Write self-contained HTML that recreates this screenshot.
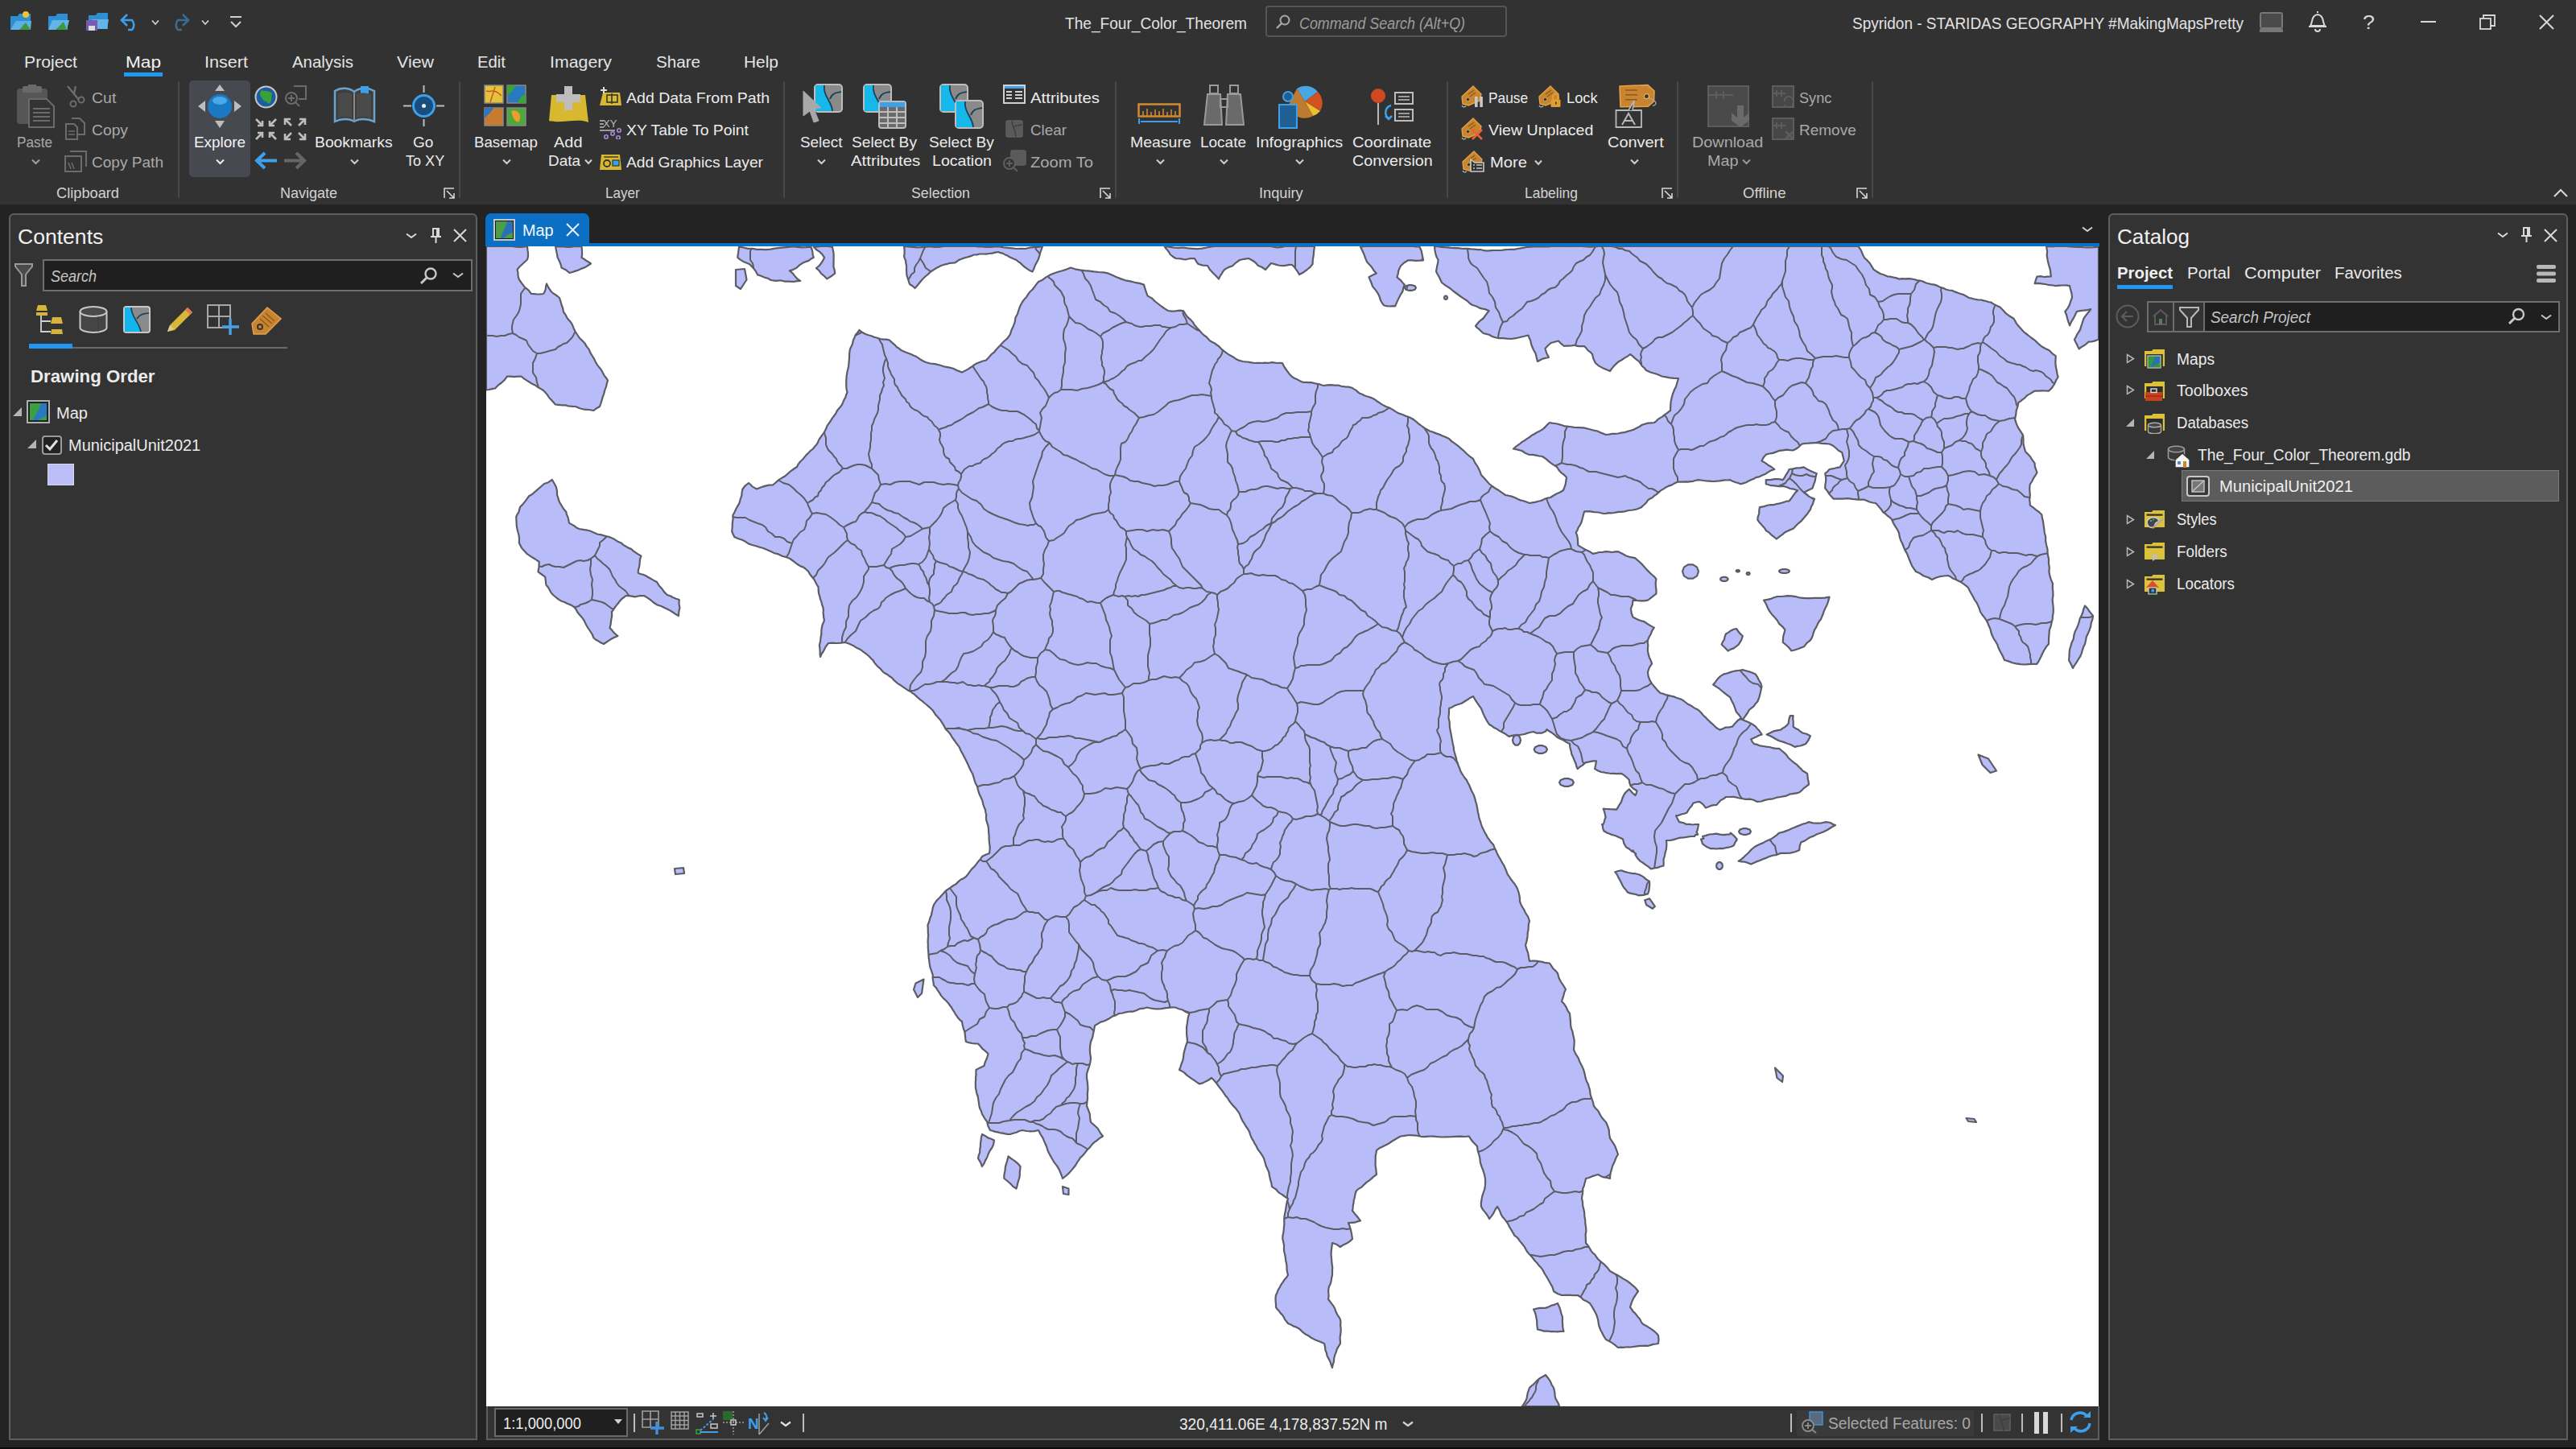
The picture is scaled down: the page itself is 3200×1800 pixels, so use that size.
<!DOCTYPE html>
<html><head><meta charset="utf-8">
<style>
*{box-sizing:border-box;margin:0;padding:0}
html,body{width:3200px;height:1800px;overflow:hidden;background:#232323;font-family:"Liberation Sans",sans-serif;color:#e8e8e8}
.abs{position:absolute}
#top{position:absolute;left:0;top:0;width:3200px;height:254px;background:#323232}
.t{position:absolute;white-space:nowrap;line-height:1}
.rb{font-size:21px;color:#e6e6e6}
.dis{color:#8a8a8a}
.tab{font-size:23px;color:#e6e6e6}
.grp{font-size:20px;color:#c8c8c8}
.sep{position:absolute;width:2px;background:#454545}
.panel{position:absolute;background:#333;border:2px solid #5e5e5e;border-radius:6px 6px 0 0}
svg{display:block}
</style></head><body>
<div id="top">
<div class="abs" style="left:154px;top:90px;width:48px;height:5px;background:#1d9bf0"></div>
<div class="abs" style="left:1572px;top:7px;width:300px;height:39px;border:2px solid #555;border-radius:4px"></div>
<svg class="abs" style="left:1584px;top:17px" width="20" height="20" viewBox="0 0 20 20"><circle cx="12" cy="8" r="5.5" fill="none" stroke="#aaa" stroke-width="2"/><path d="M8,12 L2,18" stroke="#aaa" stroke-width="2.4"/></svg>
<svg class="abs" style="left:12px;top:12px" width="28" height="26" viewBox="0 0 28 26"><path d="M1,8 H10 L12,5 H26 V25 H1Z" fill="#2f8fd0"/><path d="M1,25 L8,14 H27 L26,25Z" fill="#5cb0e8"/><path d="M12,25 L20,16 L26,25Z" fill="#3c9a3c"/><circle cx="20" cy="6" r="4" fill="#f4c430"/></svg>
<svg class="abs" style="left:59px;top:14px" width="28" height="24" viewBox="0 0 28 24"><path d="M1,6 H10 L12,3 H25 V23 H1Z" fill="#2f8fd0"/><path d="M1,23 L6,11 H27 L24,23Z" fill="#64b4ea"/><path d="M10,23 L20,13 L24,23Z" fill="#3c9a3c"/></svg>
<svg class="abs" style="left:106px;top:13px" width="29" height="26" viewBox="0 0 29 26"><path d="M4,6 H13 L15,3 H28 V23 H4Z" fill="#2f8fd0"/><path d="M4,23 L9,11 H29 L27,23Z" fill="#64b4ea"/><rect x="1" y="12" width="14" height="13" fill="#7a5ab0"/><rect x="4" y="19" width="8" height="6" fill="#ddd"/></svg>
<svg class="abs" style="left:149px;top:16px" width="27" height="23" viewBox="0 0 27 23"><path d="M4,9 H15 A9,9 0 0 1 15,21 H10" fill="none" stroke="#3ea0ea" stroke-width="2.6"/><path d="M9,2 L2,9 L9,16" fill="none" stroke="#3ea0ea" stroke-width="2.6"/></svg>
<svg class="abs" style="left:187.5px;top:23.5px" width="10" height="8" viewBox="0 0 10 8"><path d="M1,1.5 L5.0,6 L9,1.5" fill="none" stroke="#cfcfcf" stroke-width="1.8"/></svg>
<svg class="abs" style="left:211px;top:16px" width="25" height="23" viewBox="0 0 25 23"><path d="M21,9 H10 A9,9 0 0 0 10,21 H15" fill="none" stroke="#3a6c94" stroke-width="2.6"/><path d="M16,2 L23,9 L16,16" fill="none" stroke="#3a6c94" stroke-width="2.6"/></svg>
<svg class="abs" style="left:249.5px;top:23.5px" width="10" height="8" viewBox="0 0 10 8"><path d="M1,1.5 L5.0,6 L9,1.5" fill="none" stroke="#cfcfcf" stroke-width="1.8"/></svg>
<svg class="abs" style="left:285px;top:19px" width="16" height="17" viewBox="0 0 16 17"><path d="M1,2 H15" stroke="#cfcfcf" stroke-width="2"/><path d="M2,8 L8,14 L14,8" fill="none" stroke="#cfcfcf" stroke-width="2"/></svg>
<svg class="abs" style="left:2806px;top:14px" width="31" height="27" viewBox="0 0 31 27"><rect x="2" y="2" width="27" height="19" rx="2" fill="#4a4a4a" stroke="#777" stroke-width="2"/><rect x="1" y="22" width="29" height="4" fill="#777"/></svg>
<svg class="abs" style="left:2865px;top:12px" width="28" height="28" viewBox="0 0 28 28"><path d="M14,2 V4 M5,20 C8,16 6,7 14,6 C22,7 20,16 23,20 Z M3,21 H25 M11,24 A3,3 0 0 0 17,24" fill="none" stroke="#d8d8d8" stroke-width="2"/></svg>
<div class="abs" style="left:3007px;top:26px;width:19px;height:2px;background:#d8d8d8"></div>
<svg class="abs" style="left:3080px;top:18px" width="20" height="19" viewBox="0 0 20 19"><rect x="1" y="5" width="13" height="13" fill="none" stroke="#d8d8d8" stroke-width="1.8"/><path d="M5,5 V1 H19 V14 H14" fill="none" stroke="#d8d8d8" stroke-width="1.8"/></svg>
<svg class="abs" style="left:3154px;top:18px" width="19" height="19" viewBox="0 0 19 19"><path d="M1,1 L18,18 M18,1 L1,18" stroke="#d8d8d8" stroke-width="2"/></svg>
<div class="abs" style="left:221px;top:101px;width:2px;height:145px;background:#474747"></div>
<div class="abs" style="left:570px;top:101px;width:2px;height:145px;background:#474747"></div>
<div class="abs" style="left:973px;top:101px;width:2px;height:145px;background:#474747"></div>
<div class="abs" style="left:1385px;top:101px;width:2px;height:145px;background:#474747"></div>
<div class="abs" style="left:1797px;top:101px;width:2px;height:145px;background:#474747"></div>
<div class="abs" style="left:2083px;top:101px;width:2px;height:145px;background:#474747"></div>
<div class="abs" style="left:2325px;top:101px;width:2px;height:145px;background:#474747"></div>
<svg class="abs" style="left:551px;top:233px" width="15" height="14" viewBox="0 0 15 14"><path d="M1,13 V1 H13" fill="none" stroke="#d8d8d8" stroke-width="1.6"/><path d="M4,4 L13,13 M7,13 H13 V7" fill="none" stroke="#d8d8d8" stroke-width="1.6"/></svg>
<svg class="abs" style="left:1366px;top:233px" width="15" height="14" viewBox="0 0 15 14"><path d="M1,13 V1 H13" fill="none" stroke="#d8d8d8" stroke-width="1.6"/><path d="M4,4 L13,13 M7,13 H13 V7" fill="none" stroke="#d8d8d8" stroke-width="1.6"/></svg>
<svg class="abs" style="left:2064px;top:233px" width="15" height="14" viewBox="0 0 15 14"><path d="M1,13 V1 H13" fill="none" stroke="#d8d8d8" stroke-width="1.6"/><path d="M4,4 L13,13 M7,13 H13 V7" fill="none" stroke="#d8d8d8" stroke-width="1.6"/></svg>
<svg class="abs" style="left:2306px;top:233px" width="15" height="14" viewBox="0 0 15 14"><path d="M1,13 V1 H13" fill="none" stroke="#d8d8d8" stroke-width="1.6"/><path d="M4,4 L13,13 M7,13 H13 V7" fill="none" stroke="#d8d8d8" stroke-width="1.6"/></svg>
<svg class="abs" style="left:3172px;top:234px" width="18" height="12" viewBox="0 0 18 12"><path d="M1,10 L9,2 L17,10" fill="none" stroke="#d8d8d8" stroke-width="2"/></svg>
<svg class="abs" style="left:20px;top:105px" width="48" height="54" viewBox="0 0 48 54"><rect x="1" y="5" width="38" height="44" rx="4" fill="#565656"/><rect x="8" y="2" width="24" height="8" rx="2" fill="#6a6a6a"/><rect x="15" y="0" width="10" height="4" fill="#6a6a6a"/><path d="M16,18 H38 L47,27 V53 H16Z" fill="#333" stroke="#6a6a6a" stroke-width="2"/><path d="M21,30 H42 M21,35 H42 M21,40 H42 M21,45 H42" stroke="#6a6a6a" stroke-width="2"/></svg>
<svg class="abs" style="left:38.8px;top:197px" width="11" height="8" viewBox="0 0 11 8"><path d="M1,1.5 L5.5,6 L10,1.5" fill="none" stroke="#a0a0a0" stroke-width="2"/></svg>
<svg class="abs" style="left:82px;top:106px" width="24" height="28" viewBox="0 0 24 28"><path d="M2,1 L16,18 M12,1 L10,10" stroke="#6c6c6c" stroke-width="2.4" fill="none"/><circle cx="9" cy="23" r="3.5" fill="none" stroke="#6c6c6c" stroke-width="2"/><circle cx="19" cy="18" r="3.5" fill="none" stroke="#6c6c6c" stroke-width="2"/></svg>
<svg class="abs" style="left:81px;top:146px" width="25" height="28" viewBox="0 0 25 28"><path d="M1,8 H11 L15,12 V27 H1Z" fill="none" stroke="#6c6c6c" stroke-width="2"/><path d="M8,1 H18 L24,7 V21 H15" fill="none" stroke="#6c6c6c" stroke-width="2"/><path d="M4,17 H12 M4,21 H12" stroke="#6c6c6c" stroke-width="1.5"/></svg>
<svg class="abs" style="left:80px;top:187px" width="28" height="27" viewBox="0 0 28 27"><path d="M7,1 H27 V20 M1,7 H21 V26 H1Z" fill="none" stroke="#6c6c6c" stroke-width="2"/><path d="M5,15 L8,23 M9,15 L12,23" stroke="#6c6c6c" stroke-width="1.6"/></svg>
<div class="abs" style="left:235px;top:100px;width:76px;height:120px;background:#474950;border-radius:5px"></div>
<svg class="abs" style="left:245px;top:104px" width="56" height="56" viewBox="0 0 56 56"><path d="M28,1 L34,9 H22Z M28,55 L22,46 H34Z M1,28 L10,21 V35Z M55,28 L46,35 V21Z" fill="#bdbdbd"/><circle cx="28" cy="28" r="15" fill="#1b78c2"/><ellipse cx="28" cy="21" rx="9" ry="5" fill="#4aa8e8"/></svg>
<svg class="abs" style="left:267.8px;top:197px" width="11" height="8" viewBox="0 0 11 8"><path d="M1,1.5 L5.5,6 L10,1.5" fill="none" stroke="#f0f0f0" stroke-width="2"/></svg>
<svg class="abs" style="left:316px;top:106px" width="29" height="29" viewBox="0 0 29 29"><circle cx="14.5" cy="14.5" r="13" fill="#1d5f9e" stroke="#c8c8c8" stroke-width="2"/><path d="M9,6 C14,8 18,6 22,10 C20,15 23,20 18,23 C15,19 10,20 9,15 C6,12 7,9 9,6Z" fill="#3aa03a"/></svg>
<svg class="abs" style="left:352px;top:105px" width="29" height="28" viewBox="0 0 29 28"><circle cx="10" cy="17" r="7" fill="none" stroke="#6c6c6c" stroke-width="2"/><path d="M6,17 H14 M10,13 V21 M15,22 L20,27" stroke="#6c6c6c" stroke-width="2"/><path d="M13,2 H28 V18 H19" fill="none" stroke="#6c6c6c" stroke-width="2"/></svg>
<svg class="abs" style="left:316px;top:146px" width="29" height="29" viewBox="0 0 29 29"><g stroke="#bdbdbd" stroke-width="2.6" fill="none"><path d="M2,2 L10,10 M4,10 H10 V4"/><path d="M27,2 L19,10 M25,10 H19 V4"/><path d="M2,27 L10,19 M4,19 H10 V25"/><path d="M27,27 L19,19 M25,19 H19 V25"/></g></svg>
<svg class="abs" style="left:352px;top:146px" width="29" height="29" viewBox="0 0 29 29"><g stroke="#bdbdbd" stroke-width="2.6" fill="none"><path d="M10,10 L2,2 M2,9 V2 H9"/><path d="M19,10 L27,2 M27,9 V2 H20"/><path d="M10,19 L2,27 M2,20 V27 H9"/><path d="M19,19 L27,27 M27,20 V27 H20"/></g></svg>
<svg class="abs" style="left:316px;top:188px" width="29" height="23" viewBox="0 0 29 23"><path d="M28,11.5 H6 M13,2 L3,11.5 L13,21" fill="none" stroke="#3ea0ea" stroke-width="4"/></svg>
<svg class="abs" style="left:352px;top:188px" width="29" height="23" viewBox="0 0 29 23"><path d="M1,11.5 H23 M16,2 L26,11.5 L16,21" fill="none" stroke="#666" stroke-width="4"/></svg>
<svg class="abs" style="left:414px;top:107px" width="54" height="47" viewBox="0 0 54 47"><path d="M2,6 C10,1 20,2 26,7 C32,2 42,1 51,6 V44 C42,40 32,40 26,44 C20,40 10,40 2,44Z" fill="#3e3e3e" stroke="#6ba3cf" stroke-width="2.5"/><path d="M26,7 V44" stroke="#8a8a8a" stroke-width="2"/><path d="M34,0 H44 V28 L39,23 L34,28Z" fill="#3ea0ea"/><path d="M6,10 C12,7 18,7 23,10 V40 C18,37 12,37 6,40Z M29,10 C33,8 40,8 47,10 V40 C40,37 33,37 29,40Z" fill="#4a4a4a"/></svg>
<svg class="abs" style="left:434.5px;top:197px" width="11" height="8" viewBox="0 0 11 8"><path d="M1,1.5 L5.5,6 L10,1.5" fill="none" stroke="#cfcfcf" stroke-width="2"/></svg>
<svg class="abs" style="left:500px;top:105px" width="53" height="53" viewBox="0 0 53 53"><path d="M26.5,1 V10 M26.5,43 V52 M1,26.5 H11 M42,26.5 H52" stroke="#bdbdbd" stroke-width="2"/><circle cx="26.5" cy="26.5" r="13" fill="#174e7c" stroke="#3ea0ea" stroke-width="3"/><circle cx="26.5" cy="26.5" r="2.5" fill="#eee"/></svg>
<svg class="abs" style="left:601px;top:105px" width="53" height="52" viewBox="0 0 53 52"><rect x="1" y="1" width="23" height="22" fill="#e8c13a" stroke="#888" stroke-width="1.5"/><path d="M3,8 C9,10 12,4 22,14 M8,22 L14,3" stroke="#c0602a" stroke-width="1.5" fill="none"/><rect x="29" y="1" width="23" height="22" fill="#2a78c0" stroke="#888" stroke-width="1.5"/><path d="M29,1 H40 C36,8 33,10 29,14Z M52,23 H42 C45,15 48,14 52,12Z" fill="#3aa33a"/><rect x="1" y="29" width="23" height="22" fill="#c87a30" stroke="#888" stroke-width="1.5"/><path d="M1,29 H12 C9,35 5,37 1,42Z" fill="#2a78c0"/><rect x="29" y="29" width="23" height="22" fill="#4caa3c" stroke="#888" stroke-width="1.5"/><path d="M34,33 C42,30 48,38 44,46 C38,48 36,40 34,33Z" fill="#f09a30"/></svg>
<svg class="abs" style="left:623.8px;top:197px" width="11" height="8" viewBox="0 0 11 8"><path d="M1,1.5 L5.5,6 L10,1.5" fill="none" stroke="#cfcfcf" stroke-width="2"/></svg>
<svg class="abs" style="left:681px;top:106px" width="51" height="49" viewBox="0 0 51 49"><path d="M4,12 H46 L50,46 C38,40 14,48 1,44Z" fill="#d8b82e"/><path d="M20,1 H30 V11 H40 V21 H30 V31 H20 V21 H10 V11 H20Z" fill="#bdbdbd"/></svg>
<svg class="abs" style="left:725.8px;top:197px" width="10" height="8" viewBox="0 0 10 8"><path d="M1,1.5 L5.0,6 L9,1.5" fill="none" stroke="#cfcfcf" stroke-width="2"/></svg>
<svg class="abs" style="left:744px;top:107px" width="29" height="26" viewBox="0 0 29 26"><path d="M5,8 H26 L28,24 H1Z" fill="#d8b82e"/><path d="M6,1 V9 M2,5 H10" stroke="#ddd" stroke-width="2"/><rect x="10" y="11" width="13" height="9" fill="none" stroke="#333" stroke-width="1.6"/><path d="M16,9 V22" stroke="#333" stroke-width="1.6"/></svg>
<svg class="abs" style="left:744px;top:146px" width="29" height="27" viewBox="0 0 29 27"><text x="5" y="12" font-family="Liberation Sans" font-size="13" fill="#bdbdbd">XY</text><path d="M1,4 H6 M1,8 H6 M1,12 H6 M1,16 H20" stroke="#bdbdbd" stroke-width="1.4"/><circle cx="9" cy="24" r="2.2" fill="none" stroke="#a98ae0" stroke-width="1.6"/><circle cx="17" cy="20" r="2.2" fill="none" stroke="#a98ae0" stroke-width="1.6"/><circle cx="25" cy="16" r="2.2" fill="none" stroke="#a98ae0" stroke-width="1.6"/><circle cx="24" cy="25" r="2.2" fill="none" stroke="#a98ae0" stroke-width="1.6"/></svg>
<svg class="abs" style="left:744px;top:189px" width="29" height="23" viewBox="0 0 29 23"><path d="M3,3 H26 L28,22 H1Z" fill="#d8b82e"/><circle cx="10" cy="14" r="4" fill="none" stroke="#333" stroke-width="1.8"/><rect x="17" y="10" width="8" height="7" fill="#3ea0ea" stroke="#333" stroke-width="1.2"/><path d="M6,6 H24" stroke="#333" stroke-width="1.4"/></svg>
<svg class="abs" style="left:996px;top:104px" width="52" height="56" viewBox="0 0 52 56"><rect x="16" y="1" width="34" height="34" rx="4" fill="#8a8a8a" stroke="#bdbdbd" stroke-width="2"/><path d="M17,2 H28 C26,15 38,23 38,34 H17 Z" fill="#16b8ec"/><path d="M28,2 C26,15 38,23 38,34 M35,19 C38,11 44,11 49,10" fill="none" stroke="#17405a" stroke-width="1.8"/><path d="M2,9 L24,30 L15,31 L21,46 L15,48 L10,34 L2,40Z" fill="#a8a8a8" stroke="#a8a8a8" stroke-width="1"/></svg>
<svg class="abs" style="left:1015.3px;top:197px" width="11" height="8" viewBox="0 0 11 8"><path d="M1,1.5 L5.5,6 L10,1.5" fill="none" stroke="#cfcfcf" stroke-width="2"/></svg>
<svg class="abs" style="left:1072px;top:104px" width="55" height="56" viewBox="0 0 55 56"><rect x="1" y="1" width="34" height="34" rx="4" fill="#8a8a8a" stroke="#bdbdbd" stroke-width="2"/><path d="M2,2 H13 C11,15 23,23 23,34 H2 Z" fill="#16b8ec"/><path d="M13,2 C11,15 23,23 23,34 M20,19 C23,11 29,11 34,10" fill="none" stroke="#17405a" stroke-width="1.8"/><rect x="20" y="22" width="33" height="33" rx="3" fill="#6a6a6a" stroke="#bdbdbd" stroke-width="2"/><rect x="21" y="23" width="31" height="6" fill="#3ea0ea"/><path d="M21,35 H52 M21,42 H52 M21,49 H52 M31,29 V55 M42,29 V55" stroke="#bdbdbd" stroke-width="2"/></svg>
<svg class="abs" style="left:1167px;top:104px" width="56" height="56" viewBox="0 0 56 56"><rect x="1" y="1" width="34" height="34" rx="4" fill="#8a8a8a" stroke="#bdbdbd" stroke-width="2"/><path d="M2,2 H13 C11,15 23,23 23,34 H2 Z" fill="#16b8ec"/><path d="M13,2 C11,15 23,23 23,34 M20,19 C23,11 29,11 34,10" fill="none" stroke="#17405a" stroke-width="1.8"/><rect x="20" y="21" width="34" height="34" rx="4" fill="#8a8a8a" stroke="#bdbdbd" stroke-width="2"/><path d="M21,22 H32 C30,35 42,43 42,54 H21 Z" fill="#16b8ec"/><path d="M32,22 C30,35 42,43 42,54 M39,39 C42,31 48,31 53,30" fill="none" stroke="#17405a" stroke-width="1.8"/></svg>
<svg class="abs" style="left:1246px;top:105px" width="28" height="24" viewBox="0 0 28 24"><rect x="1" y="1" width="26" height="22" fill="none" stroke="#d0d0d0" stroke-width="2"/><rect x="2" y="2" width="24" height="3" fill="#3ea0ea"/><path d="M4,9 H11 M15,9 H24 M4,13 H11 M15,13 H24 M4,17 H11 M15,17 H24" stroke="#d0d0d0" stroke-width="2"/></svg>
<svg class="abs" style="left:1249px;top:149px" width="22" height="22" viewBox="0 0 22 22"><rect x="1" y="1" width="20" height="20" rx="2" fill="#5a5a5a" stroke="#5f5f5f" stroke-width="1.5"/><path d="M8,1 C8,8 12,10 13,21 M10,9 C13,7 16,6 21,6" stroke="#3f3f3f" stroke-width="1.5" fill="none"/></svg>
<svg class="abs" style="left:1245px;top:186px" width="30" height="28" viewBox="0 0 30 28"><rect x="11" y="1" width="18" height="18" rx="2" fill="#5a5a5a" stroke="#5f5f5f" stroke-width="1.5"/><circle cx="9" cy="17" r="7" fill="#333" stroke="#5f5f5f" stroke-width="2"/><path d="M5,17 H13 M9,13 V21 M14,22 L19,27" stroke="#5f5f5f" stroke-width="2"/></svg>
<svg class="abs" style="left:1413px;top:128px" width="55" height="27" viewBox="0 0 55 27"><rect x="1.5" y="1.5" width="51" height="15" fill="none" stroke="#d08a30" stroke-width="2.5"/><path d="M7,16 V10 M12,16 V7 M17,16 V11 M22,16 V8 M27,16 V10 M32,16 V7 M37,16 V11 M42,16 V8 M47,16 V10" stroke="#d08a30" stroke-width="1.6"/><path d="M2,19 V26 M52,19 V26 M4,23 H50" stroke="#3ea0ea" stroke-width="2"/></svg>
<svg class="abs" style="left:1435.5px;top:197px" width="11" height="8" viewBox="0 0 11 8"><path d="M1,1.5 L5.5,6 L10,1.5" fill="none" stroke="#cfcfcf" stroke-width="2"/></svg>
<svg class="abs" style="left:1495px;top:105px" width="51" height="51" viewBox="0 0 51 51"><rect x="8" y="1" width="10" height="10" fill="none" stroke="#9a9a9a" stroke-width="2"/><rect x="33" y="1" width="10" height="10" fill="none" stroke="#9a9a9a" stroke-width="2"/><path d="M5,12 H21 L23,50 H1Z M30,12 H46 L50,50 H28Z" fill="#6a6a6a" stroke="#9a9a9a" stroke-width="2"/><rect x="21" y="18" width="9" height="10" fill="none" stroke="#9a9a9a" stroke-width="2"/></svg>
<svg class="abs" style="left:1514.5px;top:197px" width="11" height="8" viewBox="0 0 11 8"><path d="M1,1.5 L5.5,6 L10,1.5" fill="none" stroke="#cfcfcf" stroke-width="2"/></svg>
<svg class="abs" style="left:1587px;top:104px" width="57" height="56" viewBox="0 0 57 56"><path d="M34,22 L24,6 A20,20 0 0 1 50,10Z" fill="#4aa6e0"/><path d="M34,22 L50,10 A20,20 0 0 1 53,34Z" fill="#d0531f"/><path d="M34,22 L53,34 A20,20 0 0 1 44,40Z" fill="#e8c030"/><path d="M34,22 L44,40 A20,20 0 0 1 14,26 L24,6Z" fill="#c07a30"/><circle cx="13" cy="16" r="6" fill="#1f5f94" stroke="#3ea0ea" stroke-width="2"/><path d="M2,26 H24 V55 H2Z" fill="#1f5f94" stroke="#3ea0ea" stroke-width="2" rx="4"/></svg>
<svg class="abs" style="left:1608.7px;top:197px" width="11" height="8" viewBox="0 0 11 8"><path d="M1,1.5 L5.5,6 L10,1.5" fill="none" stroke="#cfcfcf" stroke-width="2"/></svg>
<svg class="abs" style="left:1702px;top:109px" width="55" height="47" viewBox="0 0 55 47"><circle cx="10" cy="10" r="9" fill="#d04a20"/><path d="M10,19 V46" stroke="#bbb" stroke-width="2"/><path d="M26,22 A9,9 0 0 0 23,38 M19,35 L23,39 L27,35" fill="none" stroke="#3ea0ea" stroke-width="2.5"/><rect x="31" y="6" width="22" height="14" fill="none" stroke="#bdbdbd" stroke-width="2"/><rect x="31" y="27" width="22" height="14" fill="none" stroke="#bdbdbd" stroke-width="2"/><path d="M35,11 H49 M35,15 H49 M35,32 H49 M35,36 H49" stroke="#bdbdbd" stroke-width="1.6"/></svg>
<svg class="abs" style="left:1815px;top:105px" width="30" height="30" viewBox="0 0 30 30"><path d="M15,2 L25,12 L23,20 L9,26 L2,24 L1,15Z" fill="#c8842e" stroke="#e2a24a" stroke-width="1.4" stroke-linejoin="round"/><path d="M9,12 L16,7 M11,15 L18,10" stroke="#8a5a20" stroke-width="1.3"/><circle cx="8.5" cy="18.5" r="2.2" fill="#333" stroke="#e2a24a" stroke-width="1"/><path d="M1,26 A3,3 0 0 0 6,27" fill="none" stroke="#bbb" stroke-width="1.1"/><rect x="17" y="15" width="3.6" height="13" fill="#c8c8c8"/><rect x="23.3" y="15" width="3.6" height="13" fill="#c8c8c8"/></svg>
<svg class="abs" style="left:1911px;top:105px" width="30" height="30" viewBox="0 0 30 30"><path d="M15,2 L25,12 L23,20 L9,26 L2,24 L1,15Z" fill="#c8842e" stroke="#e2a24a" stroke-width="1.4" stroke-linejoin="round"/><path d="M9,12 L16,7 M11,15 L18,10" stroke="#8a5a20" stroke-width="1.3"/><circle cx="8.5" cy="18.5" r="2.2" fill="#333" stroke="#e2a24a" stroke-width="1"/><path d="M1,26 A3,3 0 0 0 6,27" fill="none" stroke="#bbb" stroke-width="1.1"/><rect x="15.5" y="18.5" width="12" height="9.5" rx="1" fill="#e0a030"/><path d="M18,18.5 V15 A3.5,3.5 0 0 1 25,15 V18.5" fill="none" stroke="#e0a030" stroke-width="2"/><rect x="21" y="21.5" width="1.6" height="3" fill="#333"/></svg>
<svg class="abs" style="left:1815px;top:145px" width="30" height="30" viewBox="0 0 30 30"><path d="M15,2 L25,12 L23,20 L9,26 L2,24 L1,15Z" fill="#c8842e" stroke="#e2a24a" stroke-width="1.4" stroke-linejoin="round"/><path d="M9,12 L16,7 M11,15 L18,10" stroke="#8a5a20" stroke-width="1.3"/><circle cx="8.5" cy="18.5" r="2.2" fill="#333" stroke="#e2a24a" stroke-width="1"/><path d="M1,26 A3,3 0 0 0 6,27" fill="none" stroke="#bbb" stroke-width="1.1"/><path d="M14,16 L26,28 M26,16 L14,28" stroke="#e8603a" stroke-width="2.6"/></svg>
<svg class="abs" style="left:1816px;top:186px" width="30" height="30" viewBox="0 0 30 30"><path d="M15,2 L25,12 L23,20 L9,26 L2,24 L1,15Z" fill="#c8842e" stroke="#e2a24a" stroke-width="1.4" stroke-linejoin="round"/><path d="M9,12 L16,7 M11,15 L18,10" stroke="#8a5a20" stroke-width="1.3"/><circle cx="8.5" cy="18.5" r="2.2" fill="#333" stroke="#e2a24a" stroke-width="1"/><path d="M1,26 A3,3 0 0 0 6,27" fill="none" stroke="#bbb" stroke-width="1.1"/><path d="M11,12 L16,16 H27 V27 H11Z" fill="#333" stroke="#c8c8c8" stroke-width="1.6"/><path d="M14,19 H16 M18,19 H25 M14,23 H16 M18,23 H25" stroke="#c8c8c8" stroke-width="1.5"/></svg>
<svg class="abs" style="left:1906.0px;top:197.5px" width="10" height="8" viewBox="0 0 10 8"><path d="M1,1.5 L5.0,6 L9,1.5" fill="none" stroke="#cfcfcf" stroke-width="2"/></svg>
<svg class="abs" style="left:2006px;top:104px" width="52" height="56" viewBox="0 0 52 56"><path d="M6,3 L41,1.6 L49,9 L48.5,22 L41,28.3 L7,28.8Z" fill="#c8842e" stroke="#e2a24a" stroke-width="1.6" stroke-linejoin="round"/><path d="M13,8 H28 M13,13.7 H28 M13,19.8 H28" stroke="#8a5a20" stroke-width="1.6"/><circle cx="39.4" cy="15.7" r="3" fill="#333" stroke="#e8b060" stroke-width="1.2"/><path d="M42,17 L50,22 A3,3 0 0 1 47,27" fill="none" stroke="#aaa" stroke-width="1.2"/><path d="M1.5,33 H33 V54 H1.5Z" fill="#333" stroke="#b8b8b8" stroke-width="1.8" rx="4"/><path d="M17,33 L24,21 L22,33" fill="#333" stroke="#b8b8b8" stroke-width="1.6"/><path d="M9,51 L17,37 L25,51 M12,46 H22" fill="none" stroke="#b8b8b8" stroke-width="2"/></svg>
<svg class="abs" style="left:2025.0px;top:197px" width="11" height="8" viewBox="0 0 11 8"><path d="M1,1.5 L5.5,6 L10,1.5" fill="none" stroke="#cfcfcf" stroke-width="2"/></svg>
<svg class="abs" style="left:2120px;top:106px" width="54" height="53" viewBox="0 0 54 53"><rect x="2" y="1" width="50" height="50" fill="#4a4a4a" stroke="#5d5d5d" stroke-width="2"/><path d="M1,12 H33 M12,7 V17 M21,7 V17" stroke="#5d5d5d" stroke-width="2"/><path d="M38,25 V40 L31,34 V44 L42,52 L53,44 V34 L46,40 V25Z" fill="#6a6a6a"/></svg>
<svg class="abs" style="left:2163.5px;top:197px" width="11" height="8" viewBox="0 0 11 8"><path d="M1,1.5 L5.5,6 L10,1.5" fill="none" stroke="#9a9a9a" stroke-width="2"/></svg>
<svg class="abs" style="left:2201px;top:106px" width="28" height="28" viewBox="0 0 28 28"><rect x="1" y="1" width="26" height="26" fill="#474747" stroke="#5d5d5d" stroke-width="2"/><path d="M0,10 H17 M6,6 V14 M12,6 V14" stroke="#5d5d5d" stroke-width="2"/><path d="M16,20 A5,5 0 0 1 26,18 M26,22 A5,5 0 0 1 16,24" fill="none" stroke="#5d5d5d" stroke-width="2"/></svg>
<svg class="abs" style="left:2201px;top:146px" width="28" height="28" viewBox="0 0 28 28"><rect x="1" y="1" width="26" height="26" fill="#474747" stroke="#5d5d5d" stroke-width="2"/><path d="M0,10 H17 M6,6 V14 M12,6 V14" stroke="#5d5d5d" stroke-width="2"/><path d="M17,17 L27,27 M27,17 L17,27" stroke="#5d5d5d" stroke-width="2.5"/></svg>
<div class="t" style="left:1323.0px;top:17.9px;font-size:21px;color:#e2e2e2;transform:scaleX(0.9090);transform-origin:0 0">The_Four_Color_Theorem</div>
<div class="t" style="left:1614.0px;top:18.9px;font-size:20px;color:#9c9c9c;font-style:italic;transform:scaleX(0.8932);transform-origin:0 0">Command Search (Alt+Q)</div>
<div class="t" style="left:2301.0px;top:17.9px;font-size:21px;color:#e2e2e2;transform:scaleX(0.9046);transform-origin:0 0">Spyridon - STARIDAS GEOGRAPHY #MakingMapsPretty</div>
<div class="t" style="left:30.0px;top:66.1px;font-size:21px;color:#e4e4e4;transform:scaleX(1.0098);transform-origin:0 0">Project</div>
<div class="t" style="left:156.0px;top:66.1px;font-size:21px;color:#f2f2f2;transform:scaleX(1.0769);transform-origin:0 0">Map</div>
<div class="t" style="left:254.0px;top:66.1px;font-size:21px;color:#e4e4e4;transform:scaleX(1.0280);transform-origin:0 0">Insert</div>
<div class="t" style="left:363.0px;top:66.1px;font-size:21px;color:#e4e4e4;transform:scaleX(0.9718);transform-origin:0 0">Analysis</div>
<div class="t" style="left:493.0px;top:66.1px;font-size:21px;color:#e4e4e4;transform:scaleX(1.0190);transform-origin:0 0">View</div>
<div class="t" style="left:593.0px;top:66.1px;font-size:21px;color:#e4e4e4;transform:scaleX(0.9672);transform-origin:0 0">Edit</div>
<div class="t" style="left:683.0px;top:66.1px;font-size:21px;color:#e4e4e4;transform:scaleX(1.0150);transform-origin:0 0">Imagery</div>
<div class="t" style="left:815.0px;top:66.1px;font-size:21px;color:#e4e4e4;transform:scaleX(0.9813);transform-origin:0 0">Share</div>
<div class="t" style="left:924.0px;top:66.1px;font-size:21px;color:#e4e4e4;transform:scaleX(0.9953);transform-origin:0 0">Help</div>
<div class="t" style="left:21.0px;top:167.3px;font-size:19px;color:#a9a9a9;transform:scaleX(0.9055);transform-origin:0 0">Paste</div>
<div class="t" style="left:113.7px;top:112.1px;font-size:19px;color:#a9a9a9;transform:scaleX(1.0244);transform-origin:0 0">Cut</div>
<div class="t" style="left:113.7px;top:151.8px;font-size:19px;color:#a9a9a9;transform:scaleX(1.0144);transform-origin:0 0">Copy</div>
<div class="t" style="left:113.7px;top:191.8px;font-size:19px;color:#a9a9a9;transform:scaleX(1.0030);transform-origin:0 0">Copy Path</div>
<div class="t" style="left:70.0px;top:230.1px;font-size:19px;color:#d2d2d2;transform:scaleX(0.9591);transform-origin:0 0">Clipboard</div>
<div class="t" style="left:241.0px;top:167.3px;font-size:19px;color:#f4f4f4;transform:scaleX(0.9935);transform-origin:0 0">Explore</div>
<div class="t" style="left:391.0px;top:167.3px;font-size:19px;color:#ebebeb;transform:scaleX(1.0165);transform-origin:0 0">Bookmarks</div>
<div class="t" style="left:513.0px;top:167.3px;font-size:19px;color:#ebebeb;transform:scaleX(1.0016);transform-origin:0 0">Go</div>
<div class="t" style="left:503.5px;top:190.3px;font-size:19px;color:#ebebeb;transform:scaleX(0.9506);transform-origin:0 0">To XY</div>
<div class="t" style="left:348.0px;top:230.1px;font-size:19px;color:#d2d2d2;transform:scaleX(0.9467);transform-origin:0 0">Navigate</div>
<div class="t" style="left:589.0px;top:167.3px;font-size:19px;color:#ebebeb;transform:scaleX(0.9840);transform-origin:0 0">Basemap</div>
<div class="t" style="left:687.5px;top:167.3px;font-size:19px;color:#ebebeb;transform:scaleX(1.0499);transform-origin:0 0">Add</div>
<div class="t" style="left:680.5px;top:190.3px;font-size:19px;color:#ebebeb;transform:scaleX(0.9965);transform-origin:0 0">Data</div>
<div class="t" style="left:778.3px;top:112.1px;font-size:19px;color:#ebebeb;transform:scaleX(1.0277);transform-origin:0 0">Add Data From Path</div>
<div class="t" style="left:778.3px;top:151.8px;font-size:19px;color:#ebebeb;transform:scaleX(1.0205);transform-origin:0 0">XY Table To Point</div>
<div class="t" style="left:778.3px;top:191.8px;font-size:19px;color:#ebebeb;transform:scaleX(1.0124);transform-origin:0 0">Add Graphics Layer</div>
<div class="t" style="left:752.0px;top:230.1px;font-size:19px;color:#d2d2d2;transform:scaleX(0.8963);transform-origin:0 0">Layer</div>
<div class="t" style="left:993.6px;top:167.3px;font-size:19px;color:#ebebeb;transform:scaleX(0.9922);transform-origin:0 0">Select</div>
<div class="t" style="left:1058.0px;top:167.3px;font-size:19px;color:#ebebeb;transform:scaleX(1.0091);transform-origin:0 0">Select By</div>
<div class="t" style="left:1056.5px;top:190.3px;font-size:19px;color:#ebebeb;transform:scaleX(1.0739);transform-origin:0 0">Attributes</div>
<div class="t" style="left:1154.0px;top:167.3px;font-size:19px;color:#ebebeb;transform:scaleX(1.0054);transform-origin:0 0">Select By</div>
<div class="t" style="left:1158.0px;top:190.3px;font-size:19px;color:#ebebeb;transform:scaleX(1.0300);transform-origin:0 0">Location</div>
<div class="t" style="left:1280.0px;top:112.1px;font-size:19px;color:#ebebeb;transform:scaleX(1.0714);transform-origin:0 0">Attributes</div>
<div class="t" style="left:1280.0px;top:151.8px;font-size:19px;color:#a9a9a9;transform:scaleX(0.9911);transform-origin:0 0">Clear</div>
<div class="t" style="left:1280.0px;top:191.8px;font-size:19px;color:#a9a9a9;transform:scaleX(1.0601);transform-origin:0 0">Zoom To</div>
<div class="t" style="left:1131.5px;top:230.1px;font-size:19px;color:#d2d2d2;transform:scaleX(0.9338);transform-origin:0 0">Selection</div>
<div class="t" style="left:1403.6px;top:167.3px;font-size:19px;color:#ebebeb;transform:scaleX(1.0241);transform-origin:0 0">Measure</div>
<div class="t" style="left:1491.0px;top:167.3px;font-size:19px;color:#ebebeb;transform:scaleX(0.9992);transform-origin:0 0">Locate</div>
<div class="t" style="left:1560.0px;top:167.3px;font-size:19px;color:#ebebeb;transform:scaleX(1.0462);transform-origin:0 0">Infographics</div>
<div class="t" style="left:1680.0px;top:167.3px;font-size:19px;color:#ebebeb;transform:scaleX(1.0575);transform-origin:0 0">Coordinate</div>
<div class="t" style="left:1680.0px;top:190.3px;font-size:19px;color:#ebebeb;transform:scaleX(1.0374);transform-origin:0 0">Conversion</div>
<div class="t" style="left:1563.5px;top:230.1px;font-size:19px;color:#d2d2d2;transform:scaleX(0.9591);transform-origin:0 0">Inquiry</div>
<div class="t" style="left:1849.0px;top:112.1px;font-size:19px;color:#ebebeb;transform:scaleX(0.9132);transform-origin:0 0">Pause</div>
<div class="t" style="left:1945.5px;top:112.1px;font-size:19px;color:#ebebeb;transform:scaleX(0.9591);transform-origin:0 0">Lock</div>
<div class="t" style="left:1849.0px;top:151.8px;font-size:19px;color:#ebebeb;transform:scaleX(1.0308);transform-origin:0 0">View Unplaced</div>
<div class="t" style="left:1850.7px;top:191.8px;font-size:19px;color:#ebebeb;transform:scaleX(1.0624);transform-origin:0 0">More</div>
<div class="t" style="left:1996.8px;top:167.3px;font-size:19px;color:#ebebeb;transform:scaleX(1.0491);transform-origin:0 0">Convert</div>
<div class="t" style="left:1893.6px;top:230.1px;font-size:19px;color:#d2d2d2;transform:scaleX(0.9187);transform-origin:0 0">Labeling</div>
<div class="t" style="left:2102.4px;top:167.3px;font-size:19px;color:#a9a9a9;transform:scaleX(1.0438);transform-origin:0 0">Download</div>
<div class="t" style="left:2121.0px;top:190.3px;font-size:19px;color:#a9a9a9;transform:scaleX(1.0414);transform-origin:0 0">Map</div>
<div class="t" style="left:2235.3px;top:112.1px;font-size:19px;color:#a9a9a9;transform:scaleX(0.9562);transform-origin:0 0">Sync</div>
<div class="t" style="left:2235.3px;top:151.8px;font-size:19px;color:#a9a9a9;transform:scaleX(0.9993);transform-origin:0 0">Remove</div>
<div class="t" style="left:2165.0px;top:230.1px;font-size:19px;color:#d2d2d2;transform:scaleX(0.9802);transform-origin:0 0">Offline</div>
<div class="t" style="left:2935.0px;top:16.4px;font-size:24px;color:#d8d8d8;transform:scaleX(1.1228);transform-origin:0 0">?</div>
</div>
<!-- contents panel -->
<div class="panel" style="left:11px;top:265px;width:582px;height:1524px;border-bottom-width:2px">
</div>
<!-- map pane -->
<div class="abs" style="left:603px;top:265px;width:129px;height:41px;background:#0b6fc3;border-radius:7px 7px 0 0"></div>
<div class="abs" style="left:604px;top:302px;width:2004px;height:4px;background:#0b6fc3"></div>
<div class="abs" style="left:604px;top:306px;width:2003px;height:1441px;background:#fff;overflow:hidden">
<svg width="2003" height="1441" viewBox="0 0 2003 1441" style="display:block"><defs><clipPath id="lc"><path d="M91.5,19.8L92.8,23.1L93.5,26.5L98.8,29.2L103.5,33.0L107.0,32.0L110.4,30.9L113.9,29.7L117.1,28.2L120.6,26.9L123.9,25.4L126.9,23.5L130.0,21.5L127.2,19.5L124.2,17.8L121.5,15.7L118.5,14.0L119.1,10.5L119.0,7.0L118.9,3.5L118.5,0.0L114.4,0.2L110.4,0.0L106.3,0.7L102.2,0.9L98.2,0.7L94.1,0.2L90.1,0.5L86.0,0.0L86.7,3.4L87.3,6.8L88.1,10.2L88.5,13.6L90.1,16.7L91.5,19.8ZM856.6,15.0L862.5,15.3L868.2,16.5L874.0,15.2L879.9,15.0L882.0,18.6L884.5,22.0L890.1,23.6L896.0,24.0L898.8,28.7L902.5,32.7L906.3,36.6L910.0,40.6L911.4,37.5L913.3,34.7L915.0,31.7L917.0,29.0L921.9,26.1L927.2,24.2L931.3,20.3L936.0,17.0L941.5,15.8L947.0,15.0L950.4,16.7L953.6,18.7L956.5,21.2L959.0,24.0L963.8,26.0L968.0,29.0L971.5,25.0L975.0,21.0L978.0,21.8L981.0,22.6L983.9,23.5L987.0,24.0L990.5,24.1L994.0,23.6L997.5,22.9L1001.0,23.0L1003.8,25.6L1006.0,28.7L1008.1,31.7L1010.0,35.0L1015.0,32.4L1019.6,29.0L1023.5,25.9L1026.6,22.0L1026.8,16.5L1027.8,11.0L1028.2,5.5L1029.0,0.0L992.2,0.0L988.2,0.8L982.4,1.4L976.6,0.4L975.3,0.0L905.6,0.0L900.8,0.5L895.0,1.5L889.3,2.7L883.4,3.2L877.6,2.8L871.7,2.3L865.9,1.5L860.1,1.8L854.2,1.7L848.4,0.7L842.6,0.0L844.2,2.6L846.3,4.8L848.2,7.3L849.6,10.0L852.9,12.7L856.6,15.0ZM415.9,21.2L413.3,24.5L410.0,27.1L413.6,30.3L416.4,34.1L420.0,37.0L423.3,40.4L428.4,37.3L433.2,33.7L432.7,29.6L431.5,25.6L431.5,21.4L431.6,17.2L431.6,13.0L431.6,8.8L430.8,4.7L429.9,0.6L424.1,0.0L423.8,0.0L415.7,0.0L412.6,0.4L406.7,0.6L410.0,4.0L414.0,6.6L417.4,9.9L420.0,13.9L418.3,17.7L415.9,21.2ZM323.3,20.5L327.2,22.2L330.1,25.2L332.9,28.3L335.3,31.7L337.2,35.4L341.4,36.8L345.5,38.6L349.8,39.8L353.7,42.0L359.5,42.8L365.4,42.3L371.1,43.6L376.9,43.7L380.2,44.0L383.6,43.7L386.8,43.1L390.2,43.0L386.4,40.3L383.4,36.9L380.5,33.3L376.9,30.4L381.5,28.9L385.8,26.5L389.4,23.1L393.5,20.5L396.9,19.1L400.5,17.9L403.4,15.6L406.7,13.9L405.7,10.6L405.4,7.2L404.6,3.8L403.4,0.6L397.8,1.1L392.2,1.4L386.6,0.8L381.0,0.2L375.4,1.0L369.8,1.3L364.3,1.8L358.7,2.6L353.2,3.7L347.5,4.2L341.9,3.9L336.2,3.9L330.7,2.9L325.0,2.9L319.6,1.5L314.0,0.6L313.6,3.9L313.2,7.3L312.7,10.5L312.3,13.9L315.6,16.6L319.3,18.9L323.3,20.5ZM521.3,21.0L522.0,24.0L522.0,29.9L522.4,35.8L524.2,41.4L526.0,47.0L529.5,49.2L532.6,52.0L535.9,48.2L539.1,44.3L542.3,40.5L546.0,37.0L549.2,34.4L552.1,31.5L555.6,29.3L559.0,27.0L561.7,25.8L564.4,24.3L567.2,23.2L570.1,22.4L573.1,21.8L576.0,20.8L579.0,20.7L582.0,20.5L584.7,18.8L587.3,16.9L590.4,15.8L593.4,14.6L596.5,13.8L599.6,12.9L602.6,11.9L605.5,10.5L609.4,10.3L613.1,9.5L617.0,9.5L620.8,9.6L624.6,9.0L628.5,8.6L632.2,7.6L636.0,7.0L638.9,8.1L641.9,8.9L644.6,10.4L647.5,11.6L650.1,13.2L652.9,14.5L655.7,15.8L658.6,17.0L660.9,19.0L663.5,20.7L665.7,22.9L668.0,25.0L670.5,26.8L673.0,28.6L675.7,30.2L678.5,31.5L680.4,27.7L681.8,23.7L683.8,19.9L685.8,16.2L687.2,12.1L688.2,8.0L689.6,4.0L691.0,0.0L685.7,0.8L680.3,1.2L674.9,1.7L669.6,3.0L664.2,2.9L658.8,3.0L653.4,2.3L648.0,1.8L642.6,1.3L637.3,0.4L631.9,0.3L626.5,0.9L621.1,0.9L615.7,0.5L610.4,0.3L607.4,0.0L567.8,0.0L567.4,0.1L562.0,0.8L556.6,0.9L551.2,0.2L545.9,0.7L540.5,1.2L535.1,1.4L529.7,0.8L524.4,0.5L519.0,0.0L519.5,3.0L519.6,6.1L519.6,9.2L519.0,12.2L519.9,15.1L521.1,17.9L521.3,21.0ZM1100.3,26.3L1102.7,30.2L1105.8,33.6L1101.1,35.8L1096.5,38.3L1097.7,41.2L1099.0,44.0L1100.1,47.0L1101.1,49.9L1104.9,54.4L1108.1,59.2L1109.7,62.8L1110.8,66.6L1112.6,70.1L1115.1,73.2L1118.5,74.2L1122.1,74.5L1125.6,74.1L1129.1,74.4L1131.4,69.1L1133.8,63.9L1135.9,59.9L1138.4,56.2L1139.2,51.8L1140.7,47.6L1138.4,45.2L1136.4,42.6L1133.9,40.4L1131.4,38.3L1132.6,34.7L1133.1,31.0L1134.4,27.6L1136.1,24.3L1140.4,20.3L1145.4,17.3L1150.1,17.4L1154.7,17.8L1159.4,17.6L1164.0,17.3L1162.9,11.5L1161.7,5.6L1159.4,0.5L1154.7,0.5L1152.2,0.0L1091.0,0.0L1090.6,0.1L1086.0,0.5L1088.3,5.2L1090.4,9.9L1092.2,14.8L1094.2,19.6L1097.4,22.9L1100.3,26.3ZM316.0,53.0L323.5,41.5L321.0,28.0L310.0,29.0L310.0,49.0L316.0,53.0ZM1145.8,54.8L1150.2,54.8L1153.7,53.6L1155.0,51.5L1153.7,49.4L1150.2,48.2L1145.8,48.2L1142.3,49.4L1141.0,51.5L1142.3,53.6L1145.8,54.8ZM3.5,178.0L7.2,177.1L11.0,176.5L14.7,172.7L19.0,169.5L22.9,165.9L26.0,161.5L30.4,161.7L34.8,162.1L39.1,161.6L43.5,161.5L46.6,164.1L50.0,166.4L53.5,168.5L56.9,170.8L60.7,172.4L64.0,174.8L67.5,176.9L71.0,179.0L75.0,183.2L78.2,188.0L82.2,192.2L86.0,196.5L89.1,196.8L92.2,197.2L95.4,197.3L98.5,197.4L101.6,198.3L104.7,198.7L107.8,198.9L111.0,199.0L116.3,201.3L122.0,202.7L127.8,203.0L133.5,204.0L137.1,201.2L141.0,199.0L142.4,195.0L143.7,190.9L144.8,186.8L146.3,182.8L147.3,178.7L148.9,174.7L149.8,170.6L151.0,166.5L149.2,163.6L146.9,161.1L145.3,158.1L143.8,155.1L142.0,152.2L139.8,149.6L137.7,146.9L136.0,144.0L134.1,139.9L131.7,136.0L129.3,132.1L127.6,127.9L124.7,124.4L122.4,120.4L119.3,117.1L116.0,114.0L113.3,110.0L110.7,106.0L108.6,101.7L106.8,97.2L104.2,93.2L101.0,89.7L98.8,85.4L96.0,81.5L95.2,77.0L93.6,72.7L92.4,68.3L91.0,64.0L88.6,62.0L86.1,60.2L83.4,58.5L81.0,56.5L77.6,51.7L75.0,46.5L74.1,49.7L73.8,53.0L72.7,56.2L71.0,59.0L67.3,59.4L63.5,59.5L59.8,59.2L56.0,59.0L52.4,54.4L47.9,50.8L44.4,46.2L41.0,41.5L39.9,38.5L39.5,35.3L39.4,32.1L38.5,29.0L41.2,25.5L44.5,22.5L47.7,19.5L51.0,16.5L52.0,12.4L52.0,8.2L51.3,4.2L51.0,0.0L47.6,0.5L44.1,0.8L40.6,0.9L37.1,0.7L33.7,0.2L31.2,0.0L10.4,0.0L9.8,0.1L7.6,0.0L2.0,0.0L0.0,0.1L0.0,178.5L3.5,178.0ZM56.0,308.7L53.3,310.0L50.7,313.6L48.1,317.1L45.3,320.6L42.1,323.7L41.2,326.9L40.4,330.2L38.6,332.9L37.2,336.0L37.4,339.8L37.6,343.5L37.8,347.3L38.4,351.0L39.5,355.3L40.7,359.5L41.0,364.0L40.9,368.4L42.4,371.4L43.9,374.5L46.1,377.1L48.4,379.6L50.5,381.9L53.1,383.7L55.6,385.4L58.3,387.0L62.1,389.4L65.8,392.0L65.5,395.1L65.6,398.2L64.9,401.3L64.5,404.4L68.8,407.5L73.2,410.6L73.8,415.6L74.4,420.6L76.8,423.5L78.7,426.8L80.5,430.1L83.0,433.0L85.4,435.0L87.8,437.0L90.3,438.9L93.0,440.5L97.2,442.0L101.2,444.0L105.4,445.6L109.2,448.0L111.5,450.8L113.0,454.0L116.0,457.8L119.3,461.4L121.9,465.4L123.9,469.8L126.4,474.0L129.1,478.0L131.7,482.0L133.5,486.5L136.4,488.8L139.6,490.6L142.7,492.5L146.0,494.0L150.2,491.1L154.4,488.3L158.8,486.0L163.5,484.0L160.7,481.8L158.1,479.4L156.0,476.6L153.5,474.0L154.7,469.1L155.2,464.1L156.2,459.1L156.0,454.0L158.0,451.3L159.8,448.5L161.9,445.9L164.0,443.3L165.9,440.6L168.3,438.2L170.9,436.1L173.5,434.0L179.2,434.3L184.8,435.4L190.3,434.2L196.0,434.0L200.4,436.6L204.5,439.5L208.3,442.8L212.6,445.5L217.5,447.0L222.0,449.3L226.6,451.4L231.0,454.0L234.9,456.7L239.0,459.0L239.3,454.0L240.4,449.0L239.5,444.1L239.7,439.0L235.9,437.8L232.1,436.3L228.6,434.3L224.8,433.0L221.1,429.4L218.2,425.2L214.7,421.4L212.0,417.0L209.1,415.6L206.3,413.9L203.5,412.2L200.7,410.7L197.9,409.0L194.8,407.8L191.7,407.0L188.7,405.7L189.0,401.8L190.0,398.0L190.6,394.6L190.7,391.2L191.3,387.8L192.5,384.6L189.2,382.8L186.0,380.6L182.8,378.5L180.0,375.9L176.6,374.6L173.5,372.7L170.3,370.9L167.6,368.4L162.6,366.2L158.0,363.2L153.0,361.1L147.7,359.7L142.9,358.4L138.1,357.5L133.5,355.5L129.0,353.5L125.6,352.7L122.2,352.2L118.8,351.6L115.4,351.0L112.1,349.4L109.3,347.2L106.1,345.4L103.0,343.6L102.3,340.1L101.6,336.7L100.1,333.4L99.3,330.0L95.8,325.8L93.0,321.0L91.3,318.2L90.0,315.2L89.2,312.0L88.0,309.0L88.0,303.9L86.9,299.0L84.5,294.5L81.9,290.0L77.2,293.2L71.9,295.0L67.4,299.0L62.9,302.9L60.6,304.8L58.5,306.9L56.0,308.7ZM1180.7,27.5L1180.0,31.0L1181.7,34.5L1183.7,37.9L1185.4,41.4L1187.0,45.0L1191.7,48.6L1196.7,51.7L1201.2,55.5L1206.0,59.0L1210.0,62.0L1214.2,64.8L1218.4,67.5L1222.0,71.0L1224.7,72.7L1227.7,73.8L1230.7,74.8L1233.5,76.4L1236.5,77.4L1239.6,77.8L1242.6,78.9L1245.6,80.0L1242.1,84.7L1238.6,89.5L1235.8,91.5L1233.3,93.7L1231.1,96.3L1229.0,99.0L1231.3,101.4L1233.9,103.4L1236.2,105.8L1238.6,108.0L1242.2,108.9L1245.8,109.8L1249.1,111.8L1252.6,113.0L1257.8,114.2L1263.0,114.2L1268.3,114.7L1273.5,115.0L1278.8,114.2L1284.0,113.0L1289.3,111.8L1294.5,110.5L1295.7,113.8L1297.2,117.1L1297.9,120.6L1299.0,124.0L1301.1,128.7L1303.6,133.1L1304.7,138.1L1306.0,143.0L1309.3,141.3L1312.7,139.6L1316.3,138.8L1320.0,138.0L1317.2,132.7L1315.5,127.0L1318.9,123.3L1322.6,120.0L1327.3,118.8L1332.0,117.5L1335.3,120.9L1339.0,124.0L1342.1,123.6L1345.3,123.7L1348.4,123.5L1351.5,122.8L1354.5,123.7L1357.7,124.1L1360.8,124.1L1364.0,124.0L1366.5,126.6L1368.7,129.3L1371.6,131.3L1374.0,134.0L1375.4,139.7L1378.0,145.0L1381.9,148.4L1386.5,150.9L1391.3,152.9L1396.0,155.0L1398.4,151.6L1401.1,148.5L1404.0,145.6L1407.1,142.9L1410.8,141.0L1414.2,138.6L1417.8,136.6L1421.0,134.0L1423.9,136.1L1426.4,138.6L1429.2,140.8L1432.0,143.0L1434.0,145.9L1436.0,148.9L1438.8,151.2L1441.0,154.0L1445.7,156.3L1450.7,157.8L1455.6,159.3L1460.4,161.5L1465.5,162.4L1470.6,163.4L1475.8,163.8L1481.0,164.0L1479.5,169.0L1478.1,174.0L1475.8,178.6L1473.9,183.5L1472.5,188.5L1471.5,193.6L1471.2,198.8L1471.0,204.0L1468.5,205.9L1466.0,207.8L1463.4,209.5L1461.1,211.6L1458.3,213.1L1455.7,214.8L1453.5,217.1L1451.0,219.0L1447.0,219.3L1443.0,219.6L1439.1,220.7L1435.3,222.0L1432.1,224.3L1428.5,226.1L1424.9,227.9L1421.0,229.0L1417.3,230.1L1413.7,231.2L1409.9,231.6L1406.2,232.5L1402.4,232.8L1398.5,232.8L1394.8,233.6L1391.0,234.0L1385.6,231.9L1380.3,229.5L1374.6,228.3L1369.0,226.8L1363.3,225.4L1357.5,225.1L1351.7,224.8L1346.0,224.0L1342.8,223.6L1339.6,223.4L1336.6,222.2L1333.5,221.4L1330.4,220.5L1327.3,220.0L1324.1,219.6L1321.0,219.0L1318.3,221.3L1316.0,223.9L1313.5,226.4L1310.6,228.4L1307.6,230.0L1304.4,231.6L1301.5,233.5L1298.4,235.1L1295.7,237.3L1292.7,239.1L1290.0,241.2L1286.9,242.9L1284.2,245.1L1281.4,247.2L1278.6,249.2L1276.0,251.5L1281.3,252.6L1286.5,254.0L1291.0,257.0L1296.0,259.0L1300.1,258.9L1304.0,259.6L1308.0,260.5L1312.0,261.0L1316.6,264.2L1320.8,267.8L1325.3,271.1L1330.0,274.0L1332.3,277.8L1335.3,281.2L1338.9,283.8L1342.0,287.0L1341.4,291.1L1340.8,295.2L1339.5,299.1L1338.0,303.0L1334.1,305.5L1329.9,307.3L1325.9,309.5L1322.0,312.0L1318.7,312.6L1315.4,313.5L1312.4,315.1L1309.2,316.2L1305.9,317.0L1302.7,317.9L1299.3,318.3L1296.0,319.0L1292.3,317.5L1288.6,316.3L1284.7,315.4L1281.1,313.8L1277.5,312.0L1273.8,310.6L1269.9,309.7L1266.0,309.0L1262.0,306.2L1258.0,303.3L1253.8,300.8L1249.8,298.0L1245.9,295.0L1242.6,291.3L1239.3,287.6L1236.0,284.0L1234.1,278.7L1231.6,273.7L1228.4,269.1L1226.0,264.0L1222.1,261.1L1218.3,258.0L1214.9,254.5L1211.2,251.3L1207.5,248.1L1203.6,245.2L1199.5,242.4L1196.0,239.0L1193.0,237.6L1190.0,236.2L1186.9,235.1L1183.9,233.6L1180.8,232.6L1177.7,231.4L1174.7,230.2L1171.5,229.3L1168.7,227.5L1165.8,225.9L1163.1,224.0L1160.5,222.0L1157.8,220.1L1155.4,217.8L1152.8,215.8L1150.0,214.0L1146.0,212.0L1141.7,210.6L1137.6,208.7L1133.3,207.4L1129.4,205.1L1125.7,202.6L1121.8,200.5L1117.5,199.0L1114.8,197.6L1112.2,196.1L1109.7,194.3L1107.1,192.8L1104.7,190.9L1102.1,189.3L1099.4,188.1L1096.5,187.0L1093.6,186.2L1090.7,185.2L1088.1,183.8L1085.2,182.8L1082.8,181.0L1080.6,178.9L1078.0,177.4L1075.5,175.7L1071.2,174.6L1066.8,174.3L1062.4,173.8L1058.2,172.5L1053.8,172.6L1049.4,172.1L1045.0,172.4L1040.6,173.0L1037.4,172.3L1034.4,171.1L1031.1,170.7L1028.0,169.8L1024.8,169.2L1021.5,169.2L1018.3,168.8L1015.0,169.0L1011.4,167.5L1008.0,165.6L1004.3,164.1L1001.0,162.0L997.4,158.2L994.3,154.0L991.3,149.7L989.0,145.0L985.9,144.9L982.7,145.0L979.6,144.6L976.5,144.2L973.4,144.6L970.3,144.8L967.1,144.6L964.0,145.0L961.0,144.8L958.0,144.9L954.9,145.0L951.9,144.7L949.0,144.1L946.0,143.5L943.0,143.4L940.0,143.0L935.6,141.9L931.5,140.1L927.9,137.4L923.8,135.3L920.1,132.8L916.5,130.2L913.0,127.3L910.0,124.0L907.2,122.2L904.6,120.2L901.5,118.8L898.7,117.1L896.5,114.6L894.2,112.1L891.4,110.3L889.0,108.0L886.0,104.6L882.9,101.3L879.9,97.8L877.6,93.9L874.4,90.6L871.0,87.6L868.3,83.9L866.0,80.0L861.2,79.7L856.5,80.3L851.7,80.6L847.0,80.0L842.8,77.4L838.8,74.5L834.9,71.5L831.0,68.5L826.8,64.4L821.6,61.6L820.3,58.1L819.1,54.7L818.0,51.2L817.0,47.6L811.4,45.9L805.6,44.8L799.9,43.4L794.1,42.3L788.5,40.4L783.1,38.3L777.7,35.8L772.3,33.4L766.6,32.3L760.7,32.0L754.9,31.4L749.1,30.6L743.2,30.1L737.4,29.4L731.6,28.3L726.0,26.5L720.9,28.6L715.7,30.3L710.4,31.8L705.2,33.5L700.2,35.6L695.4,38.4L691.0,41.7L686.0,44.0L683.4,47.1L681.1,50.3L678.7,53.5L675.7,56.2L673.3,59.4L671.2,62.9L668.4,65.8L666.0,69.0L663.5,73.7L661.6,78.7L660.0,83.9L657.5,88.6L656.7,93.9L654.9,99.0L652.5,103.9L651.0,109.0L649.0,112.3L646.6,115.2L643.7,117.5L641.0,120.3L638.5,123.0L635.9,125.8L633.3,128.5L631.0,131.5L628.1,133.6L625.8,136.3L623.4,138.9L621.0,141.5L616.9,142.5L613.0,144.0L609.0,145.6L605.4,147.8L602.0,150.3L598.4,152.6L594.7,154.6L591.0,156.5L585.5,154.4L580.2,151.8L574.5,150.4L568.8,149.3L563.2,147.5L557.5,146.1L551.7,145.5L546.0,144.0L542.8,142.5L539.7,140.8L536.9,138.7L534.0,136.8L530.7,135.5L527.6,134.0L524.3,132.7L521.0,131.5L518.1,130.3L515.2,128.9L512.8,126.8L510.1,125.3L508.0,122.9L505.6,120.8L503.2,118.7L501.0,116.5L497.2,115.7L493.3,115.6L489.4,115.0L485.8,113.7L482.0,112.7L478.4,111.2L474.6,110.3L471.0,109.0L467.0,106.8L463.5,104.0L461.4,107.0L458.9,109.7L457.5,113.1L456.0,116.5L454.6,122.2L452.0,127.4L451.1,133.2L451.0,139.0L450.5,144.3L450.0,149.7L448.7,154.9L447.8,160.1L447.3,165.5L447.2,170.8L447.4,176.2L448.5,181.5L447.1,184.4L446.3,187.6L444.6,190.4L443.4,193.4L442.1,196.4L440.3,199.1L438.1,201.5L436.0,204.0L434.4,207.3L432.2,210.3L430.1,213.2L428.1,216.3L426.1,219.3L423.9,222.3L422.5,225.6L421.0,229.0L419.3,231.9L417.2,234.6L415.3,237.4L413.4,240.2L412.1,243.4L410.4,246.3L408.0,248.8L406.0,251.5L403.0,253.8L400.4,256.5L397.6,259.1L395.2,262.1L392.8,265.0L390.0,267.5L387.7,270.6L386.0,274.0L382.0,276.5L378.2,279.3L374.7,282.4L371.2,285.5L367.1,287.8L363.1,290.4L359.6,293.5L356.0,296.5L350.8,296.6L345.7,297.9L340.8,299.5L336.0,301.5L333.3,299.9L330.5,298.4L328.4,296.0L326.0,294.0L321.8,297.3L318.5,301.5L317.6,305.8L317.2,310.2L315.6,314.3L314.6,318.6L312.5,322.4L310.3,326.2L308.5,330.2L306.4,334.0L306.5,339.0L305.8,344.0L305.7,349.0L305.2,354.0L306.6,357.5L308.3,361.0L312.7,363.0L317.4,364.5L321.7,366.6L325.7,369.4L330.3,371.0L335.0,372.2L339.6,373.8L344.3,375.0L348.9,377.0L353.5,379.1L358.1,381.3L363.0,382.4L367.6,384.7L372.6,386.1L377.4,388.0L381.6,391.0L384.4,393.4L387.4,395.5L390.5,397.4L394.0,398.6L397.3,401.2L400.3,404.0L402.3,407.8L405.0,411.0L407.3,413.8L409.0,417.1L410.7,420.3L412.6,423.4L412.7,427.2L413.0,431.0L414.2,434.6L415.0,438.3L416.4,441.6L417.1,445.1L418.4,448.5L418.9,452.0L418.6,455.1L419.0,458.2L419.3,461.4L420.0,464.4L418.9,467.5L417.5,470.5L416.9,473.7L416.4,477.0L416.3,481.7L415.5,486.3L415.0,491.0L413.9,495.5L414.4,499.1L414.6,502.7L414.7,506.4L415.0,510.0L416.6,506.3L418.9,503.0L421.5,497.7L425.0,493.0L430.3,492.7L435.5,493.0L440.8,492.7L446.0,492.0L451.0,493.7L455.8,495.9L460.2,498.7L465.0,501.0L467.7,503.2L470.4,505.2L473.2,507.2L475.8,509.5L478.1,512.0L480.6,514.4L482.4,517.4L484.6,520.0L486.8,522.3L489.3,524.3L491.3,526.7L493.4,529.1L496.1,530.7L498.9,532.3L501.3,534.3L504.0,536.0L506.3,538.8L509.0,541.1L511.8,543.5L514.9,545.3L517.9,547.3L520.8,549.4L523.8,551.4L527.0,553.0L529.5,555.0L532.1,556.7L534.4,558.9L536.7,561.0L539.1,563.1L541.7,564.9L544.0,567.0L546.5,569.0L550.9,572.8L555.0,576.8L558.1,581.7L562.0,586.0L564.7,589.1L566.8,592.7L569.0,596.2L570.9,599.9L573.9,602.8L576.6,606.0L578.6,609.6L581.0,613.0L583.3,616.2L585.7,619.3L587.9,622.5L589.4,626.2L591.3,629.6L593.1,633.0L595.0,636.5L596.7,640.0L598.5,643.8L600.2,647.7L602.0,651.5L604.1,655.2L605.4,659.2L606.6,663.3L607.9,667.3L610.0,671.0L610.8,674.8L611.9,678.5L613.3,682.1L615.0,685.5L616.5,689.1L617.2,692.9L618.5,696.5L620.0,700.0L620.4,703.2L621.2,706.3L620.9,709.4L621.2,712.6L622.1,715.7L623.1,718.7L623.8,721.8L624.0,725.0L624.2,728.6L624.6,732.2L624.6,735.9L624.8,739.5L625.3,743.1L625.7,746.7L625.5,750.4L625.0,754.0L620.4,755.8L616.0,758.0L613.8,761.4L611.1,764.3L608.7,767.6L606.2,770.7L603.3,773.4L600.8,776.6L598.5,779.9L596.0,783.0L592.8,785.2L589.3,786.8L586.4,789.4L583.7,792.1L580.4,794.0L577.3,796.2L574.1,798.3L571.0,800.5L567.1,804.8L563.3,809.0L559.2,813.1L556.0,818.0L554.9,821.1L554.3,824.3L553.5,827.5L553.0,830.7L551.6,833.7L550.8,836.9L549.8,840.0L548.5,843.0L548.7,846.1L548.8,849.3L548.8,852.4L549.2,855.5L548.9,858.6L548.7,861.8L548.6,864.9L548.9,868.0L548.8,871.2L549.1,874.3L549.3,877.4L549.5,880.6L549.7,883.7L550.2,886.8L550.5,889.9L551.0,893.0L551.6,896.2L552.8,899.2L553.7,902.2L554.8,905.2L554.6,908.5L555.0,911.7L555.6,914.8L556.0,918.0L558.8,920.9L560.9,924.3L563.2,927.6L565.3,931.1L567.9,934.1L570.9,936.8L573.7,939.7L576.0,943.0L578.0,945.5L579.4,948.2L581.2,950.8L582.7,953.6L584.6,956.1L586.3,958.8L588.5,961.1L591.0,963.0L591.5,966.2L592.2,969.3L593.1,972.4L594.2,975.4L594.8,978.5L595.0,981.7L595.4,984.9L596.0,988.0L599.6,989.2L603.4,990.0L607.2,990.5L611.0,990.5L614.0,993.7L616.8,997.2L620.3,999.9L623.5,1003.0L622.5,1006.8L621.1,1010.5L619.5,1014.2L618.5,1018.0L613.4,1020.4L608.5,1023.0L608.4,1026.1L608.5,1029.3L608.0,1032.4L608.1,1035.5L607.8,1038.6L607.9,1041.8L607.9,1044.9L608.5,1048.0L609.2,1051.8L610.6,1055.5L611.2,1059.3L611.8,1063.1L612.3,1067.0L613.1,1070.8L614.9,1074.3L616.0,1078.0L618.9,1082.8L622.1,1087.4L623.5,1092.9L626.0,1098.0L629.1,1098.8L632.1,1099.9L635.3,1100.4L638.3,1101.3L641.5,1101.6L644.6,1102.4L647.8,1102.9L651.0,1103.0L654.7,1101.7L658.6,1100.7L662.2,1099.0L666.0,1098.0L671.0,1099.0L676.0,1099.3L681.1,1099.1L686.0,1098.0L688.5,1103.0L691.5,1107.7L693.6,1112.9L696.0,1118.0L697.6,1123.4L700.1,1128.4L702.8,1133.3L705.7,1138.1L709.2,1142.6L712.0,1147.5L714.2,1152.7L716.0,1158.0L720.2,1154.7L724.1,1151.1L727.6,1147.1L731.0,1143.0L732.8,1140.4L734.3,1137.7L736.2,1135.2L737.7,1132.4L740.1,1130.3L742.2,1128.0L744.2,1125.6L746.0,1123.0L748.4,1120.7L750.7,1118.2L752.7,1115.6L755.1,1113.2L757.8,1111.3L760.5,1109.2L763.1,1107.2L766.0,1105.5L762.6,1100.8L759.6,1095.8L755.4,1091.8L751.0,1088.0L750.2,1082.9L749.8,1077.7L748.0,1072.8L746.0,1068.0L746.4,1063.0L747.1,1058.0L746.8,1053.0L747.4,1048.0L747.3,1043.0L746.8,1038.0L746.0,1033.0L746.0,1028.0L747.5,1023.1L749.2,1018.3L750.4,1013.4L751.1,1008.3L750.2,1003.3L749.9,998.2L750.2,993.1L751.0,988.0L753.0,983.2L754.1,978.1L755.1,973.1L756.0,968.0L759.7,965.9L763.2,963.6L767.3,962.5L771.1,960.7L774.8,958.7L778.3,956.4L782.3,955.1L786.0,953.0L790.5,952.5L794.8,951.3L799.3,950.5L803.8,950.6L808.0,948.9L812.1,947.1L816.6,946.7L821.0,945.5L825.3,946.5L829.7,947.2L834.1,947.3L838.5,947.2L842.8,946.3L847.2,945.9L851.6,945.4L856.0,945.5L860.5,947.2L865.1,948.5L869.1,951.1L873.5,953.0L872.0,957.2L871.3,961.6L870.7,966.0L870.0,970.3L870.1,974.8L870.1,979.2L870.7,983.6L871.0,988.0L869.2,992.8L867.8,997.8L866.5,1002.8L866.0,1008.0L865.1,1011.9L863.6,1015.5L862.4,1019.3L861.0,1023.0L864.4,1024.7L867.6,1026.9L870.3,1029.6L873.5,1031.8L876.5,1034.1L879.7,1036.2L882.8,1038.4L886.0,1040.5L890.1,1039.4L893.8,1037.4L897.6,1035.5L901.0,1033.0L903.9,1035.7L906.5,1038.9L908.9,1042.0L911.3,1045.3L913.8,1048.4L916.1,1051.6L918.3,1055.0L921.0,1058.0L922.5,1060.7L924.3,1063.3L926.3,1065.7L928.3,1068.1L930.5,1070.3L932.5,1072.8L934.4,1075.3L936.0,1078.0L937.4,1082.0L939.2,1085.8L941.5,1089.3L943.6,1093.0L946.0,1096.4L948.1,1100.1L949.3,1104.1L951.0,1108.0L952.9,1111.1L954.5,1114.4L956.5,1117.5L958.0,1120.8L960.1,1123.8L962.2,1126.7L964.3,1129.8L966.0,1133.0L967.4,1137.4L968.5,1141.8L970.4,1146.0L972.2,1150.1L973.0,1154.6L973.9,1159.1L975.3,1163.5L976.0,1168.0L978.6,1169.8L981.2,1171.5L983.2,1174.0L985.5,1176.1L988.3,1177.6L990.8,1179.5L993.3,1181.4L996.0,1183.0L994.7,1187.2L993.8,1191.6L993.3,1196.0L992.4,1200.3L991.5,1204.7L991.2,1209.1L991.4,1213.6L991.0,1218.0L990.7,1221.8L990.2,1225.5L989.4,1229.2L989.3,1233.0L990.2,1236.7L991.0,1240.4L991.0,1244.2L991.0,1248.0L992.0,1251.7L992.7,1255.4L993.1,1259.2L993.9,1262.9L994.5,1266.7L994.5,1270.5L995.1,1274.3L996.0,1278.0L994.0,1281.1L991.5,1283.8L989.5,1286.9L987.4,1289.8L985.8,1293.1L983.8,1296.2L982.5,1299.7L981.0,1303.0L980.5,1306.7L980.6,1310.5L981.0,1314.2L981.0,1318.0L982.9,1320.5L985.0,1322.8L986.8,1325.4L989.1,1327.6L990.8,1330.2L992.1,1333.1L994.1,1335.5L996.0,1338.0L999.4,1339.4L1002.5,1341.4L1006.0,1342.5L1009.3,1344.2L1012.1,1346.6L1014.7,1349.2L1017.7,1351.4L1021.0,1353.0L1025.6,1356.3L1030.6,1358.8L1035.9,1360.8L1041.0,1363.0L1042.0,1366.9L1042.3,1370.9L1043.8,1374.5L1044.7,1378.4L1046.6,1382.0L1048.4,1385.5L1049.6,1389.3L1051.0,1393.0L1051.7,1389.1L1053.0,1385.3L1053.2,1381.3L1054.2,1377.4L1055.7,1373.7L1056.8,1369.8L1058.9,1366.4L1061.0,1363.0L1060.8,1359.2L1060.6,1355.5L1061.2,1351.8L1061.6,1348.0L1061.7,1344.2L1061.1,1340.5L1061.4,1336.7L1061.0,1333.0L1059.1,1329.9L1057.1,1326.8L1055.5,1323.5L1054.4,1320.0L1052.7,1316.7L1050.5,1313.8L1048.3,1310.8L1046.0,1308.0L1046.6,1304.2L1046.3,1300.4L1046.2,1296.5L1046.8,1292.7L1048.5,1289.2L1049.6,1285.6L1050.1,1281.7L1051.0,1278.0L1051.0,1273.0L1051.2,1268.0L1050.4,1263.0L1050.1,1258.0L1049.6,1253.0L1049.7,1248.0L1050.4,1243.0L1051.0,1238.0L1056.3,1239.8L1061.0,1243.0L1064.7,1240.4L1068.9,1238.6L1072.7,1236.1L1076.0,1233.0L1075.2,1227.9L1074.2,1222.8L1072.8,1217.8L1071.0,1213.0L1074.8,1212.8L1078.7,1212.7L1082.3,1211.4L1086.0,1210.5L1083.6,1207.3L1081.1,1204.2L1078.5,1201.1L1076.0,1198.0L1076.6,1194.9L1076.7,1191.7L1077.5,1188.5L1077.7,1185.3L1078.6,1182.3L1079.2,1179.1L1079.9,1176.0L1081.0,1173.0L1084.2,1170.5L1087.7,1168.6L1090.5,1165.6L1093.4,1162.9L1096.7,1160.6L1099.8,1158.1L1102.7,1155.3L1106.0,1153.0L1105.6,1149.3L1105.2,1145.5L1104.6,1141.8L1104.6,1138.0L1104.7,1134.2L1104.7,1130.4L1105.4,1126.7L1106.0,1123.0L1109.4,1120.3L1113.4,1118.4L1117.3,1116.5L1121.2,1114.6L1124.7,1112.0L1128.5,1109.8L1132.2,1107.5L1136.0,1105.5L1141.0,1104.8L1146.0,1104.0L1151.0,1104.3L1156.0,1104.7L1160.9,1105.8L1166.0,1106.2L1171.0,1105.7L1176.0,1105.5L1181.6,1106.2L1187.2,1106.5L1192.9,1106.3L1198.5,1106.2L1204.1,1105.9L1209.7,1105.7L1215.4,1106.0L1221.0,1105.5L1223.0,1109.0L1225.5,1112.2L1228.2,1115.1L1231.0,1118.0L1231.6,1123.2L1233.2,1128.1L1234.4,1133.1L1234.9,1138.3L1236.5,1143.2L1238.4,1148.0L1239.9,1152.9L1241.0,1158.0L1241.1,1162.5L1240.9,1166.9L1240.2,1171.3L1238.7,1175.5L1237.3,1179.8L1236.5,1184.1L1235.8,1188.5L1236.0,1193.0L1238.3,1196.9L1241.2,1200.4L1243.9,1204.0L1246.0,1208.0L1248.9,1204.6L1251.4,1200.8L1253.4,1196.7L1256.0,1193.0L1258.0,1196.1L1259.5,1199.4L1260.8,1202.8L1262.7,1206.0L1265.2,1208.6L1267.4,1211.6L1269.5,1214.6L1271.0,1218.0L1272.7,1220.7L1274.3,1223.4L1275.9,1226.1L1277.4,1228.8L1280.0,1230.7L1282.2,1232.9L1283.9,1235.6L1286.0,1238.0L1287.9,1240.5L1289.9,1242.9L1291.3,1245.8L1292.8,1248.5L1294.8,1250.9L1297.0,1253.2L1299.1,1255.5L1301.0,1258.0L1302.9,1260.5L1305.2,1262.7L1307.0,1265.2L1309.1,1267.5L1311.3,1269.8L1313.0,1272.5L1314.3,1275.3L1316.0,1278.0L1318.8,1282.8L1321.6,1287.7L1324.4,1292.6L1326.0,1298.0L1330.7,1301.0L1336.0,1303.0L1341.0,1302.9L1346.0,1302.9L1351.0,1303.1L1356.0,1303.0L1359.8,1305.5L1363.0,1308.7L1367.1,1310.6L1371.0,1313.0L1374.0,1317.7L1376.8,1322.6L1379.3,1327.6L1381.0,1333.0L1381.5,1336.4L1382.0,1339.7L1383.1,1343.0L1384.3,1346.2L1386.0,1349.2L1387.4,1352.2L1389.1,1355.2L1391.0,1358.0L1395.0,1360.1L1398.9,1362.4L1402.6,1365.1L1406.0,1368.0L1409.1,1367.7L1412.3,1367.8L1415.4,1367.5L1418.6,1367.4L1421.7,1367.5L1424.8,1367.0L1428.0,1366.6L1431.1,1366.2L1434.2,1365.8L1437.4,1365.8L1440.5,1365.7L1443.7,1365.8L1446.7,1364.9L1449.7,1363.9L1452.9,1363.5L1456.0,1363.0L1456.5,1358.0L1456.0,1353.0L1454.0,1350.5L1451.7,1348.3L1449.3,1346.3L1446.7,1344.6L1444.0,1342.9L1441.4,1341.2L1438.6,1339.8L1436.0,1338.0L1434.4,1335.3L1433.0,1332.5L1430.9,1330.1L1429.0,1327.6L1427.0,1325.2L1424.6,1323.1L1423.0,1320.4L1421.0,1318.0L1422.6,1312.6L1424.8,1307.4L1427.8,1302.6L1431.0,1298.0L1428.8,1295.2L1426.4,1292.6L1423.6,1290.4L1421.0,1288.0L1418.1,1285.8L1415.0,1283.9L1411.8,1282.1L1408.8,1280.1L1405.6,1278.2L1402.3,1276.6L1399.2,1274.7L1396.0,1273.0L1392.8,1268.8L1389.1,1264.9L1385.0,1261.6L1381.0,1258.0L1379.1,1255.5L1377.5,1252.7L1375.0,1250.8L1372.9,1248.4L1371.4,1245.7L1369.8,1243.0L1367.9,1240.5L1366.0,1238.0L1365.9,1233.0L1365.6,1228.0L1366.4,1223.0L1366.0,1218.0L1365.3,1213.6L1365.2,1209.2L1364.3,1204.8L1364.2,1200.4L1363.3,1196.1L1362.2,1191.8L1362.0,1187.3L1361.0,1183.0L1361.3,1179.8L1362.0,1176.7L1362.2,1173.5L1362.3,1170.3L1363.7,1167.3L1364.4,1164.2L1365.3,1161.1L1366.0,1158.0L1369.8,1157.0L1373.5,1155.4L1377.2,1154.2L1381.0,1153.0L1384.5,1154.9L1388.2,1156.4L1392.2,1156.9L1396.0,1158.0L1396.2,1154.0L1397.0,1150.1L1398.1,1146.2L1399.1,1142.4L1400.9,1138.8L1402.4,1135.1L1403.9,1131.4L1406.0,1128.0L1404.1,1122.7L1402.1,1117.4L1399.1,1112.7L1396.0,1108.0L1395.1,1102.9L1394.7,1097.7L1393.1,1092.8L1391.0,1088.0L1388.8,1085.8L1386.8,1083.3L1384.9,1080.8L1383.4,1078.1L1382.0,1075.2L1380.1,1072.7L1377.9,1070.5L1376.0,1068.0L1374.8,1063.0L1373.1,1058.1L1371.5,1053.2L1371.0,1048.0L1369.8,1044.2L1368.7,1040.4L1366.9,1036.9L1365.6,1033.1L1364.9,1029.2L1363.9,1025.4L1362.7,1021.6L1361.0,1018.0L1358.4,1013.0L1356.4,1007.8L1353.3,1003.1L1351.0,998.0L1351.3,994.3L1351.6,990.5L1351.7,986.7L1351.0,983.0L1350.1,979.3L1349.5,975.5L1348.0,972.0L1347.2,968.2L1347.0,964.4L1346.8,960.6L1346.4,956.8L1346.0,953.0L1343.4,949.3L1341.6,945.1L1339.2,941.3L1336.0,938.0L1337.2,934.2L1338.4,930.5L1339.3,926.6L1341.0,923.0L1338.1,918.2L1334.9,913.5L1332.4,908.5L1331.0,903.0L1328.4,899.9L1325.4,897.2L1323.2,893.8L1321.0,890.5L1317.9,890.2L1314.7,889.8L1311.7,888.9L1308.6,888.3L1305.5,887.8L1302.3,887.7L1299.1,887.7L1296.0,888.0L1295.0,882.9L1294.2,877.8L1292.4,873.0L1291.0,868.0L1292.2,864.4L1293.0,860.6L1293.6,856.9L1293.7,853.0L1294.5,849.3L1294.7,845.5L1295.0,841.7L1296.0,838.0L1294.1,832.7L1291.0,828.0L1289.4,824.4L1287.3,821.0L1285.4,817.4L1284.0,813.7L1284.0,809.6L1283.3,805.7L1282.3,801.8L1281.0,798.0L1279.3,794.8L1277.2,791.7L1275.0,788.8L1272.7,786.0L1270.8,782.8L1268.6,779.9L1267.4,776.4L1266.0,773.0L1264.3,769.1L1262.1,765.6L1260.1,761.9L1257.9,758.3L1255.9,754.6L1254.4,750.7L1252.5,746.9L1251.0,743.0L1248.3,740.4L1246.2,737.4L1244.0,734.5L1242.4,731.2L1240.4,728.1L1238.9,724.7L1237.2,721.5L1236.0,718.0L1235.1,714.9L1234.0,711.9L1233.1,708.8L1232.6,705.6L1231.9,702.5L1231.4,699.3L1230.8,696.1L1230.2,693.0L1229.1,689.9L1228.5,686.8L1227.5,683.7L1226.4,680.7L1224.8,677.9L1223.4,675.0L1222.2,672.0L1221.0,669.0L1219.3,666.0L1217.8,663.0L1215.6,660.3L1213.7,657.5L1211.9,654.6L1210.2,651.7L1209.2,648.4L1207.7,645.3L1206.8,642.0L1205.4,638.9L1204.9,635.5L1203.9,632.3L1202.9,629.0L1202.0,625.7L1201.8,622.3L1201.0,619.0L1199.9,613.4L1198.9,607.8L1197.8,602.3L1196.9,596.7L1196.7,591.0L1195.4,585.4L1196.0,579.7L1196.0,574.0L1199.9,572.4L1203.6,570.3L1207.6,569.0L1211.6,567.8L1215.2,565.5L1218.8,563.3L1222.2,560.9L1226.0,559.0L1228.3,562.9L1230.7,566.7L1233.3,570.4L1236.0,574.0L1238.0,579.2L1240.3,584.4L1243.0,589.3L1246.0,594.0L1249.2,595.8L1252.1,598.0L1255.4,599.6L1258.4,601.7L1261.6,603.4L1264.9,604.9L1267.9,607.1L1271.0,609.0L1274.0,607.9L1277.2,607.4L1280.4,606.9L1283.6,607.0L1286.8,606.5L1289.9,606.0L1292.9,604.9L1296.0,604.0L1300.8,603.0L1304.9,604.7L1311.1,604.7L1316.1,602.6L1317.5,600.1L1319.6,601.7L1323.4,604.0L1326.9,606.7L1330.2,609.7L1334.2,611.8L1338.3,613.6L1342.0,616.1L1346.0,618.1L1346.2,621.4L1346.9,624.6L1347.8,627.8L1348.4,631.1L1349.9,634.1L1351.2,637.2L1352.5,640.2L1353.8,643.3L1354.4,646.3L1355.7,649.1L1358.0,647.0L1360.7,645.4L1363.2,643.6L1365.4,641.3L1368.8,640.7L1372.1,639.9L1375.5,639.3L1379.0,639.4L1378.1,644.3L1377.1,649.1L1380.8,651.2L1384.8,653.0L1388.0,653.3L1391.1,654.2L1394.2,654.5L1397.4,655.0L1400.5,654.8L1403.7,655.1L1406.9,655.2L1410.1,654.9L1412.8,656.5L1415.2,658.4L1417.6,660.5L1419.8,662.7L1420.3,666.7L1421.7,670.5L1425.2,673.8L1429.5,676.3L1428.8,679.3L1427.5,682.1L1423.4,678.5L1419.8,674.3L1416.7,677.1L1413.9,680.2L1411.6,684.9L1410.1,689.9L1407.1,694.7L1404.2,699.6L1400.1,699.3L1396.0,699.2L1391.8,699.0L1387.7,698.6L1389.5,703.9L1390.6,709.3L1389.4,712.1L1388.8,715.1L1387.5,717.9L1387.4,718.1L1386.0,718.0L1387.0,720.0L1386.8,720.9L1387.4,723.9L1388.7,726.7L1390.5,727.0L1391.0,728.0L1394.1,729.3L1397.2,730.6L1400.5,731.5L1403.7,732.5L1406.7,733.9L1409.8,735.3L1412.0,736.5L1413.3,741.6L1415.9,746.2L1420.1,748.7L1423.6,752.0L1424.5,750.3L1426.0,753.0L1428.3,754.6L1427.5,755.9L1430.1,760.0L1433.3,763.6L1436.9,765.8L1440.3,768.3L1443.7,770.7L1446.9,773.3L1450.9,772.5L1454.8,771.9L1458.6,770.5L1462.5,769.5L1462.6,765.6L1462.5,761.7L1462.8,760.6L1464.0,757.0L1464.6,753.2L1465.7,749.5L1466.2,745.7L1466.3,741.8L1466.0,738.0L1470.5,738.0L1474.8,737.1L1479.1,735.7L1483.4,734.6L1487.8,734.3L1492.2,733.7L1496.6,733.0L1501.0,733.0L1501.6,731.4L1505.2,730.6L1503.4,727.6L1504.5,725.8L1505.3,721.9L1506.0,718.0L1502.2,718.0L1498.4,718.5L1494.6,717.9L1490.8,717.8L1490.7,717.9L1490.7,717.8L1487.9,716.4L1484.9,715.7L1481.9,715.1L1479.9,711.2L1478.0,707.3L1481.5,706.8L1484.8,705.5L1488.3,704.7L1491.6,703.5L1493.3,700.4L1495.3,697.5L1497.6,694.9L1499.3,691.8L1503.1,690.5L1507.1,689.9L1511.5,693.2L1514.9,697.6L1518.2,696.3L1521.4,694.9L1524.9,694.1L1528.5,693.8L1531.0,690.9L1533.6,688.1L1537.0,686.3L1540.1,684.0L1545.0,684.0L1549.9,683.9L1554.7,685.0L1559.5,686.0L1564.5,686.8L1569.5,686.6L1574.4,687.7L1578.9,689.9L1583.9,689.5L1588.6,687.9L1593.5,686.8L1598.4,686.3L1603.1,684.7L1608.0,684.0L1611.0,683.3L1614.0,682.9L1616.8,681.8L1619.5,680.4L1622.5,680.2L1625.5,679.6L1628.5,679.2L1631.3,678.2L1634.3,675.8L1636.9,673.1L1639.9,670.8L1643.0,668.5L1642.6,665.1L1641.8,661.8L1641.5,658.3L1641.0,654.9L1638.4,653.3L1635.7,651.7L1633.6,649.4L1631.3,647.2L1628.2,643.9L1624.5,641.3L1621.1,638.5L1617.7,635.5L1615.4,632.1L1612.5,629.1L1609.3,626.5L1606.1,623.9L1602.1,623.9L1598.2,623.2L1594.4,622.0L1590.5,621.6L1586.5,621.0L1582.6,620.4L1578.9,618.9L1575.0,618.1L1572.7,615.4L1571.2,612.2L1574.5,610.7L1577.9,609.3L1581.2,607.5L1584.7,606.4L1582.9,603.9L1581.2,601.3L1578.9,599.2L1577.0,596.7L1572.6,593.4L1567.7,591.0L1562.7,588.9L1561.3,588.3L1562.6,585.6L1564.8,582.5L1567.0,579.3L1568.8,576.0L1571.7,573.6L1574.6,571.3L1576.7,568.2L1579.3,565.5L1581.1,561.0L1582.4,556.4L1583.4,551.8L1584.5,547.1L1583.3,542.9L1581.0,539.0L1579.1,535.1L1576.7,531.4L1572.9,529.7L1568.9,528.4L1564.9,527.2L1560.9,526.1L1557.9,526.6L1554.9,527.0L1551.9,527.4L1548.9,528.0L1546.0,528.9L1543.2,529.9L1540.3,530.8L1537.3,531.4L1533.4,533.9L1529.9,537.1L1527.2,540.9L1524.2,544.5L1528.2,547.1L1532.1,549.7L1535.2,552.5L1538.5,555.2L1541.8,557.7L1545.2,560.2L1547.3,564.8L1549.6,569.2L1551.3,573.9L1553.0,578.6L1555.3,581.0L1557.4,583.6L1559.2,586.3L1560.2,588.0L1557.6,587.0L1554.7,589.0L1552.4,591.5L1550.1,594.1L1547.9,596.7L1543.9,597.4L1539.8,597.6L1536.1,599.2L1532.3,600.6L1527.7,597.8L1524.0,594.0L1524.2,594.1L1521.7,592.1L1519.4,589.8L1517.0,587.6L1514.8,585.2L1512.3,583.1L1510.3,580.6L1508.1,578.2L1505.8,576.0L1503.0,574.6L1500.3,573.1L1497.8,571.4L1495.1,569.8L1492.3,568.4L1489.9,566.5L1487.5,564.5L1484.9,562.9L1481.6,561.7L1478.4,560.7L1475.2,559.3L1471.8,558.6L1468.5,557.7L1465.1,557.1L1462.0,555.8L1458.6,555.0L1454.9,551.4L1451.6,547.5L1448.3,543.6L1445.5,539.2L1443.6,534.1L1442.9,528.8L1444.9,523.2L1448.1,518.3L1446.6,514.4L1444.9,510.6L1443.6,506.6L1442.9,502.5L1442.9,499.2L1443.3,496.0L1442.8,492.7L1442.9,489.4L1444.6,485.3L1446.8,481.5L1448.3,477.4L1450.8,473.7L1447.4,471.9L1444.1,470.0L1440.9,467.8L1437.6,465.8L1434.2,465.1L1430.9,463.7L1427.6,462.3L1424.5,460.6L1422.6,455.5L1421.9,450.1L1423.9,445.0L1424.5,439.6L1429.1,440.0L1433.7,440.4L1438.3,440.3L1442.9,439.6L1445.6,437.7L1448.2,435.7L1450.7,433.6L1453.4,431.7L1453.5,427.1L1452.9,422.5L1452.7,417.9L1453.4,413.3L1451.1,410.4L1448.2,408.0L1445.5,405.5L1442.9,402.9L1439.1,398.7L1435.4,394.6L1431.3,390.8L1427.1,387.1L1421.6,386.2L1416.2,384.5L1411.2,381.8L1406.2,379.2L1402.2,379.3L1398.2,380.0L1394.3,379.3L1390.3,379.2L1386.4,380.0L1382.4,380.0L1378.6,381.2L1374.7,381.9L1370.3,378.9L1365.5,376.7L1360.9,374.1L1356.3,371.4L1356.1,367.4L1355.9,363.4L1355.2,359.4L1353.7,355.6L1355.5,352.6L1356.8,349.2L1358.8,346.3L1360.4,343.1L1361.3,339.7L1362.3,336.2L1363.1,332.8L1364.2,329.4L1370.2,329.1L1376.1,330.1L1382.0,330.5L1387.8,332.0L1391.1,331.8L1394.4,331.2L1397.7,331.4L1400.9,331.0L1404.2,330.4L1407.4,329.8L1410.7,329.8L1414.0,329.4L1419.3,328.0L1424.7,327.5L1430.0,326.3L1435.0,324.2L1437.2,322.0L1439.5,320.0L1441.5,317.7L1443.3,315.2L1445.8,313.5L1448.5,312.2L1450.8,310.0L1453.4,308.4L1456.3,305.9L1459.1,303.2L1462.5,301.4L1465.7,299.2L1469.2,297.6L1472.9,296.4L1476.1,294.4L1479.6,292.7L1482.9,292.6L1486.2,292.6L1489.5,292.4L1492.8,292.6L1496.1,292.1L1499.4,291.8L1502.6,290.8L1505.8,290.1L1509.1,290.5L1512.3,291.0L1515.6,291.4L1518.9,291.6L1522.2,291.9L1525.5,292.0L1528.8,291.7L1532.1,291.4L1535.3,290.8L1538.6,290.3L1541.9,290.5L1545.2,290.1L1548.3,291.8L1551.6,293.0L1555.0,294.0L1558.3,295.3L1561.7,294.4L1565.1,293.2L1568.2,291.5L1571.4,290.1L1574.7,288.7L1577.8,286.9L1581.3,286.3L1584.5,284.8L1588.6,283.1L1592.3,280.6L1596.1,278.4L1600.3,277.0L1596.5,274.0L1592.4,271.7L1588.6,268.9L1584.5,266.5L1586.7,262.2L1589.8,258.6L1594.0,257.5L1598.3,256.9L1602.4,255.4L1606.5,253.8L1610.8,253.3L1615.2,252.7L1619.5,253.2L1623.9,253.3L1626.8,251.8L1629.6,250.0L1632.0,247.7L1634.4,245.5L1638.3,244.9L1642.2,244.7L1646.2,244.4L1650.1,244.2L1654.7,244.1L1659.3,244.8L1663.9,245.2L1668.5,245.5L1672.8,247.5L1676.5,250.5L1680.0,253.7L1684.2,256.0L1685.5,261.2L1686.8,266.5L1684.2,270.4L1681.6,274.3L1678.3,274.8L1675.0,275.7L1671.8,276.4L1668.5,277.0L1666.2,279.9L1663.2,282.2L1664.1,286.7L1664.2,291.4L1663.4,295.9L1663.2,300.6L1665.9,303.8L1668.1,307.4L1670.8,310.6L1673.7,313.7L1679.3,313.6L1684.9,313.6L1690.4,313.2L1696.0,313.7L1696.0,314.0L1699.8,314.2L1703.6,314.7L1707.5,314.5L1711.3,314.6L1714.9,316.1L1718.4,317.5L1722.2,318.5L1726.0,319.0L1728.4,321.6L1730.8,324.3L1733.1,326.9L1735.0,330.0L1737.9,332.0L1740.5,334.5L1743.4,336.6L1746.0,339.0L1747.8,343.5L1750.2,347.6L1752.8,351.6L1755.0,355.9L1755.7,360.6L1757.1,365.2L1759.3,369.5L1761.0,374.0L1762.6,377.9L1764.9,381.4L1766.4,385.4L1767.9,389.3L1769.6,393.2L1771.2,397.1L1773.6,400.6L1776.0,404.0L1781.1,406.3L1785.7,409.5L1791.1,411.3L1796.0,414.0L1800.7,411.7L1805.7,410.2L1810.8,409.5L1816.0,409.0L1819.3,410.6L1822.3,412.8L1825.7,414.0L1829.0,415.7L1832.2,417.4L1835.3,419.4L1838.2,421.6L1841.0,424.0L1842.7,427.8L1844.8,431.5L1846.9,435.1L1848.8,438.9L1851.3,442.3L1853.1,446.1L1854.8,450.0L1856.0,454.0L1858.3,457.5L1860.9,460.9L1863.4,464.3L1865.3,468.1L1866.9,472.0L1868.6,475.9L1869.5,480.0L1871.0,484.0L1872.9,487.8L1875.3,491.2L1877.3,495.0L1878.6,499.0L1880.5,502.7L1882.5,506.4L1884.4,510.1L1886.0,514.0L1890.9,515.4L1895.7,517.2L1900.6,518.4L1905.7,519.2L1910.7,519.5L1915.8,519.2L1920.9,518.9L1926.0,519.0L1928.2,516.0L1929.9,512.8L1931.5,509.5L1933.0,506.2L1934.6,502.9L1936.5,499.8L1938.5,496.7L1941.0,494.0L1941.0,489.6L1941.2,485.1L1941.6,480.7L1941.9,476.3L1943.6,472.1L1944.5,467.8L1945.6,463.4L1946.0,459.0L1946.8,454.0L1946.7,449.0L1946.2,444.0L1945.6,439.0L1946.4,434.0L1946.3,429.0L1945.8,424.0L1946.0,419.0L1943.9,414.1L1942.4,409.3L1941.4,404.3L1941.8,399.2L1941.0,394.1L1941.0,388.2L1939.7,382.5L1939.5,376.6L1938.1,370.9L1937.1,365.9L1937.2,360.7L1935.8,355.7L1935.2,350.6L1934.6,346.3L1934.0,341.9L1933.0,337.6L1932.3,333.2L1928.9,330.0L1925.2,327.3L1921.6,324.3L1917.8,321.6L1917.7,318.3L1917.1,315.1L1917.6,311.9L1917.8,308.6L1917.4,305.3L1917.3,302.1L1917.3,298.8L1917.8,295.5L1920.2,292.0L1922.0,288.2L1924.4,284.7L1926.5,281.0L1925.5,278.2L1924.4,275.4L1923.7,272.5L1923.6,269.4L1920.8,265.8L1918.4,261.7L1915.3,258.3L1912.0,254.9L1910.6,250.0L1909.5,245.0L1909.5,239.8L1909.1,234.6L1906.1,229.8L1902.9,225.1L1900.7,219.8L1899.0,214.4L1900.2,209.3L1900.7,204.1L1902.4,199.2L1903.3,194.1L1906.0,192.3L1908.4,190.4L1911.0,188.6L1913.1,186.2L1915.6,184.4L1918.4,182.9L1921.0,181.2L1923.6,179.6L1928.0,179.7L1932.3,179.3L1936.7,179.5L1941.0,179.6L1944.9,175.9L1947.8,171.5L1950.0,166.7L1952.6,162.2L1951.6,159.0L1951.1,155.7L1950.5,152.5L1949.8,149.3L1949.4,146.0L1949.4,142.7L1949.6,139.4L1949.7,136.1L1945.3,133.1L1941.7,129.2L1936.9,127.0L1932.3,124.5L1928.0,120.8L1923.9,116.9L1919.3,113.5L1914.9,110.0L1912.2,108.0L1909.6,105.8L1907.3,103.3L1905.1,100.8L1902.8,98.3L1900.8,95.6L1899.2,92.6L1897.5,89.7L1892.6,86.8L1888.0,83.4L1884.2,79.2L1880.1,75.2L1877.2,74.1L1874.4,72.6L1871.7,71.2L1869.1,69.5L1866.0,69.0L1863.0,68.0L1859.9,67.4L1856.9,66.5L1853.1,66.5L1849.3,65.7L1845.6,64.7L1841.9,64.0L1838.6,62.0L1835.3,60.1L1831.6,59.0L1828.0,57.8L1824.3,56.4L1820.8,54.8L1816.9,54.5L1813.2,53.5L1809.7,51.8L1806.0,50.7L1802.6,48.9L1799.0,47.6L1795.2,47.1L1791.6,46.2L1788.0,45.2L1784.6,43.5L1780.9,42.7L1777.3,42.1L1773.7,41.0L1770.0,40.4L1766.3,40.2L1762.6,40.4L1759.0,40.2L1755.3,40.6L1751.8,39.4L1748.2,38.6L1744.7,37.7L1741.0,37.5L1736.5,35.5L1731.8,34.0L1727.6,31.5L1723.6,28.8L1721.1,24.9L1718.6,20.8L1715.5,17.4L1712.0,14.3L1710.2,10.8L1708.8,7.1L1707.0,3.6L1704.7,0.4L1705.0,0.0L1414.4,0.0L1412.8,0.1L1408.7,0.4L1404.6,0.2L1400.4,0.3L1398.1,0.0L1381.1,0.0L1379.8,0.2L1375.7,0.5L1371.6,0.7L1367.4,0.5L1363.3,0.1L1362.6,0.0L1343.9,0.0L1342.7,0.1L1341.2,0.0L1335.0,0.0L1334.5,0.0L1334.3,0.0L1322.9,0.0L1322.2,0.1L1318.0,0.3L1313.9,0.4L1309.8,0.1L1305.6,0.3L1301.5,0.5L1297.4,0.7L1293.2,0.8L1289.2,1.7L1285.1,2.3L1281.0,3.0L1276.9,3.8L1272.8,3.8L1268.6,4.0L1264.5,4.4L1260.4,5.0L1256.3,5.0L1252.1,5.0L1248.0,5.2L1243.9,5.7L1239.8,5.2L1235.7,4.2L1231.6,4.2L1227.5,3.7L1223.3,3.3L1219.2,2.8L1215.1,2.9L1211.0,2.7L1206.8,2.2L1202.7,2.1L1198.6,1.9L1194.5,1.3L1190.4,1.1L1186.2,0.8L1182.1,0.2L1178.0,0.0L1178.4,4.4L1179.2,8.8L1180.5,13.1L1182.6,17.0L1182.2,20.5L1181.3,24.0L1180.7,27.5ZM246.0,779.0L245.0,772.0L234.0,773.0L235.0,780.0L246.0,779.0ZM536.0,933.0L541.0,928.0L543.5,910.5L533.5,915.5L531.0,923.0L536.0,933.0ZM611.8,1129.2L611.0,1133.0L614.0,1137.8L616.0,1143.0L618.4,1139.5L620.0,1135.6L622.1,1132.0L623.5,1128.0L625.6,1123.6L628.4,1119.7L630.2,1115.3L631.0,1110.5L627.2,1108.7L623.2,1107.4L619.8,1104.9L616.0,1103.0L615.0,1106.7L614.6,1110.5L614.0,1114.3L613.9,1118.1L613.3,1121.8L613.2,1125.7L611.8,1129.2ZM643.9,1151.0L643.3,1154.5L643.5,1158.0L647.3,1161.0L651.0,1164.3L654.4,1167.8L658.5,1170.5L659.5,1167.1L660.3,1163.7L661.3,1160.3L662.3,1157.0L662.8,1153.5L662.8,1150.0L663.3,1146.5L663.5,1143.0L660.3,1139.3L656.5,1136.1L652.4,1133.4L648.5,1130.5L647.7,1133.9L646.8,1137.3L645.7,1140.6L644.8,1144.0L644.6,1147.6L643.9,1151.0ZM723.5,1170.5L716.0,1168.0L717.0,1177.0L723.5,1178.0L723.5,1170.5ZM1191.4,65.9L1192.6,65.9L1193.6,65.1L1194.0,63.8L1193.6,62.4L1192.6,61.6L1191.4,61.6L1190.4,62.4L1190.0,63.8L1190.4,65.1L1191.4,65.9ZM1487.9,409.3L1492.9,412.6L1499.1,412.6L1504.1,409.3L1506.0,404.0L1504.1,398.7L1499.1,395.4L1492.9,395.4L1487.9,398.7L1486.0,404.0L1487.9,409.3ZM1536.3,415.9L1539.3,415.9L1541.7,414.9L1542.6,413.4L1541.7,411.8L1539.3,410.8L1536.3,410.8L1533.9,411.8L1533.0,413.4L1533.9,414.9L1536.3,415.9ZM1545.9,500.6L1549.6,499.4L1552.7,497.1L1555.7,494.7L1558.9,489.7L1560.9,484.2L1558.7,482.1L1556.5,479.9L1554.8,477.5L1553.0,475.0L1549.4,475.8L1546.1,477.4L1543.1,479.6L1539.9,481.5L1538.6,484.9L1538.0,488.4L1536.0,491.3L1534.7,494.7L1538.7,498.5L1542.6,502.5L1545.9,500.6ZM1278.5,619.7L1281.5,619.7L1284.0,617.3L1285.0,613.5L1284.0,609.7L1281.5,607.3L1278.5,607.3L1276.0,609.7L1275.0,613.5L1276.0,617.3L1278.5,619.7ZM1307.3,629.8L1312.3,629.8L1316.4,627.9L1318.0,625.0L1316.4,622.1L1312.3,620.2L1307.3,620.2L1303.2,622.1L1301.6,625.0L1303.2,627.9L1307.3,629.8ZM1334.7,668.9L1339.2,670.8L1344.8,670.8L1349.3,668.9L1351.0,666.0L1349.3,663.1L1344.8,661.2L1339.2,661.2L1334.7,663.1L1333.0,666.0L1334.7,668.9ZM1528.5,748.5L1532.3,747.9L1536.2,748.1L1539.6,747.2L1543.2,746.7L1546.6,745.8L1549.8,744.2L1551.6,740.3L1552.6,738.4L1553.5,738.0L1553.1,737.6L1553.7,736.5L1550.1,732.3L1545.9,728.7L1544.4,730.5L1541.5,730.6L1537.1,731.1L1532.7,730.6L1528.3,729.6L1524.0,730.2L1519.5,730.5L1515.3,731.9L1511.0,733.0L1512.4,735.6L1509.0,736.5L1510.1,739.3L1511.0,742.3L1515.5,745.7L1520.7,748.1L1524.6,748.2L1528.5,748.5ZM1530.8,773.8L1533.2,773.8L1535.2,772.1L1536.0,769.5L1535.2,766.9L1533.2,765.2L1530.8,765.2L1528.8,766.9L1528.0,769.5L1528.8,772.1L1530.8,773.8ZM1413.5,796.9L1415.9,799.5L1417.8,802.4L1421.2,803.6L1424.6,804.4L1428.1,805.0L1431.4,806.3L1437.3,805.9L1443.0,804.4L1444.4,800.7L1444.8,796.7L1445.2,792.8L1445.0,788.9L1440.7,786.2L1436.9,782.9L1432.4,780.5L1427.5,779.2L1423.0,778.8L1418.6,778.0L1414.3,776.9L1410.1,775.3L1406.1,776.0L1402.3,777.2L1404.7,780.3L1406.4,783.9L1408.3,787.3L1410.1,790.8L1411.6,794.0L1413.5,796.9ZM1448.9,822.8L1451.8,819.9L1445.0,810.2L1439.2,812.2L1441.1,818.0L1448.9,822.8ZM1305.7,1342.3L1306.0,1345.5L1310.0,1346.3L1313.9,1347.6L1318.1,1347.5L1322.1,1348.2L1326.2,1348.0L1330.3,1348.3L1334.4,1347.9L1338.5,1348.0L1337.4,1343.6L1337.1,1339.1L1336.9,1334.5L1337.0,1330.0L1335.5,1325.8L1334.4,1321.4L1332.9,1317.1L1331.0,1313.0L1327.4,1314.6L1323.6,1315.6L1320.1,1317.2L1316.5,1318.6L1312.6,1318.9L1308.6,1318.9L1304.8,1319.6L1301.0,1320.5L1302.5,1323.4L1303.5,1326.4L1304.2,1329.6L1304.8,1332.7L1305.3,1335.9L1305.2,1339.1L1305.7,1342.3ZM1332.5,1439.0L1331.2,1436.1L1329.5,1433.4L1328.1,1430.5L1327.6,1427.4L1327.4,1424.2L1326.8,1421.1L1326.0,1418.0L1323.5,1414.0L1321.7,1409.6L1318.9,1405.7L1316.0,1402.0L1313.2,1403.7L1310.4,1405.2L1307.7,1407.0L1305.2,1409.0L1303.1,1411.4L1300.9,1413.8L1298.3,1415.7L1296.0,1418.0L1294.9,1421.1L1293.8,1424.2L1293.2,1427.4L1292.7,1430.7L1291.5,1433.8L1289.8,1436.6L1288.0,1439.4L1286.8,1441.0L1333.2,1441.0L1332.5,1439.0ZM1943.3,33.8L1943.9,37.5L1939.6,37.7L1935.2,38.0L1930.9,37.2L1926.5,37.5L1924.9,41.8L1923.6,46.2L1926.9,45.9L1930.2,46.2L1933.5,46.6L1936.7,47.0L1940.0,47.8L1943.2,48.2L1946.5,48.5L1949.7,49.1L1954.1,48.7L1958.4,48.5L1962.8,48.4L1967.1,49.1L1967.8,52.7L1968.9,56.3L1969.7,59.9L1970.0,63.6L1968.3,68.2L1966.8,72.9L1964.4,77.1L1961.3,81.0L1963.1,85.2L1964.1,89.7L1965.5,94.1L1967.1,98.4L1969.0,93.9L1971.6,89.7L1973.7,85.4L1975.8,81.0L1980.1,80.1L1984.6,79.7L1988.9,79.1L1993.2,78.1L1991.1,81.0L1988.8,83.8L1986.5,86.7L1984.5,89.7L1983.3,93.1L1982.2,96.5L1981.1,99.9L1980.1,103.4L1978.3,106.4L1976.2,109.4L1974.7,112.7L1972.9,115.8L1974.3,118.7L1975.8,121.6L1977.2,124.5L1978.7,127.4L1981.6,125.1L1984.8,123.3L1987.7,121.2L1990.3,118.7L1994.0,118.5L1997.6,117.6L2001.1,116.3L2003.0,116.0L2003.0,0.5L2000.7,0.8L1996.5,1.2L1992.3,1.3L1988.1,1.4L1984.0,1.2L1979.8,0.7L1975.6,0.9L1971.5,0.6L1967.3,0.5L1963.1,0.0L1962.8,0.0L1948.0,0.0L1946.5,0.3L1942.3,0.0L1938.1,0.4L1939.1,6.1L1938.7,11.8L1939.7,17.4L1941.0,23.0L1942.1,26.5L1943.0,30.1L1943.3,33.8ZM1619.8,301.0L1624.6,301.7L1629.1,303.2L1626.1,306.1L1623.6,309.6L1621.3,313.0L1618.6,316.3L1615.3,316.7L1612.1,317.7L1608.9,318.7L1605.6,319.6L1602.3,320.2L1599.1,321.1L1595.7,321.2L1592.4,321.5L1587.2,323.1L1581.9,324.2L1581.3,328.1L1581.2,332.1L1579.8,335.9L1579.3,339.9L1581.9,343.2L1584.7,346.4L1587.6,349.4L1589.8,353.0L1593.3,355.3L1596.3,358.3L1599.6,360.9L1602.9,363.5L1605.3,361.6L1607.8,359.7L1610.4,357.9L1612.7,355.8L1615.3,354.2L1618.2,352.9L1621.1,351.8L1623.9,350.4L1627.1,347.0L1630.4,343.8L1634.0,340.8L1637.0,337.3L1639.1,334.8L1641.2,332.3L1643.0,329.5L1644.9,326.8L1646.0,323.4L1647.8,320.4L1648.8,317.0L1650.1,313.7L1646.4,312.4L1643.0,310.6L1640.2,308.0L1637.0,305.8L1642.2,303.1L1647.5,300.6L1649.0,296.0L1650.7,291.6L1651.5,286.8L1652.7,282.2L1648.6,280.6L1644.6,278.8L1640.6,276.8L1637.0,274.3L1632.4,275.1L1627.8,275.4L1623.2,276.3L1618.6,277.0L1617.0,280.4L1614.8,283.6L1613.0,287.0L1610.8,290.1L1605.6,289.1L1600.3,289.2L1595.1,290.1L1589.8,290.1L1589.8,295.3L1594.9,296.8L1600.2,297.4L1605.4,298.1L1610.8,297.9L1615.4,299.0L1619.8,301.0ZM1553.1,404.0L1554.2,404.4L1555.5,404.4L1556.6,404.0L1557.0,403.2L1556.6,402.5L1555.5,402.1L1554.2,402.1L1553.1,402.5L1552.7,403.2L1553.1,404.0ZM1610.5,405.9L1614.5,405.9L1617.8,405.0L1619.0,403.5L1617.8,402.0L1614.5,401.1L1610.5,401.1L1607.2,402.0L1606.0,403.5L1607.2,405.0L1610.5,405.9ZM1567.0,407.9L1568.3,407.9L1569.3,407.4L1569.7,406.5L1569.3,405.6L1568.3,405.1L1567.0,405.1L1566.0,405.6L1565.6,406.5L1566.0,407.4L1567.0,407.9ZM1600.3,460.6L1603.6,464.5L1606.2,468.9L1610.1,472.3L1613.4,476.3L1612.5,480.2L1611.3,484.0L1610.9,488.0L1610.8,492.0L1613.7,494.3L1616.5,496.8L1619.1,499.4L1621.2,502.5L1625.3,501.5L1629.2,500.3L1633.1,498.8L1637.0,497.3L1640.4,492.8L1644.9,489.4L1646.7,486.4L1648.0,483.1L1648.9,479.6L1650.1,476.3L1652.2,473.1L1653.8,469.6L1655.5,466.2L1658.0,463.2L1659.3,459.9L1660.7,456.7L1661.7,453.3L1663.2,450.1L1665.0,446.6L1666.4,443.1L1667.5,439.4L1668.5,435.6L1662.6,436.7L1656.7,436.9L1650.7,436.8L1644.8,437.1L1638.8,437.1L1632.9,436.7L1627.1,435.2L1621.2,434.3L1616.9,434.1L1612.6,434.6L1608.2,435.0L1603.9,435.0L1599.7,436.2L1595.7,437.9L1591.5,438.9L1587.1,439.6L1590.1,444.7L1592.4,450.1L1594.0,453.0L1595.9,455.6L1598.0,458.2L1600.3,460.6ZM1975.5,475.1L1973.5,479.0L1972.3,483.4L1971.7,487.8L1969.7,491.9L1968.5,496.2L1967.1,500.5L1966.6,505.0L1966.5,509.5L1966.0,514.0L1968.6,519.0L1971.0,524.0L1973.1,520.3L1975.5,516.9L1977.7,513.3L1980.0,509.7L1981.7,505.9L1982.8,501.8L1984.1,497.8L1986.0,494.0L1987.0,489.5L1987.8,485.0L1989.8,480.9L1991.6,476.7L1993.1,472.3L1993.7,467.8L1995.3,463.5L1996.0,459.0L1993.5,455.9L1991.0,452.7L1988.8,449.4L1986.0,446.5L1984.3,450.5L1983.3,454.8L1981.6,458.8L1979.6,462.7L1978.6,467.0L1977.2,471.1L1975.5,475.1ZM1616.0,617.5L1621.0,619.2L1625.5,621.9L1628.9,620.9L1632.4,620.5L1635.8,619.4L1639.1,618.1L1642.4,613.5L1644.9,608.3L1640.3,605.8L1635.2,604.5L1632.3,602.5L1629.6,600.2L1626.4,598.8L1623.6,596.7L1623.8,593.3L1623.6,589.9L1623.2,586.5L1623.6,583.1L1619.7,583.1L1618.3,587.9L1617.7,592.8L1615.6,595.1L1613.2,597.1L1610.5,598.7L1608.0,600.6L1603.5,601.4L1598.9,602.4L1594.8,604.5L1590.6,606.4L1594.6,608.0L1598.5,610.0L1602.2,612.2L1606.1,614.2L1611.1,615.6L1616.0,617.5ZM1868.5,654.0L1876.0,651.5L1866.0,636.5L1853.5,631.5L1858.5,644.0L1868.5,654.0ZM1561.2,730.8L1565.8,730.8L1569.6,729.4L1571.0,727.0L1569.6,724.6L1565.8,723.2L1561.2,723.2L1557.4,724.6L1556.0,727.0L1557.4,729.4L1561.2,730.8ZM1577.9,764.4L1581.4,763.3L1584.7,761.7L1587.6,760.6L1590.5,759.6L1593.3,758.3L1596.2,757.3L1599.2,756.5L1602.3,756.2L1605.1,755.0L1608.0,753.9L1614.0,753.9L1619.9,753.6L1625.8,752.3L1631.3,750.0L1631.6,745.1L1633.3,740.3L1637.3,738.8L1641.0,736.4L1644.7,734.0L1648.8,732.6L1653.0,730.2L1657.5,728.7L1662.0,726.9L1666.3,724.8L1671.1,721.8L1676.0,719.0L1673.0,718.0L1670.4,716.3L1667.4,715.5L1664.3,715.1L1659.0,716.3L1653.6,716.6L1648.2,716.4L1643.0,715.1L1639.2,716.8L1635.1,717.8L1631.3,719.4L1627.4,720.9L1622.2,723.1L1617.0,725.4L1611.6,727.4L1606.1,728.7L1603.1,731.3L1600.0,733.7L1596.7,735.9L1593.2,737.6L1589.5,739.1L1586.1,741.1L1582.5,742.5L1578.9,744.2L1575.6,746.0L1572.6,748.5L1569.9,751.1L1567.4,754.0L1564.4,756.5L1561.8,759.2L1558.9,761.7L1555.6,763.6L1559.6,764.4L1563.6,764.7L1567.4,765.9L1571.2,767.5L1574.5,766.0L1577.9,764.4ZM1611.0,1030.5L1601.0,1020.5L1603.5,1033.0L1610.0,1038.0L1611.0,1030.5ZM1848.5,1084.0L1838.5,1083.0L1841.0,1087.0L1851.0,1088.0L1848.5,1084.0Z"/></clipPath></defs><path d="M91.5,19.8L92.8,23.1L93.5,26.5L98.8,29.2L103.5,33.0L107.0,32.0L110.4,30.9L113.9,29.7L117.1,28.2L120.6,26.9L123.9,25.4L126.9,23.5L130.0,21.5L127.2,19.5L124.2,17.8L121.5,15.7L118.5,14.0L119.1,10.5L119.0,7.0L118.9,3.5L118.5,0.0L114.4,0.2L110.4,0.0L106.3,0.7L102.2,0.9L98.2,0.7L94.1,0.2L90.1,0.5L86.0,0.0L86.7,3.4L87.3,6.8L88.1,10.2L88.5,13.6L90.1,16.7L91.5,19.8ZM856.6,15.0L862.5,15.3L868.2,16.5L874.0,15.2L879.9,15.0L882.0,18.6L884.5,22.0L890.1,23.6L896.0,24.0L898.8,28.7L902.5,32.7L906.3,36.6L910.0,40.6L911.4,37.5L913.3,34.7L915.0,31.7L917.0,29.0L921.9,26.1L927.2,24.2L931.3,20.3L936.0,17.0L941.5,15.8L947.0,15.0L950.4,16.7L953.6,18.7L956.5,21.2L959.0,24.0L963.8,26.0L968.0,29.0L971.5,25.0L975.0,21.0L978.0,21.8L981.0,22.6L983.9,23.5L987.0,24.0L990.5,24.1L994.0,23.6L997.5,22.9L1001.0,23.0L1003.8,25.6L1006.0,28.7L1008.1,31.7L1010.0,35.0L1015.0,32.4L1019.6,29.0L1023.5,25.9L1026.6,22.0L1026.8,16.5L1027.8,11.0L1028.2,5.5L1029.0,0.0L992.2,0.0L988.2,0.8L982.4,1.4L976.6,0.4L975.3,0.0L905.6,0.0L900.8,0.5L895.0,1.5L889.3,2.7L883.4,3.2L877.6,2.8L871.7,2.3L865.9,1.5L860.1,1.8L854.2,1.7L848.4,0.7L842.6,0.0L844.2,2.6L846.3,4.8L848.2,7.3L849.6,10.0L852.9,12.7L856.6,15.0ZM415.9,21.2L413.3,24.5L410.0,27.1L413.6,30.3L416.4,34.1L420.0,37.0L423.3,40.4L428.4,37.3L433.2,33.7L432.7,29.6L431.5,25.6L431.5,21.4L431.6,17.2L431.6,13.0L431.6,8.8L430.8,4.7L429.9,0.6L424.1,0.0L423.8,0.0L415.7,0.0L412.6,0.4L406.7,0.6L410.0,4.0L414.0,6.6L417.4,9.9L420.0,13.9L418.3,17.7L415.9,21.2ZM323.3,20.5L327.2,22.2L330.1,25.2L332.9,28.3L335.3,31.7L337.2,35.4L341.4,36.8L345.5,38.6L349.8,39.8L353.7,42.0L359.5,42.8L365.4,42.3L371.1,43.6L376.9,43.7L380.2,44.0L383.6,43.7L386.8,43.1L390.2,43.0L386.4,40.3L383.4,36.9L380.5,33.3L376.9,30.4L381.5,28.9L385.8,26.5L389.4,23.1L393.5,20.5L396.9,19.1L400.5,17.9L403.4,15.6L406.7,13.9L405.7,10.6L405.4,7.2L404.6,3.8L403.4,0.6L397.8,1.1L392.2,1.4L386.6,0.8L381.0,0.2L375.4,1.0L369.8,1.3L364.3,1.8L358.7,2.6L353.2,3.7L347.5,4.2L341.9,3.9L336.2,3.9L330.7,2.9L325.0,2.9L319.6,1.5L314.0,0.6L313.6,3.9L313.2,7.3L312.7,10.5L312.3,13.9L315.6,16.6L319.3,18.9L323.3,20.5ZM521.3,21.0L522.0,24.0L522.0,29.9L522.4,35.8L524.2,41.4L526.0,47.0L529.5,49.2L532.6,52.0L535.9,48.2L539.1,44.3L542.3,40.5L546.0,37.0L549.2,34.4L552.1,31.5L555.6,29.3L559.0,27.0L561.7,25.8L564.4,24.3L567.2,23.2L570.1,22.4L573.1,21.8L576.0,20.8L579.0,20.7L582.0,20.5L584.7,18.8L587.3,16.9L590.4,15.8L593.4,14.6L596.5,13.8L599.6,12.9L602.6,11.9L605.5,10.5L609.4,10.3L613.1,9.5L617.0,9.5L620.8,9.6L624.6,9.0L628.5,8.6L632.2,7.6L636.0,7.0L638.9,8.1L641.9,8.9L644.6,10.4L647.5,11.6L650.1,13.2L652.9,14.5L655.7,15.8L658.6,17.0L660.9,19.0L663.5,20.7L665.7,22.9L668.0,25.0L670.5,26.8L673.0,28.6L675.7,30.2L678.5,31.5L680.4,27.7L681.8,23.7L683.8,19.9L685.8,16.2L687.2,12.1L688.2,8.0L689.6,4.0L691.0,0.0L685.7,0.8L680.3,1.2L674.9,1.7L669.6,3.0L664.2,2.9L658.8,3.0L653.4,2.3L648.0,1.8L642.6,1.3L637.3,0.4L631.9,0.3L626.5,0.9L621.1,0.9L615.7,0.5L610.4,0.3L607.4,0.0L567.8,0.0L567.4,0.1L562.0,0.8L556.6,0.9L551.2,0.2L545.9,0.7L540.5,1.2L535.1,1.4L529.7,0.8L524.4,0.5L519.0,0.0L519.5,3.0L519.6,6.1L519.6,9.2L519.0,12.2L519.9,15.1L521.1,17.9L521.3,21.0ZM1100.3,26.3L1102.7,30.2L1105.8,33.6L1101.1,35.8L1096.5,38.3L1097.7,41.2L1099.0,44.0L1100.1,47.0L1101.1,49.9L1104.9,54.4L1108.1,59.2L1109.7,62.8L1110.8,66.6L1112.6,70.1L1115.1,73.2L1118.5,74.2L1122.1,74.5L1125.6,74.1L1129.1,74.4L1131.4,69.1L1133.8,63.9L1135.9,59.9L1138.4,56.2L1139.2,51.8L1140.7,47.6L1138.4,45.2L1136.4,42.6L1133.9,40.4L1131.4,38.3L1132.6,34.7L1133.1,31.0L1134.4,27.6L1136.1,24.3L1140.4,20.3L1145.4,17.3L1150.1,17.4L1154.7,17.8L1159.4,17.6L1164.0,17.3L1162.9,11.5L1161.7,5.6L1159.4,0.5L1154.7,0.5L1152.2,0.0L1091.0,0.0L1090.6,0.1L1086.0,0.5L1088.3,5.2L1090.4,9.9L1092.2,14.8L1094.2,19.6L1097.4,22.9L1100.3,26.3ZM316.0,53.0L323.5,41.5L321.0,28.0L310.0,29.0L310.0,49.0L316.0,53.0ZM1145.8,54.8L1150.2,54.8L1153.7,53.6L1155.0,51.5L1153.7,49.4L1150.2,48.2L1145.8,48.2L1142.3,49.4L1141.0,51.5L1142.3,53.6L1145.8,54.8ZM3.5,178.0L7.2,177.1L11.0,176.5L14.7,172.7L19.0,169.5L22.9,165.9L26.0,161.5L30.4,161.7L34.8,162.1L39.1,161.6L43.5,161.5L46.6,164.1L50.0,166.4L53.5,168.5L56.9,170.8L60.7,172.4L64.0,174.8L67.5,176.9L71.0,179.0L75.0,183.2L78.2,188.0L82.2,192.2L86.0,196.5L89.1,196.8L92.2,197.2L95.4,197.3L98.5,197.4L101.6,198.3L104.7,198.7L107.8,198.9L111.0,199.0L116.3,201.3L122.0,202.7L127.8,203.0L133.5,204.0L137.1,201.2L141.0,199.0L142.4,195.0L143.7,190.9L144.8,186.8L146.3,182.8L147.3,178.7L148.9,174.7L149.8,170.6L151.0,166.5L149.2,163.6L146.9,161.1L145.3,158.1L143.8,155.1L142.0,152.2L139.8,149.6L137.7,146.9L136.0,144.0L134.1,139.9L131.7,136.0L129.3,132.1L127.6,127.9L124.7,124.4L122.4,120.4L119.3,117.1L116.0,114.0L113.3,110.0L110.7,106.0L108.6,101.7L106.8,97.2L104.2,93.2L101.0,89.7L98.8,85.4L96.0,81.5L95.2,77.0L93.6,72.7L92.4,68.3L91.0,64.0L88.6,62.0L86.1,60.2L83.4,58.5L81.0,56.5L77.6,51.7L75.0,46.5L74.1,49.7L73.8,53.0L72.7,56.2L71.0,59.0L67.3,59.4L63.5,59.5L59.8,59.2L56.0,59.0L52.4,54.4L47.9,50.8L44.4,46.2L41.0,41.5L39.9,38.5L39.5,35.3L39.4,32.1L38.5,29.0L41.2,25.5L44.5,22.5L47.7,19.5L51.0,16.5L52.0,12.4L52.0,8.2L51.3,4.2L51.0,0.0L47.6,0.5L44.1,0.8L40.6,0.9L37.1,0.7L33.7,0.2L31.2,0.0L10.4,0.0L9.8,0.1L7.6,0.0L2.0,0.0L0.0,0.1L0.0,178.5L3.5,178.0ZM56.0,308.7L53.3,310.0L50.7,313.6L48.1,317.1L45.3,320.6L42.1,323.7L41.2,326.9L40.4,330.2L38.6,332.9L37.2,336.0L37.4,339.8L37.6,343.5L37.8,347.3L38.4,351.0L39.5,355.3L40.7,359.5L41.0,364.0L40.9,368.4L42.4,371.4L43.9,374.5L46.1,377.1L48.4,379.6L50.5,381.9L53.1,383.7L55.6,385.4L58.3,387.0L62.1,389.4L65.8,392.0L65.5,395.1L65.6,398.2L64.9,401.3L64.5,404.4L68.8,407.5L73.2,410.6L73.8,415.6L74.4,420.6L76.8,423.5L78.7,426.8L80.5,430.1L83.0,433.0L85.4,435.0L87.8,437.0L90.3,438.9L93.0,440.5L97.2,442.0L101.2,444.0L105.4,445.6L109.2,448.0L111.5,450.8L113.0,454.0L116.0,457.8L119.3,461.4L121.9,465.4L123.9,469.8L126.4,474.0L129.1,478.0L131.7,482.0L133.5,486.5L136.4,488.8L139.6,490.6L142.7,492.5L146.0,494.0L150.2,491.1L154.4,488.3L158.8,486.0L163.5,484.0L160.7,481.8L158.1,479.4L156.0,476.6L153.5,474.0L154.7,469.1L155.2,464.1L156.2,459.1L156.0,454.0L158.0,451.3L159.8,448.5L161.9,445.9L164.0,443.3L165.9,440.6L168.3,438.2L170.9,436.1L173.5,434.0L179.2,434.3L184.8,435.4L190.3,434.2L196.0,434.0L200.4,436.6L204.5,439.5L208.3,442.8L212.6,445.5L217.5,447.0L222.0,449.3L226.6,451.4L231.0,454.0L234.9,456.7L239.0,459.0L239.3,454.0L240.4,449.0L239.5,444.1L239.7,439.0L235.9,437.8L232.1,436.3L228.6,434.3L224.8,433.0L221.1,429.4L218.2,425.2L214.7,421.4L212.0,417.0L209.1,415.6L206.3,413.9L203.5,412.2L200.7,410.7L197.9,409.0L194.8,407.8L191.7,407.0L188.7,405.7L189.0,401.8L190.0,398.0L190.6,394.6L190.7,391.2L191.3,387.8L192.5,384.6L189.2,382.8L186.0,380.6L182.8,378.5L180.0,375.9L176.6,374.6L173.5,372.7L170.3,370.9L167.6,368.4L162.6,366.2L158.0,363.2L153.0,361.1L147.7,359.7L142.9,358.4L138.1,357.5L133.5,355.5L129.0,353.5L125.6,352.7L122.2,352.2L118.8,351.6L115.4,351.0L112.1,349.4L109.3,347.2L106.1,345.4L103.0,343.6L102.3,340.1L101.6,336.7L100.1,333.4L99.3,330.0L95.8,325.8L93.0,321.0L91.3,318.2L90.0,315.2L89.2,312.0L88.0,309.0L88.0,303.9L86.9,299.0L84.5,294.5L81.9,290.0L77.2,293.2L71.9,295.0L67.4,299.0L62.9,302.9L60.6,304.8L58.5,306.9L56.0,308.7ZM1180.7,27.5L1180.0,31.0L1181.7,34.5L1183.7,37.9L1185.4,41.4L1187.0,45.0L1191.7,48.6L1196.7,51.7L1201.2,55.5L1206.0,59.0L1210.0,62.0L1214.2,64.8L1218.4,67.5L1222.0,71.0L1224.7,72.7L1227.7,73.8L1230.7,74.8L1233.5,76.4L1236.5,77.4L1239.6,77.8L1242.6,78.9L1245.6,80.0L1242.1,84.7L1238.6,89.5L1235.8,91.5L1233.3,93.7L1231.1,96.3L1229.0,99.0L1231.3,101.4L1233.9,103.4L1236.2,105.8L1238.6,108.0L1242.2,108.9L1245.8,109.8L1249.1,111.8L1252.6,113.0L1257.8,114.2L1263.0,114.2L1268.3,114.7L1273.5,115.0L1278.8,114.2L1284.0,113.0L1289.3,111.8L1294.5,110.5L1295.7,113.8L1297.2,117.1L1297.9,120.6L1299.0,124.0L1301.1,128.7L1303.6,133.1L1304.7,138.1L1306.0,143.0L1309.3,141.3L1312.7,139.6L1316.3,138.8L1320.0,138.0L1317.2,132.7L1315.5,127.0L1318.9,123.3L1322.6,120.0L1327.3,118.8L1332.0,117.5L1335.3,120.9L1339.0,124.0L1342.1,123.6L1345.3,123.7L1348.4,123.5L1351.5,122.8L1354.5,123.7L1357.7,124.1L1360.8,124.1L1364.0,124.0L1366.5,126.6L1368.7,129.3L1371.6,131.3L1374.0,134.0L1375.4,139.7L1378.0,145.0L1381.9,148.4L1386.5,150.9L1391.3,152.9L1396.0,155.0L1398.4,151.6L1401.1,148.5L1404.0,145.6L1407.1,142.9L1410.8,141.0L1414.2,138.6L1417.8,136.6L1421.0,134.0L1423.9,136.1L1426.4,138.6L1429.2,140.8L1432.0,143.0L1434.0,145.9L1436.0,148.9L1438.8,151.2L1441.0,154.0L1445.7,156.3L1450.7,157.8L1455.6,159.3L1460.4,161.5L1465.5,162.4L1470.6,163.4L1475.8,163.8L1481.0,164.0L1479.5,169.0L1478.1,174.0L1475.8,178.6L1473.9,183.5L1472.5,188.5L1471.5,193.6L1471.2,198.8L1471.0,204.0L1468.5,205.9L1466.0,207.8L1463.4,209.5L1461.1,211.6L1458.3,213.1L1455.7,214.8L1453.5,217.1L1451.0,219.0L1447.0,219.3L1443.0,219.6L1439.1,220.7L1435.3,222.0L1432.1,224.3L1428.5,226.1L1424.9,227.9L1421.0,229.0L1417.3,230.1L1413.7,231.2L1409.9,231.6L1406.2,232.5L1402.4,232.8L1398.5,232.8L1394.8,233.6L1391.0,234.0L1385.6,231.9L1380.3,229.5L1374.6,228.3L1369.0,226.8L1363.3,225.4L1357.5,225.1L1351.7,224.8L1346.0,224.0L1342.8,223.6L1339.6,223.4L1336.6,222.2L1333.5,221.4L1330.4,220.5L1327.3,220.0L1324.1,219.6L1321.0,219.0L1318.3,221.3L1316.0,223.9L1313.5,226.4L1310.6,228.4L1307.6,230.0L1304.4,231.6L1301.5,233.5L1298.4,235.1L1295.7,237.3L1292.7,239.1L1290.0,241.2L1286.9,242.9L1284.2,245.1L1281.4,247.2L1278.6,249.2L1276.0,251.5L1281.3,252.6L1286.5,254.0L1291.0,257.0L1296.0,259.0L1300.1,258.9L1304.0,259.6L1308.0,260.5L1312.0,261.0L1316.6,264.2L1320.8,267.8L1325.3,271.1L1330.0,274.0L1332.3,277.8L1335.3,281.2L1338.9,283.8L1342.0,287.0L1341.4,291.1L1340.8,295.2L1339.5,299.1L1338.0,303.0L1334.1,305.5L1329.9,307.3L1325.9,309.5L1322.0,312.0L1318.7,312.6L1315.4,313.5L1312.4,315.1L1309.2,316.2L1305.9,317.0L1302.7,317.9L1299.3,318.3L1296.0,319.0L1292.3,317.5L1288.6,316.3L1284.7,315.4L1281.1,313.8L1277.5,312.0L1273.8,310.6L1269.9,309.7L1266.0,309.0L1262.0,306.2L1258.0,303.3L1253.8,300.8L1249.8,298.0L1245.9,295.0L1242.6,291.3L1239.3,287.6L1236.0,284.0L1234.1,278.7L1231.6,273.7L1228.4,269.1L1226.0,264.0L1222.1,261.1L1218.3,258.0L1214.9,254.5L1211.2,251.3L1207.5,248.1L1203.6,245.2L1199.5,242.4L1196.0,239.0L1193.0,237.6L1190.0,236.2L1186.9,235.1L1183.9,233.6L1180.8,232.6L1177.7,231.4L1174.7,230.2L1171.5,229.3L1168.7,227.5L1165.8,225.9L1163.1,224.0L1160.5,222.0L1157.8,220.1L1155.4,217.8L1152.8,215.8L1150.0,214.0L1146.0,212.0L1141.7,210.6L1137.6,208.7L1133.3,207.4L1129.4,205.1L1125.7,202.6L1121.8,200.5L1117.5,199.0L1114.8,197.6L1112.2,196.1L1109.7,194.3L1107.1,192.8L1104.7,190.9L1102.1,189.3L1099.4,188.1L1096.5,187.0L1093.6,186.2L1090.7,185.2L1088.1,183.8L1085.2,182.8L1082.8,181.0L1080.6,178.9L1078.0,177.4L1075.5,175.7L1071.2,174.6L1066.8,174.3L1062.4,173.8L1058.2,172.5L1053.8,172.6L1049.4,172.1L1045.0,172.4L1040.6,173.0L1037.4,172.3L1034.4,171.1L1031.1,170.7L1028.0,169.8L1024.8,169.2L1021.5,169.2L1018.3,168.8L1015.0,169.0L1011.4,167.5L1008.0,165.6L1004.3,164.1L1001.0,162.0L997.4,158.2L994.3,154.0L991.3,149.7L989.0,145.0L985.9,144.9L982.7,145.0L979.6,144.6L976.5,144.2L973.4,144.6L970.3,144.8L967.1,144.6L964.0,145.0L961.0,144.8L958.0,144.9L954.9,145.0L951.9,144.7L949.0,144.1L946.0,143.5L943.0,143.4L940.0,143.0L935.6,141.9L931.5,140.1L927.9,137.4L923.8,135.3L920.1,132.8L916.5,130.2L913.0,127.3L910.0,124.0L907.2,122.2L904.6,120.2L901.5,118.8L898.7,117.1L896.5,114.6L894.2,112.1L891.4,110.3L889.0,108.0L886.0,104.6L882.9,101.3L879.9,97.8L877.6,93.9L874.4,90.6L871.0,87.6L868.3,83.9L866.0,80.0L861.2,79.7L856.5,80.3L851.7,80.6L847.0,80.0L842.8,77.4L838.8,74.5L834.9,71.5L831.0,68.5L826.8,64.4L821.6,61.6L820.3,58.1L819.1,54.7L818.0,51.2L817.0,47.6L811.4,45.9L805.6,44.8L799.9,43.4L794.1,42.3L788.5,40.4L783.1,38.3L777.7,35.8L772.3,33.4L766.6,32.3L760.7,32.0L754.9,31.4L749.1,30.6L743.2,30.1L737.4,29.4L731.6,28.3L726.0,26.5L720.9,28.6L715.7,30.3L710.4,31.8L705.2,33.5L700.2,35.6L695.4,38.4L691.0,41.7L686.0,44.0L683.4,47.1L681.1,50.3L678.7,53.5L675.7,56.2L673.3,59.4L671.2,62.9L668.4,65.8L666.0,69.0L663.5,73.7L661.6,78.7L660.0,83.9L657.5,88.6L656.7,93.9L654.9,99.0L652.5,103.9L651.0,109.0L649.0,112.3L646.6,115.2L643.7,117.5L641.0,120.3L638.5,123.0L635.9,125.8L633.3,128.5L631.0,131.5L628.1,133.6L625.8,136.3L623.4,138.9L621.0,141.5L616.9,142.5L613.0,144.0L609.0,145.6L605.4,147.8L602.0,150.3L598.4,152.6L594.7,154.6L591.0,156.5L585.5,154.4L580.2,151.8L574.5,150.4L568.8,149.3L563.2,147.5L557.5,146.1L551.7,145.5L546.0,144.0L542.8,142.5L539.7,140.8L536.9,138.7L534.0,136.8L530.7,135.5L527.6,134.0L524.3,132.7L521.0,131.5L518.1,130.3L515.2,128.9L512.8,126.8L510.1,125.3L508.0,122.9L505.6,120.8L503.2,118.7L501.0,116.5L497.2,115.7L493.3,115.6L489.4,115.0L485.8,113.7L482.0,112.7L478.4,111.2L474.6,110.3L471.0,109.0L467.0,106.8L463.5,104.0L461.4,107.0L458.9,109.7L457.5,113.1L456.0,116.5L454.6,122.2L452.0,127.4L451.1,133.2L451.0,139.0L450.5,144.3L450.0,149.7L448.7,154.9L447.8,160.1L447.3,165.5L447.2,170.8L447.4,176.2L448.5,181.5L447.1,184.4L446.3,187.6L444.6,190.4L443.4,193.4L442.1,196.4L440.3,199.1L438.1,201.5L436.0,204.0L434.4,207.3L432.2,210.3L430.1,213.2L428.1,216.3L426.1,219.3L423.9,222.3L422.5,225.6L421.0,229.0L419.3,231.9L417.2,234.6L415.3,237.4L413.4,240.2L412.1,243.4L410.4,246.3L408.0,248.8L406.0,251.5L403.0,253.8L400.4,256.5L397.6,259.1L395.2,262.1L392.8,265.0L390.0,267.5L387.7,270.6L386.0,274.0L382.0,276.5L378.2,279.3L374.7,282.4L371.2,285.5L367.1,287.8L363.1,290.4L359.6,293.5L356.0,296.5L350.8,296.6L345.7,297.9L340.8,299.5L336.0,301.5L333.3,299.9L330.5,298.4L328.4,296.0L326.0,294.0L321.8,297.3L318.5,301.5L317.6,305.8L317.2,310.2L315.6,314.3L314.6,318.6L312.5,322.4L310.3,326.2L308.5,330.2L306.4,334.0L306.5,339.0L305.8,344.0L305.7,349.0L305.2,354.0L306.6,357.5L308.3,361.0L312.7,363.0L317.4,364.5L321.7,366.6L325.7,369.4L330.3,371.0L335.0,372.2L339.6,373.8L344.3,375.0L348.9,377.0L353.5,379.1L358.1,381.3L363.0,382.4L367.6,384.7L372.6,386.1L377.4,388.0L381.6,391.0L384.4,393.4L387.4,395.5L390.5,397.4L394.0,398.6L397.3,401.2L400.3,404.0L402.3,407.8L405.0,411.0L407.3,413.8L409.0,417.1L410.7,420.3L412.6,423.4L412.7,427.2L413.0,431.0L414.2,434.6L415.0,438.3L416.4,441.6L417.1,445.1L418.4,448.5L418.9,452.0L418.6,455.1L419.0,458.2L419.3,461.4L420.0,464.4L418.9,467.5L417.5,470.5L416.9,473.7L416.4,477.0L416.3,481.7L415.5,486.3L415.0,491.0L413.9,495.5L414.4,499.1L414.6,502.7L414.7,506.4L415.0,510.0L416.6,506.3L418.9,503.0L421.5,497.7L425.0,493.0L430.3,492.7L435.5,493.0L440.8,492.7L446.0,492.0L451.0,493.7L455.8,495.9L460.2,498.7L465.0,501.0L467.7,503.2L470.4,505.2L473.2,507.2L475.8,509.5L478.1,512.0L480.6,514.4L482.4,517.4L484.6,520.0L486.8,522.3L489.3,524.3L491.3,526.7L493.4,529.1L496.1,530.7L498.9,532.3L501.3,534.3L504.0,536.0L506.3,538.8L509.0,541.1L511.8,543.5L514.9,545.3L517.9,547.3L520.8,549.4L523.8,551.4L527.0,553.0L529.5,555.0L532.1,556.7L534.4,558.9L536.7,561.0L539.1,563.1L541.7,564.9L544.0,567.0L546.5,569.0L550.9,572.8L555.0,576.8L558.1,581.7L562.0,586.0L564.7,589.1L566.8,592.7L569.0,596.2L570.9,599.9L573.9,602.8L576.6,606.0L578.6,609.6L581.0,613.0L583.3,616.2L585.7,619.3L587.9,622.5L589.4,626.2L591.3,629.6L593.1,633.0L595.0,636.5L596.7,640.0L598.5,643.8L600.2,647.7L602.0,651.5L604.1,655.2L605.4,659.2L606.6,663.3L607.9,667.3L610.0,671.0L610.8,674.8L611.9,678.5L613.3,682.1L615.0,685.5L616.5,689.1L617.2,692.9L618.5,696.5L620.0,700.0L620.4,703.2L621.2,706.3L620.9,709.4L621.2,712.6L622.1,715.7L623.1,718.7L623.8,721.8L624.0,725.0L624.2,728.6L624.6,732.2L624.6,735.9L624.8,739.5L625.3,743.1L625.7,746.7L625.5,750.4L625.0,754.0L620.4,755.8L616.0,758.0L613.8,761.4L611.1,764.3L608.7,767.6L606.2,770.7L603.3,773.4L600.8,776.6L598.5,779.9L596.0,783.0L592.8,785.2L589.3,786.8L586.4,789.4L583.7,792.1L580.4,794.0L577.3,796.2L574.1,798.3L571.0,800.5L567.1,804.8L563.3,809.0L559.2,813.1L556.0,818.0L554.9,821.1L554.3,824.3L553.5,827.5L553.0,830.7L551.6,833.7L550.8,836.9L549.8,840.0L548.5,843.0L548.7,846.1L548.8,849.3L548.8,852.4L549.2,855.5L548.9,858.6L548.7,861.8L548.6,864.9L548.9,868.0L548.8,871.2L549.1,874.3L549.3,877.4L549.5,880.6L549.7,883.7L550.2,886.8L550.5,889.9L551.0,893.0L551.6,896.2L552.8,899.2L553.7,902.2L554.8,905.2L554.6,908.5L555.0,911.7L555.6,914.8L556.0,918.0L558.8,920.9L560.9,924.3L563.2,927.6L565.3,931.1L567.9,934.1L570.9,936.8L573.7,939.7L576.0,943.0L578.0,945.5L579.4,948.2L581.2,950.8L582.7,953.6L584.6,956.1L586.3,958.8L588.5,961.1L591.0,963.0L591.5,966.2L592.2,969.3L593.1,972.4L594.2,975.4L594.8,978.5L595.0,981.7L595.4,984.9L596.0,988.0L599.6,989.2L603.4,990.0L607.2,990.5L611.0,990.5L614.0,993.7L616.8,997.2L620.3,999.9L623.5,1003.0L622.5,1006.8L621.1,1010.5L619.5,1014.2L618.5,1018.0L613.4,1020.4L608.5,1023.0L608.4,1026.1L608.5,1029.3L608.0,1032.4L608.1,1035.5L607.8,1038.6L607.9,1041.8L607.9,1044.9L608.5,1048.0L609.2,1051.8L610.6,1055.5L611.2,1059.3L611.8,1063.1L612.3,1067.0L613.1,1070.8L614.9,1074.3L616.0,1078.0L618.9,1082.8L622.1,1087.4L623.5,1092.9L626.0,1098.0L629.1,1098.8L632.1,1099.9L635.3,1100.4L638.3,1101.3L641.5,1101.6L644.6,1102.4L647.8,1102.9L651.0,1103.0L654.7,1101.7L658.6,1100.7L662.2,1099.0L666.0,1098.0L671.0,1099.0L676.0,1099.3L681.1,1099.1L686.0,1098.0L688.5,1103.0L691.5,1107.7L693.6,1112.9L696.0,1118.0L697.6,1123.4L700.1,1128.4L702.8,1133.3L705.7,1138.1L709.2,1142.6L712.0,1147.5L714.2,1152.7L716.0,1158.0L720.2,1154.7L724.1,1151.1L727.6,1147.1L731.0,1143.0L732.8,1140.4L734.3,1137.7L736.2,1135.2L737.7,1132.4L740.1,1130.3L742.2,1128.0L744.2,1125.6L746.0,1123.0L748.4,1120.7L750.7,1118.2L752.7,1115.6L755.1,1113.2L757.8,1111.3L760.5,1109.2L763.1,1107.2L766.0,1105.5L762.6,1100.8L759.6,1095.8L755.4,1091.8L751.0,1088.0L750.2,1082.9L749.8,1077.7L748.0,1072.8L746.0,1068.0L746.4,1063.0L747.1,1058.0L746.8,1053.0L747.4,1048.0L747.3,1043.0L746.8,1038.0L746.0,1033.0L746.0,1028.0L747.5,1023.1L749.2,1018.3L750.4,1013.4L751.1,1008.3L750.2,1003.3L749.9,998.2L750.2,993.1L751.0,988.0L753.0,983.2L754.1,978.1L755.1,973.1L756.0,968.0L759.7,965.9L763.2,963.6L767.3,962.5L771.1,960.7L774.8,958.7L778.3,956.4L782.3,955.1L786.0,953.0L790.5,952.5L794.8,951.3L799.3,950.5L803.8,950.6L808.0,948.9L812.1,947.1L816.6,946.7L821.0,945.5L825.3,946.5L829.7,947.2L834.1,947.3L838.5,947.2L842.8,946.3L847.2,945.9L851.6,945.4L856.0,945.5L860.5,947.2L865.1,948.5L869.1,951.1L873.5,953.0L872.0,957.2L871.3,961.6L870.7,966.0L870.0,970.3L870.1,974.8L870.1,979.2L870.7,983.6L871.0,988.0L869.2,992.8L867.8,997.8L866.5,1002.8L866.0,1008.0L865.1,1011.9L863.6,1015.5L862.4,1019.3L861.0,1023.0L864.4,1024.7L867.6,1026.9L870.3,1029.6L873.5,1031.8L876.5,1034.1L879.7,1036.2L882.8,1038.4L886.0,1040.5L890.1,1039.4L893.8,1037.4L897.6,1035.5L901.0,1033.0L903.9,1035.7L906.5,1038.9L908.9,1042.0L911.3,1045.3L913.8,1048.4L916.1,1051.6L918.3,1055.0L921.0,1058.0L922.5,1060.7L924.3,1063.3L926.3,1065.7L928.3,1068.1L930.5,1070.3L932.5,1072.8L934.4,1075.3L936.0,1078.0L937.4,1082.0L939.2,1085.8L941.5,1089.3L943.6,1093.0L946.0,1096.4L948.1,1100.1L949.3,1104.1L951.0,1108.0L952.9,1111.1L954.5,1114.4L956.5,1117.5L958.0,1120.8L960.1,1123.8L962.2,1126.7L964.3,1129.8L966.0,1133.0L967.4,1137.4L968.5,1141.8L970.4,1146.0L972.2,1150.1L973.0,1154.6L973.9,1159.1L975.3,1163.5L976.0,1168.0L978.6,1169.8L981.2,1171.5L983.2,1174.0L985.5,1176.1L988.3,1177.6L990.8,1179.5L993.3,1181.4L996.0,1183.0L994.7,1187.2L993.8,1191.6L993.3,1196.0L992.4,1200.3L991.5,1204.7L991.2,1209.1L991.4,1213.6L991.0,1218.0L990.7,1221.8L990.2,1225.5L989.4,1229.2L989.3,1233.0L990.2,1236.7L991.0,1240.4L991.0,1244.2L991.0,1248.0L992.0,1251.7L992.7,1255.4L993.1,1259.2L993.9,1262.9L994.5,1266.7L994.5,1270.5L995.1,1274.3L996.0,1278.0L994.0,1281.1L991.5,1283.8L989.5,1286.9L987.4,1289.8L985.8,1293.1L983.8,1296.2L982.5,1299.7L981.0,1303.0L980.5,1306.7L980.6,1310.5L981.0,1314.2L981.0,1318.0L982.9,1320.5L985.0,1322.8L986.8,1325.4L989.1,1327.6L990.8,1330.2L992.1,1333.1L994.1,1335.5L996.0,1338.0L999.4,1339.4L1002.5,1341.4L1006.0,1342.5L1009.3,1344.2L1012.1,1346.6L1014.7,1349.2L1017.7,1351.4L1021.0,1353.0L1025.6,1356.3L1030.6,1358.8L1035.9,1360.8L1041.0,1363.0L1042.0,1366.9L1042.3,1370.9L1043.8,1374.5L1044.7,1378.4L1046.6,1382.0L1048.4,1385.5L1049.6,1389.3L1051.0,1393.0L1051.7,1389.1L1053.0,1385.3L1053.2,1381.3L1054.2,1377.4L1055.7,1373.7L1056.8,1369.8L1058.9,1366.4L1061.0,1363.0L1060.8,1359.2L1060.6,1355.5L1061.2,1351.8L1061.6,1348.0L1061.7,1344.2L1061.1,1340.5L1061.4,1336.7L1061.0,1333.0L1059.1,1329.9L1057.1,1326.8L1055.5,1323.5L1054.4,1320.0L1052.7,1316.7L1050.5,1313.8L1048.3,1310.8L1046.0,1308.0L1046.6,1304.2L1046.3,1300.4L1046.2,1296.5L1046.8,1292.7L1048.5,1289.2L1049.6,1285.6L1050.1,1281.7L1051.0,1278.0L1051.0,1273.0L1051.2,1268.0L1050.4,1263.0L1050.1,1258.0L1049.6,1253.0L1049.7,1248.0L1050.4,1243.0L1051.0,1238.0L1056.3,1239.8L1061.0,1243.0L1064.7,1240.4L1068.9,1238.6L1072.7,1236.1L1076.0,1233.0L1075.2,1227.9L1074.2,1222.8L1072.8,1217.8L1071.0,1213.0L1074.8,1212.8L1078.7,1212.7L1082.3,1211.4L1086.0,1210.5L1083.6,1207.3L1081.1,1204.2L1078.5,1201.1L1076.0,1198.0L1076.6,1194.9L1076.7,1191.7L1077.5,1188.5L1077.7,1185.3L1078.6,1182.3L1079.2,1179.1L1079.9,1176.0L1081.0,1173.0L1084.2,1170.5L1087.7,1168.6L1090.5,1165.6L1093.4,1162.9L1096.7,1160.6L1099.8,1158.1L1102.7,1155.3L1106.0,1153.0L1105.6,1149.3L1105.2,1145.5L1104.6,1141.8L1104.6,1138.0L1104.7,1134.2L1104.7,1130.4L1105.4,1126.7L1106.0,1123.0L1109.4,1120.3L1113.4,1118.4L1117.3,1116.5L1121.2,1114.6L1124.7,1112.0L1128.5,1109.8L1132.2,1107.5L1136.0,1105.5L1141.0,1104.8L1146.0,1104.0L1151.0,1104.3L1156.0,1104.7L1160.9,1105.8L1166.0,1106.2L1171.0,1105.7L1176.0,1105.5L1181.6,1106.2L1187.2,1106.5L1192.9,1106.3L1198.5,1106.2L1204.1,1105.9L1209.7,1105.7L1215.4,1106.0L1221.0,1105.5L1223.0,1109.0L1225.5,1112.2L1228.2,1115.1L1231.0,1118.0L1231.6,1123.2L1233.2,1128.1L1234.4,1133.1L1234.9,1138.3L1236.5,1143.2L1238.4,1148.0L1239.9,1152.9L1241.0,1158.0L1241.1,1162.5L1240.9,1166.9L1240.2,1171.3L1238.7,1175.5L1237.3,1179.8L1236.5,1184.1L1235.8,1188.5L1236.0,1193.0L1238.3,1196.9L1241.2,1200.4L1243.9,1204.0L1246.0,1208.0L1248.9,1204.6L1251.4,1200.8L1253.4,1196.7L1256.0,1193.0L1258.0,1196.1L1259.5,1199.4L1260.8,1202.8L1262.7,1206.0L1265.2,1208.6L1267.4,1211.6L1269.5,1214.6L1271.0,1218.0L1272.7,1220.7L1274.3,1223.4L1275.9,1226.1L1277.4,1228.8L1280.0,1230.7L1282.2,1232.9L1283.9,1235.6L1286.0,1238.0L1287.9,1240.5L1289.9,1242.9L1291.3,1245.8L1292.8,1248.5L1294.8,1250.9L1297.0,1253.2L1299.1,1255.5L1301.0,1258.0L1302.9,1260.5L1305.2,1262.7L1307.0,1265.2L1309.1,1267.5L1311.3,1269.8L1313.0,1272.5L1314.3,1275.3L1316.0,1278.0L1318.8,1282.8L1321.6,1287.7L1324.4,1292.6L1326.0,1298.0L1330.7,1301.0L1336.0,1303.0L1341.0,1302.9L1346.0,1302.9L1351.0,1303.1L1356.0,1303.0L1359.8,1305.5L1363.0,1308.7L1367.1,1310.6L1371.0,1313.0L1374.0,1317.7L1376.8,1322.6L1379.3,1327.6L1381.0,1333.0L1381.5,1336.4L1382.0,1339.7L1383.1,1343.0L1384.3,1346.2L1386.0,1349.2L1387.4,1352.2L1389.1,1355.2L1391.0,1358.0L1395.0,1360.1L1398.9,1362.4L1402.6,1365.1L1406.0,1368.0L1409.1,1367.7L1412.3,1367.8L1415.4,1367.5L1418.6,1367.4L1421.7,1367.5L1424.8,1367.0L1428.0,1366.6L1431.1,1366.2L1434.2,1365.8L1437.4,1365.8L1440.5,1365.7L1443.7,1365.8L1446.7,1364.9L1449.7,1363.9L1452.9,1363.5L1456.0,1363.0L1456.5,1358.0L1456.0,1353.0L1454.0,1350.5L1451.7,1348.3L1449.3,1346.3L1446.7,1344.6L1444.0,1342.9L1441.4,1341.2L1438.6,1339.8L1436.0,1338.0L1434.4,1335.3L1433.0,1332.5L1430.9,1330.1L1429.0,1327.6L1427.0,1325.2L1424.6,1323.1L1423.0,1320.4L1421.0,1318.0L1422.6,1312.6L1424.8,1307.4L1427.8,1302.6L1431.0,1298.0L1428.8,1295.2L1426.4,1292.6L1423.6,1290.4L1421.0,1288.0L1418.1,1285.8L1415.0,1283.9L1411.8,1282.1L1408.8,1280.1L1405.6,1278.2L1402.3,1276.6L1399.2,1274.7L1396.0,1273.0L1392.8,1268.8L1389.1,1264.9L1385.0,1261.6L1381.0,1258.0L1379.1,1255.5L1377.5,1252.7L1375.0,1250.8L1372.9,1248.4L1371.4,1245.7L1369.8,1243.0L1367.9,1240.5L1366.0,1238.0L1365.9,1233.0L1365.6,1228.0L1366.4,1223.0L1366.0,1218.0L1365.3,1213.6L1365.2,1209.2L1364.3,1204.8L1364.2,1200.4L1363.3,1196.1L1362.2,1191.8L1362.0,1187.3L1361.0,1183.0L1361.3,1179.8L1362.0,1176.7L1362.2,1173.5L1362.3,1170.3L1363.7,1167.3L1364.4,1164.2L1365.3,1161.1L1366.0,1158.0L1369.8,1157.0L1373.5,1155.4L1377.2,1154.2L1381.0,1153.0L1384.5,1154.9L1388.2,1156.4L1392.2,1156.9L1396.0,1158.0L1396.2,1154.0L1397.0,1150.1L1398.1,1146.2L1399.1,1142.4L1400.9,1138.8L1402.4,1135.1L1403.9,1131.4L1406.0,1128.0L1404.1,1122.7L1402.1,1117.4L1399.1,1112.7L1396.0,1108.0L1395.1,1102.9L1394.7,1097.7L1393.1,1092.8L1391.0,1088.0L1388.8,1085.8L1386.8,1083.3L1384.9,1080.8L1383.4,1078.1L1382.0,1075.2L1380.1,1072.7L1377.9,1070.5L1376.0,1068.0L1374.8,1063.0L1373.1,1058.1L1371.5,1053.2L1371.0,1048.0L1369.8,1044.2L1368.7,1040.4L1366.9,1036.9L1365.6,1033.1L1364.9,1029.2L1363.9,1025.4L1362.7,1021.6L1361.0,1018.0L1358.4,1013.0L1356.4,1007.8L1353.3,1003.1L1351.0,998.0L1351.3,994.3L1351.6,990.5L1351.7,986.7L1351.0,983.0L1350.1,979.3L1349.5,975.5L1348.0,972.0L1347.2,968.2L1347.0,964.4L1346.8,960.6L1346.4,956.8L1346.0,953.0L1343.4,949.3L1341.6,945.1L1339.2,941.3L1336.0,938.0L1337.2,934.2L1338.4,930.5L1339.3,926.6L1341.0,923.0L1338.1,918.2L1334.9,913.5L1332.4,908.5L1331.0,903.0L1328.4,899.9L1325.4,897.2L1323.2,893.8L1321.0,890.5L1317.9,890.2L1314.7,889.8L1311.7,888.9L1308.6,888.3L1305.5,887.8L1302.3,887.7L1299.1,887.7L1296.0,888.0L1295.0,882.9L1294.2,877.8L1292.4,873.0L1291.0,868.0L1292.2,864.4L1293.0,860.6L1293.6,856.9L1293.7,853.0L1294.5,849.3L1294.7,845.5L1295.0,841.7L1296.0,838.0L1294.1,832.7L1291.0,828.0L1289.4,824.4L1287.3,821.0L1285.4,817.4L1284.0,813.7L1284.0,809.6L1283.3,805.7L1282.3,801.8L1281.0,798.0L1279.3,794.8L1277.2,791.7L1275.0,788.8L1272.7,786.0L1270.8,782.8L1268.6,779.9L1267.4,776.4L1266.0,773.0L1264.3,769.1L1262.1,765.6L1260.1,761.9L1257.9,758.3L1255.9,754.6L1254.4,750.7L1252.5,746.9L1251.0,743.0L1248.3,740.4L1246.2,737.4L1244.0,734.5L1242.4,731.2L1240.4,728.1L1238.9,724.7L1237.2,721.5L1236.0,718.0L1235.1,714.9L1234.0,711.9L1233.1,708.8L1232.6,705.6L1231.9,702.5L1231.4,699.3L1230.8,696.1L1230.2,693.0L1229.1,689.9L1228.5,686.8L1227.5,683.7L1226.4,680.7L1224.8,677.9L1223.4,675.0L1222.2,672.0L1221.0,669.0L1219.3,666.0L1217.8,663.0L1215.6,660.3L1213.7,657.5L1211.9,654.6L1210.2,651.7L1209.2,648.4L1207.7,645.3L1206.8,642.0L1205.4,638.9L1204.9,635.5L1203.9,632.3L1202.9,629.0L1202.0,625.7L1201.8,622.3L1201.0,619.0L1199.9,613.4L1198.9,607.8L1197.8,602.3L1196.9,596.7L1196.7,591.0L1195.4,585.4L1196.0,579.7L1196.0,574.0L1199.9,572.4L1203.6,570.3L1207.6,569.0L1211.6,567.8L1215.2,565.5L1218.8,563.3L1222.2,560.9L1226.0,559.0L1228.3,562.9L1230.7,566.7L1233.3,570.4L1236.0,574.0L1238.0,579.2L1240.3,584.4L1243.0,589.3L1246.0,594.0L1249.2,595.8L1252.1,598.0L1255.4,599.6L1258.4,601.7L1261.6,603.4L1264.9,604.9L1267.9,607.1L1271.0,609.0L1274.0,607.9L1277.2,607.4L1280.4,606.9L1283.6,607.0L1286.8,606.5L1289.9,606.0L1292.9,604.9L1296.0,604.0L1300.8,603.0L1304.9,604.7L1311.1,604.7L1316.1,602.6L1317.5,600.1L1319.6,601.7L1323.4,604.0L1326.9,606.7L1330.2,609.7L1334.2,611.8L1338.3,613.6L1342.0,616.1L1346.0,618.1L1346.2,621.4L1346.9,624.6L1347.8,627.8L1348.4,631.1L1349.9,634.1L1351.2,637.2L1352.5,640.2L1353.8,643.3L1354.4,646.3L1355.7,649.1L1358.0,647.0L1360.7,645.4L1363.2,643.6L1365.4,641.3L1368.8,640.7L1372.1,639.9L1375.5,639.3L1379.0,639.4L1378.1,644.3L1377.1,649.1L1380.8,651.2L1384.8,653.0L1388.0,653.3L1391.1,654.2L1394.2,654.5L1397.4,655.0L1400.5,654.8L1403.7,655.1L1406.9,655.2L1410.1,654.9L1412.8,656.5L1415.2,658.4L1417.6,660.5L1419.8,662.7L1420.3,666.7L1421.7,670.5L1425.2,673.8L1429.5,676.3L1428.8,679.3L1427.5,682.1L1423.4,678.5L1419.8,674.3L1416.7,677.1L1413.9,680.2L1411.6,684.9L1410.1,689.9L1407.1,694.7L1404.2,699.6L1400.1,699.3L1396.0,699.2L1391.8,699.0L1387.7,698.6L1389.5,703.9L1390.6,709.3L1389.4,712.1L1388.8,715.1L1387.5,717.9L1387.4,718.1L1386.0,718.0L1387.0,720.0L1386.8,720.9L1387.4,723.9L1388.7,726.7L1390.5,727.0L1391.0,728.0L1394.1,729.3L1397.2,730.6L1400.5,731.5L1403.7,732.5L1406.7,733.9L1409.8,735.3L1412.0,736.5L1413.3,741.6L1415.9,746.2L1420.1,748.7L1423.6,752.0L1424.5,750.3L1426.0,753.0L1428.3,754.6L1427.5,755.9L1430.1,760.0L1433.3,763.6L1436.9,765.8L1440.3,768.3L1443.7,770.7L1446.9,773.3L1450.9,772.5L1454.8,771.9L1458.6,770.5L1462.5,769.5L1462.6,765.6L1462.5,761.7L1462.8,760.6L1464.0,757.0L1464.6,753.2L1465.7,749.5L1466.2,745.7L1466.3,741.8L1466.0,738.0L1470.5,738.0L1474.8,737.1L1479.1,735.7L1483.4,734.6L1487.8,734.3L1492.2,733.7L1496.6,733.0L1501.0,733.0L1501.6,731.4L1505.2,730.6L1503.4,727.6L1504.5,725.8L1505.3,721.9L1506.0,718.0L1502.2,718.0L1498.4,718.5L1494.6,717.9L1490.8,717.8L1490.7,717.9L1490.7,717.8L1487.9,716.4L1484.9,715.7L1481.9,715.1L1479.9,711.2L1478.0,707.3L1481.5,706.8L1484.8,705.5L1488.3,704.7L1491.6,703.5L1493.3,700.4L1495.3,697.5L1497.6,694.9L1499.3,691.8L1503.1,690.5L1507.1,689.9L1511.5,693.2L1514.9,697.6L1518.2,696.3L1521.4,694.9L1524.9,694.1L1528.5,693.8L1531.0,690.9L1533.6,688.1L1537.0,686.3L1540.1,684.0L1545.0,684.0L1549.9,683.9L1554.7,685.0L1559.5,686.0L1564.5,686.8L1569.5,686.6L1574.4,687.7L1578.9,689.9L1583.9,689.5L1588.6,687.9L1593.5,686.8L1598.4,686.3L1603.1,684.7L1608.0,684.0L1611.0,683.3L1614.0,682.9L1616.8,681.8L1619.5,680.4L1622.5,680.2L1625.5,679.6L1628.5,679.2L1631.3,678.2L1634.3,675.8L1636.9,673.1L1639.9,670.8L1643.0,668.5L1642.6,665.1L1641.8,661.8L1641.5,658.3L1641.0,654.9L1638.4,653.3L1635.7,651.7L1633.6,649.4L1631.3,647.2L1628.2,643.9L1624.5,641.3L1621.1,638.5L1617.7,635.5L1615.4,632.1L1612.5,629.1L1609.3,626.5L1606.1,623.9L1602.1,623.9L1598.2,623.2L1594.4,622.0L1590.5,621.6L1586.5,621.0L1582.6,620.4L1578.9,618.9L1575.0,618.1L1572.7,615.4L1571.2,612.2L1574.5,610.7L1577.9,609.3L1581.2,607.5L1584.7,606.4L1582.9,603.9L1581.2,601.3L1578.9,599.2L1577.0,596.7L1572.6,593.4L1567.7,591.0L1562.7,588.9L1561.3,588.3L1562.6,585.6L1564.8,582.5L1567.0,579.3L1568.8,576.0L1571.7,573.6L1574.6,571.3L1576.7,568.2L1579.3,565.5L1581.1,561.0L1582.4,556.4L1583.4,551.8L1584.5,547.1L1583.3,542.9L1581.0,539.0L1579.1,535.1L1576.7,531.4L1572.9,529.7L1568.9,528.4L1564.9,527.2L1560.9,526.1L1557.9,526.6L1554.9,527.0L1551.9,527.4L1548.9,528.0L1546.0,528.9L1543.2,529.9L1540.3,530.8L1537.3,531.4L1533.4,533.9L1529.9,537.1L1527.2,540.9L1524.2,544.5L1528.2,547.1L1532.1,549.7L1535.2,552.5L1538.5,555.2L1541.8,557.7L1545.2,560.2L1547.3,564.8L1549.6,569.2L1551.3,573.9L1553.0,578.6L1555.3,581.0L1557.4,583.6L1559.2,586.3L1560.2,588.0L1557.6,587.0L1554.7,589.0L1552.4,591.5L1550.1,594.1L1547.9,596.7L1543.9,597.4L1539.8,597.6L1536.1,599.2L1532.3,600.6L1527.7,597.8L1524.0,594.0L1524.2,594.1L1521.7,592.1L1519.4,589.8L1517.0,587.6L1514.8,585.2L1512.3,583.1L1510.3,580.6L1508.1,578.2L1505.8,576.0L1503.0,574.6L1500.3,573.1L1497.8,571.4L1495.1,569.8L1492.3,568.4L1489.9,566.5L1487.5,564.5L1484.9,562.9L1481.6,561.7L1478.4,560.7L1475.2,559.3L1471.8,558.6L1468.5,557.7L1465.1,557.1L1462.0,555.8L1458.6,555.0L1454.9,551.4L1451.6,547.5L1448.3,543.6L1445.5,539.2L1443.6,534.1L1442.9,528.8L1444.9,523.2L1448.1,518.3L1446.6,514.4L1444.9,510.6L1443.6,506.6L1442.9,502.5L1442.9,499.2L1443.3,496.0L1442.8,492.7L1442.9,489.4L1444.6,485.3L1446.8,481.5L1448.3,477.4L1450.8,473.7L1447.4,471.9L1444.1,470.0L1440.9,467.8L1437.6,465.8L1434.2,465.1L1430.9,463.7L1427.6,462.3L1424.5,460.6L1422.6,455.5L1421.9,450.1L1423.9,445.0L1424.5,439.6L1429.1,440.0L1433.7,440.4L1438.3,440.3L1442.9,439.6L1445.6,437.7L1448.2,435.7L1450.7,433.6L1453.4,431.7L1453.5,427.1L1452.9,422.5L1452.7,417.9L1453.4,413.3L1451.1,410.4L1448.2,408.0L1445.5,405.5L1442.9,402.9L1439.1,398.7L1435.4,394.6L1431.3,390.8L1427.1,387.1L1421.6,386.2L1416.2,384.5L1411.2,381.8L1406.2,379.2L1402.2,379.3L1398.2,380.0L1394.3,379.3L1390.3,379.2L1386.4,380.0L1382.4,380.0L1378.6,381.2L1374.7,381.9L1370.3,378.9L1365.5,376.7L1360.9,374.1L1356.3,371.4L1356.1,367.4L1355.9,363.4L1355.2,359.4L1353.7,355.6L1355.5,352.6L1356.8,349.2L1358.8,346.3L1360.4,343.1L1361.3,339.7L1362.3,336.2L1363.1,332.8L1364.2,329.4L1370.2,329.1L1376.1,330.1L1382.0,330.5L1387.8,332.0L1391.1,331.8L1394.4,331.2L1397.7,331.4L1400.9,331.0L1404.2,330.4L1407.4,329.8L1410.7,329.8L1414.0,329.4L1419.3,328.0L1424.7,327.5L1430.0,326.3L1435.0,324.2L1437.2,322.0L1439.5,320.0L1441.5,317.7L1443.3,315.2L1445.8,313.5L1448.5,312.2L1450.8,310.0L1453.4,308.4L1456.3,305.9L1459.1,303.2L1462.5,301.4L1465.7,299.2L1469.2,297.6L1472.9,296.4L1476.1,294.4L1479.6,292.7L1482.9,292.6L1486.2,292.6L1489.5,292.4L1492.8,292.6L1496.1,292.1L1499.4,291.8L1502.6,290.8L1505.8,290.1L1509.1,290.5L1512.3,291.0L1515.6,291.4L1518.9,291.6L1522.2,291.9L1525.5,292.0L1528.8,291.7L1532.1,291.4L1535.3,290.8L1538.6,290.3L1541.9,290.5L1545.2,290.1L1548.3,291.8L1551.6,293.0L1555.0,294.0L1558.3,295.3L1561.7,294.4L1565.1,293.2L1568.2,291.5L1571.4,290.1L1574.7,288.7L1577.8,286.9L1581.3,286.3L1584.5,284.8L1588.6,283.1L1592.3,280.6L1596.1,278.4L1600.3,277.0L1596.5,274.0L1592.4,271.7L1588.6,268.9L1584.5,266.5L1586.7,262.2L1589.8,258.6L1594.0,257.5L1598.3,256.9L1602.4,255.4L1606.5,253.8L1610.8,253.3L1615.2,252.7L1619.5,253.2L1623.9,253.3L1626.8,251.8L1629.6,250.0L1632.0,247.7L1634.4,245.5L1638.3,244.9L1642.2,244.7L1646.2,244.4L1650.1,244.2L1654.7,244.1L1659.3,244.8L1663.9,245.2L1668.5,245.5L1672.8,247.5L1676.5,250.5L1680.0,253.7L1684.2,256.0L1685.5,261.2L1686.8,266.5L1684.2,270.4L1681.6,274.3L1678.3,274.8L1675.0,275.7L1671.8,276.4L1668.5,277.0L1666.2,279.9L1663.2,282.2L1664.1,286.7L1664.2,291.4L1663.4,295.9L1663.2,300.6L1665.9,303.8L1668.1,307.4L1670.8,310.6L1673.7,313.7L1679.3,313.6L1684.9,313.6L1690.4,313.2L1696.0,313.7L1696.0,314.0L1699.8,314.2L1703.6,314.7L1707.5,314.5L1711.3,314.6L1714.9,316.1L1718.4,317.5L1722.2,318.5L1726.0,319.0L1728.4,321.6L1730.8,324.3L1733.1,326.9L1735.0,330.0L1737.9,332.0L1740.5,334.5L1743.4,336.6L1746.0,339.0L1747.8,343.5L1750.2,347.6L1752.8,351.6L1755.0,355.9L1755.7,360.6L1757.1,365.2L1759.3,369.5L1761.0,374.0L1762.6,377.9L1764.9,381.4L1766.4,385.4L1767.9,389.3L1769.6,393.2L1771.2,397.1L1773.6,400.6L1776.0,404.0L1781.1,406.3L1785.7,409.5L1791.1,411.3L1796.0,414.0L1800.7,411.7L1805.7,410.2L1810.8,409.5L1816.0,409.0L1819.3,410.6L1822.3,412.8L1825.7,414.0L1829.0,415.7L1832.2,417.4L1835.3,419.4L1838.2,421.6L1841.0,424.0L1842.7,427.8L1844.8,431.5L1846.9,435.1L1848.8,438.9L1851.3,442.3L1853.1,446.1L1854.8,450.0L1856.0,454.0L1858.3,457.5L1860.9,460.9L1863.4,464.3L1865.3,468.1L1866.9,472.0L1868.6,475.9L1869.5,480.0L1871.0,484.0L1872.9,487.8L1875.3,491.2L1877.3,495.0L1878.6,499.0L1880.5,502.7L1882.5,506.4L1884.4,510.1L1886.0,514.0L1890.9,515.4L1895.7,517.2L1900.6,518.4L1905.7,519.2L1910.7,519.5L1915.8,519.2L1920.9,518.9L1926.0,519.0L1928.2,516.0L1929.9,512.8L1931.5,509.5L1933.0,506.2L1934.6,502.9L1936.5,499.8L1938.5,496.7L1941.0,494.0L1941.0,489.6L1941.2,485.1L1941.6,480.7L1941.9,476.3L1943.6,472.1L1944.5,467.8L1945.6,463.4L1946.0,459.0L1946.8,454.0L1946.7,449.0L1946.2,444.0L1945.6,439.0L1946.4,434.0L1946.3,429.0L1945.8,424.0L1946.0,419.0L1943.9,414.1L1942.4,409.3L1941.4,404.3L1941.8,399.2L1941.0,394.1L1941.0,388.2L1939.7,382.5L1939.5,376.6L1938.1,370.9L1937.1,365.9L1937.2,360.7L1935.8,355.7L1935.2,350.6L1934.6,346.3L1934.0,341.9L1933.0,337.6L1932.3,333.2L1928.9,330.0L1925.2,327.3L1921.6,324.3L1917.8,321.6L1917.7,318.3L1917.1,315.1L1917.6,311.9L1917.8,308.6L1917.4,305.3L1917.3,302.1L1917.3,298.8L1917.8,295.5L1920.2,292.0L1922.0,288.2L1924.4,284.7L1926.5,281.0L1925.5,278.2L1924.4,275.4L1923.7,272.5L1923.6,269.4L1920.8,265.8L1918.4,261.7L1915.3,258.3L1912.0,254.9L1910.6,250.0L1909.5,245.0L1909.5,239.8L1909.1,234.6L1906.1,229.8L1902.9,225.1L1900.7,219.8L1899.0,214.4L1900.2,209.3L1900.7,204.1L1902.4,199.2L1903.3,194.1L1906.0,192.3L1908.4,190.4L1911.0,188.6L1913.1,186.2L1915.6,184.4L1918.4,182.9L1921.0,181.2L1923.6,179.6L1928.0,179.7L1932.3,179.3L1936.7,179.5L1941.0,179.6L1944.9,175.9L1947.8,171.5L1950.0,166.7L1952.6,162.2L1951.6,159.0L1951.1,155.7L1950.5,152.5L1949.8,149.3L1949.4,146.0L1949.4,142.7L1949.6,139.4L1949.7,136.1L1945.3,133.1L1941.7,129.2L1936.9,127.0L1932.3,124.5L1928.0,120.8L1923.9,116.9L1919.3,113.5L1914.9,110.0L1912.2,108.0L1909.6,105.8L1907.3,103.3L1905.1,100.8L1902.8,98.3L1900.8,95.6L1899.2,92.6L1897.5,89.7L1892.6,86.8L1888.0,83.4L1884.2,79.2L1880.1,75.2L1877.2,74.1L1874.4,72.6L1871.7,71.2L1869.1,69.5L1866.0,69.0L1863.0,68.0L1859.9,67.4L1856.9,66.5L1853.1,66.5L1849.3,65.7L1845.6,64.7L1841.9,64.0L1838.6,62.0L1835.3,60.1L1831.6,59.0L1828.0,57.8L1824.3,56.4L1820.8,54.8L1816.9,54.5L1813.2,53.5L1809.7,51.8L1806.0,50.7L1802.6,48.9L1799.0,47.6L1795.2,47.1L1791.6,46.2L1788.0,45.2L1784.6,43.5L1780.9,42.7L1777.3,42.1L1773.7,41.0L1770.0,40.4L1766.3,40.2L1762.6,40.4L1759.0,40.2L1755.3,40.6L1751.8,39.4L1748.2,38.6L1744.7,37.7L1741.0,37.5L1736.5,35.5L1731.8,34.0L1727.6,31.5L1723.6,28.8L1721.1,24.9L1718.6,20.8L1715.5,17.4L1712.0,14.3L1710.2,10.8L1708.8,7.1L1707.0,3.6L1704.7,0.4L1705.0,0.0L1414.4,0.0L1412.8,0.1L1408.7,0.4L1404.6,0.2L1400.4,0.3L1398.1,0.0L1381.1,0.0L1379.8,0.2L1375.7,0.5L1371.6,0.7L1367.4,0.5L1363.3,0.1L1362.6,0.0L1343.9,0.0L1342.7,0.1L1341.2,0.0L1335.0,0.0L1334.5,0.0L1334.3,0.0L1322.9,0.0L1322.2,0.1L1318.0,0.3L1313.9,0.4L1309.8,0.1L1305.6,0.3L1301.5,0.5L1297.4,0.7L1293.2,0.8L1289.2,1.7L1285.1,2.3L1281.0,3.0L1276.9,3.8L1272.8,3.8L1268.6,4.0L1264.5,4.4L1260.4,5.0L1256.3,5.0L1252.1,5.0L1248.0,5.2L1243.9,5.7L1239.8,5.2L1235.7,4.2L1231.6,4.2L1227.5,3.7L1223.3,3.3L1219.2,2.8L1215.1,2.9L1211.0,2.7L1206.8,2.2L1202.7,2.1L1198.6,1.9L1194.5,1.3L1190.4,1.1L1186.2,0.8L1182.1,0.2L1178.0,0.0L1178.4,4.4L1179.2,8.8L1180.5,13.1L1182.6,17.0L1182.2,20.5L1181.3,24.0L1180.7,27.5ZM246.0,779.0L245.0,772.0L234.0,773.0L235.0,780.0L246.0,779.0ZM536.0,933.0L541.0,928.0L543.5,910.5L533.5,915.5L531.0,923.0L536.0,933.0ZM611.8,1129.2L611.0,1133.0L614.0,1137.8L616.0,1143.0L618.4,1139.5L620.0,1135.6L622.1,1132.0L623.5,1128.0L625.6,1123.6L628.4,1119.7L630.2,1115.3L631.0,1110.5L627.2,1108.7L623.2,1107.4L619.8,1104.9L616.0,1103.0L615.0,1106.7L614.6,1110.5L614.0,1114.3L613.9,1118.1L613.3,1121.8L613.2,1125.7L611.8,1129.2ZM643.9,1151.0L643.3,1154.5L643.5,1158.0L647.3,1161.0L651.0,1164.3L654.4,1167.8L658.5,1170.5L659.5,1167.1L660.3,1163.7L661.3,1160.3L662.3,1157.0L662.8,1153.5L662.8,1150.0L663.3,1146.5L663.5,1143.0L660.3,1139.3L656.5,1136.1L652.4,1133.4L648.5,1130.5L647.7,1133.9L646.8,1137.3L645.7,1140.6L644.8,1144.0L644.6,1147.6L643.9,1151.0ZM723.5,1170.5L716.0,1168.0L717.0,1177.0L723.5,1178.0L723.5,1170.5ZM1191.4,65.9L1192.6,65.9L1193.6,65.1L1194.0,63.8L1193.6,62.4L1192.6,61.6L1191.4,61.6L1190.4,62.4L1190.0,63.8L1190.4,65.1L1191.4,65.9ZM1487.9,409.3L1492.9,412.6L1499.1,412.6L1504.1,409.3L1506.0,404.0L1504.1,398.7L1499.1,395.4L1492.9,395.4L1487.9,398.7L1486.0,404.0L1487.9,409.3ZM1536.3,415.9L1539.3,415.9L1541.7,414.9L1542.6,413.4L1541.7,411.8L1539.3,410.8L1536.3,410.8L1533.9,411.8L1533.0,413.4L1533.9,414.9L1536.3,415.9ZM1545.9,500.6L1549.6,499.4L1552.7,497.1L1555.7,494.7L1558.9,489.7L1560.9,484.2L1558.7,482.1L1556.5,479.9L1554.8,477.5L1553.0,475.0L1549.4,475.8L1546.1,477.4L1543.1,479.6L1539.9,481.5L1538.6,484.9L1538.0,488.4L1536.0,491.3L1534.7,494.7L1538.7,498.5L1542.6,502.5L1545.9,500.6ZM1278.5,619.7L1281.5,619.7L1284.0,617.3L1285.0,613.5L1284.0,609.7L1281.5,607.3L1278.5,607.3L1276.0,609.7L1275.0,613.5L1276.0,617.3L1278.5,619.7ZM1307.3,629.8L1312.3,629.8L1316.4,627.9L1318.0,625.0L1316.4,622.1L1312.3,620.2L1307.3,620.2L1303.2,622.1L1301.6,625.0L1303.2,627.9L1307.3,629.8ZM1334.7,668.9L1339.2,670.8L1344.8,670.8L1349.3,668.9L1351.0,666.0L1349.3,663.1L1344.8,661.2L1339.2,661.2L1334.7,663.1L1333.0,666.0L1334.7,668.9ZM1528.5,748.5L1532.3,747.9L1536.2,748.1L1539.6,747.2L1543.2,746.7L1546.6,745.8L1549.8,744.2L1551.6,740.3L1552.6,738.4L1553.5,738.0L1553.1,737.6L1553.7,736.5L1550.1,732.3L1545.9,728.7L1544.4,730.5L1541.5,730.6L1537.1,731.1L1532.7,730.6L1528.3,729.6L1524.0,730.2L1519.5,730.5L1515.3,731.9L1511.0,733.0L1512.4,735.6L1509.0,736.5L1510.1,739.3L1511.0,742.3L1515.5,745.7L1520.7,748.1L1524.6,748.2L1528.5,748.5ZM1530.8,773.8L1533.2,773.8L1535.2,772.1L1536.0,769.5L1535.2,766.9L1533.2,765.2L1530.8,765.2L1528.8,766.9L1528.0,769.5L1528.8,772.1L1530.8,773.8ZM1413.5,796.9L1415.9,799.5L1417.8,802.4L1421.2,803.6L1424.6,804.4L1428.1,805.0L1431.4,806.3L1437.3,805.9L1443.0,804.4L1444.4,800.7L1444.8,796.7L1445.2,792.8L1445.0,788.9L1440.7,786.2L1436.9,782.9L1432.4,780.5L1427.5,779.2L1423.0,778.8L1418.6,778.0L1414.3,776.9L1410.1,775.3L1406.1,776.0L1402.3,777.2L1404.7,780.3L1406.4,783.9L1408.3,787.3L1410.1,790.8L1411.6,794.0L1413.5,796.9ZM1448.9,822.8L1451.8,819.9L1445.0,810.2L1439.2,812.2L1441.1,818.0L1448.9,822.8ZM1305.7,1342.3L1306.0,1345.5L1310.0,1346.3L1313.9,1347.6L1318.1,1347.5L1322.1,1348.2L1326.2,1348.0L1330.3,1348.3L1334.4,1347.9L1338.5,1348.0L1337.4,1343.6L1337.1,1339.1L1336.9,1334.5L1337.0,1330.0L1335.5,1325.8L1334.4,1321.4L1332.9,1317.1L1331.0,1313.0L1327.4,1314.6L1323.6,1315.6L1320.1,1317.2L1316.5,1318.6L1312.6,1318.9L1308.6,1318.9L1304.8,1319.6L1301.0,1320.5L1302.5,1323.4L1303.5,1326.4L1304.2,1329.6L1304.8,1332.7L1305.3,1335.9L1305.2,1339.1L1305.7,1342.3ZM1332.5,1439.0L1331.2,1436.1L1329.5,1433.4L1328.1,1430.5L1327.6,1427.4L1327.4,1424.2L1326.8,1421.1L1326.0,1418.0L1323.5,1414.0L1321.7,1409.6L1318.9,1405.7L1316.0,1402.0L1313.2,1403.7L1310.4,1405.2L1307.7,1407.0L1305.2,1409.0L1303.1,1411.4L1300.9,1413.8L1298.3,1415.7L1296.0,1418.0L1294.9,1421.1L1293.8,1424.2L1293.2,1427.4L1292.7,1430.7L1291.5,1433.8L1289.8,1436.6L1288.0,1439.4L1286.8,1441.0L1333.2,1441.0L1332.5,1439.0ZM1943.3,33.8L1943.9,37.5L1939.6,37.7L1935.2,38.0L1930.9,37.2L1926.5,37.5L1924.9,41.8L1923.6,46.2L1926.9,45.9L1930.2,46.2L1933.5,46.6L1936.7,47.0L1940.0,47.8L1943.2,48.2L1946.5,48.5L1949.7,49.1L1954.1,48.7L1958.4,48.5L1962.8,48.4L1967.1,49.1L1967.8,52.7L1968.9,56.3L1969.7,59.9L1970.0,63.6L1968.3,68.2L1966.8,72.9L1964.4,77.1L1961.3,81.0L1963.1,85.2L1964.1,89.7L1965.5,94.1L1967.1,98.4L1969.0,93.9L1971.6,89.7L1973.7,85.4L1975.8,81.0L1980.1,80.1L1984.6,79.7L1988.9,79.1L1993.2,78.1L1991.1,81.0L1988.8,83.8L1986.5,86.7L1984.5,89.7L1983.3,93.1L1982.2,96.5L1981.1,99.9L1980.1,103.4L1978.3,106.4L1976.2,109.4L1974.7,112.7L1972.9,115.8L1974.3,118.7L1975.8,121.6L1977.2,124.5L1978.7,127.4L1981.6,125.1L1984.8,123.3L1987.7,121.2L1990.3,118.7L1994.0,118.5L1997.6,117.6L2001.1,116.3L2003.0,116.0L2003.0,0.5L2000.7,0.8L1996.5,1.2L1992.3,1.3L1988.1,1.4L1984.0,1.2L1979.8,0.7L1975.6,0.9L1971.5,0.6L1967.3,0.5L1963.1,0.0L1962.8,0.0L1948.0,0.0L1946.5,0.3L1942.3,0.0L1938.1,0.4L1939.1,6.1L1938.7,11.8L1939.7,17.4L1941.0,23.0L1942.1,26.5L1943.0,30.1L1943.3,33.8ZM1619.8,301.0L1624.6,301.7L1629.1,303.2L1626.1,306.1L1623.6,309.6L1621.3,313.0L1618.6,316.3L1615.3,316.7L1612.1,317.7L1608.9,318.7L1605.6,319.6L1602.3,320.2L1599.1,321.1L1595.7,321.2L1592.4,321.5L1587.2,323.1L1581.9,324.2L1581.3,328.1L1581.2,332.1L1579.8,335.9L1579.3,339.9L1581.9,343.2L1584.7,346.4L1587.6,349.4L1589.8,353.0L1593.3,355.3L1596.3,358.3L1599.6,360.9L1602.9,363.5L1605.3,361.6L1607.8,359.7L1610.4,357.9L1612.7,355.8L1615.3,354.2L1618.2,352.9L1621.1,351.8L1623.9,350.4L1627.1,347.0L1630.4,343.8L1634.0,340.8L1637.0,337.3L1639.1,334.8L1641.2,332.3L1643.0,329.5L1644.9,326.8L1646.0,323.4L1647.8,320.4L1648.8,317.0L1650.1,313.7L1646.4,312.4L1643.0,310.6L1640.2,308.0L1637.0,305.8L1642.2,303.1L1647.5,300.6L1649.0,296.0L1650.7,291.6L1651.5,286.8L1652.7,282.2L1648.6,280.6L1644.6,278.8L1640.6,276.8L1637.0,274.3L1632.4,275.1L1627.8,275.4L1623.2,276.3L1618.6,277.0L1617.0,280.4L1614.8,283.6L1613.0,287.0L1610.8,290.1L1605.6,289.1L1600.3,289.2L1595.1,290.1L1589.8,290.1L1589.8,295.3L1594.9,296.8L1600.2,297.4L1605.4,298.1L1610.8,297.9L1615.4,299.0L1619.8,301.0ZM1553.1,404.0L1554.2,404.4L1555.5,404.4L1556.6,404.0L1557.0,403.2L1556.6,402.5L1555.5,402.1L1554.2,402.1L1553.1,402.5L1552.7,403.2L1553.1,404.0ZM1610.5,405.9L1614.5,405.9L1617.8,405.0L1619.0,403.5L1617.8,402.0L1614.5,401.1L1610.5,401.1L1607.2,402.0L1606.0,403.5L1607.2,405.0L1610.5,405.9ZM1567.0,407.9L1568.3,407.9L1569.3,407.4L1569.7,406.5L1569.3,405.6L1568.3,405.1L1567.0,405.1L1566.0,405.6L1565.6,406.5L1566.0,407.4L1567.0,407.9ZM1600.3,460.6L1603.6,464.5L1606.2,468.9L1610.1,472.3L1613.4,476.3L1612.5,480.2L1611.3,484.0L1610.9,488.0L1610.8,492.0L1613.7,494.3L1616.5,496.8L1619.1,499.4L1621.2,502.5L1625.3,501.5L1629.2,500.3L1633.1,498.8L1637.0,497.3L1640.4,492.8L1644.9,489.4L1646.7,486.4L1648.0,483.1L1648.9,479.6L1650.1,476.3L1652.2,473.1L1653.8,469.6L1655.5,466.2L1658.0,463.2L1659.3,459.9L1660.7,456.7L1661.7,453.3L1663.2,450.1L1665.0,446.6L1666.4,443.1L1667.5,439.4L1668.5,435.6L1662.6,436.7L1656.7,436.9L1650.7,436.8L1644.8,437.1L1638.8,437.1L1632.9,436.7L1627.1,435.2L1621.2,434.3L1616.9,434.1L1612.6,434.6L1608.2,435.0L1603.9,435.0L1599.7,436.2L1595.7,437.9L1591.5,438.9L1587.1,439.6L1590.1,444.7L1592.4,450.1L1594.0,453.0L1595.9,455.6L1598.0,458.2L1600.3,460.6ZM1975.5,475.1L1973.5,479.0L1972.3,483.4L1971.7,487.8L1969.7,491.9L1968.5,496.2L1967.1,500.5L1966.6,505.0L1966.5,509.5L1966.0,514.0L1968.6,519.0L1971.0,524.0L1973.1,520.3L1975.5,516.9L1977.7,513.3L1980.0,509.7L1981.7,505.9L1982.8,501.8L1984.1,497.8L1986.0,494.0L1987.0,489.5L1987.8,485.0L1989.8,480.9L1991.6,476.7L1993.1,472.3L1993.7,467.8L1995.3,463.5L1996.0,459.0L1993.5,455.9L1991.0,452.7L1988.8,449.4L1986.0,446.5L1984.3,450.5L1983.3,454.8L1981.6,458.8L1979.6,462.7L1978.6,467.0L1977.2,471.1L1975.5,475.1ZM1616.0,617.5L1621.0,619.2L1625.5,621.9L1628.9,620.9L1632.4,620.5L1635.8,619.4L1639.1,618.1L1642.4,613.5L1644.9,608.3L1640.3,605.8L1635.2,604.5L1632.3,602.5L1629.6,600.2L1626.4,598.8L1623.6,596.7L1623.8,593.3L1623.6,589.9L1623.2,586.5L1623.6,583.1L1619.7,583.1L1618.3,587.9L1617.7,592.8L1615.6,595.1L1613.2,597.1L1610.5,598.7L1608.0,600.6L1603.5,601.4L1598.9,602.4L1594.8,604.5L1590.6,606.4L1594.6,608.0L1598.5,610.0L1602.2,612.2L1606.1,614.2L1611.1,615.6L1616.0,617.5ZM1868.5,654.0L1876.0,651.5L1866.0,636.5L1853.5,631.5L1858.5,644.0L1868.5,654.0ZM1561.2,730.8L1565.8,730.8L1569.6,729.4L1571.0,727.0L1569.6,724.6L1565.8,723.2L1561.2,723.2L1557.4,724.6L1556.0,727.0L1557.4,729.4L1561.2,730.8ZM1577.9,764.4L1581.4,763.3L1584.7,761.7L1587.6,760.6L1590.5,759.6L1593.3,758.3L1596.2,757.3L1599.2,756.5L1602.3,756.2L1605.1,755.0L1608.0,753.9L1614.0,753.9L1619.9,753.6L1625.8,752.3L1631.3,750.0L1631.6,745.1L1633.3,740.3L1637.3,738.8L1641.0,736.4L1644.7,734.0L1648.8,732.6L1653.0,730.2L1657.5,728.7L1662.0,726.9L1666.3,724.8L1671.1,721.8L1676.0,719.0L1673.0,718.0L1670.4,716.3L1667.4,715.5L1664.3,715.1L1659.0,716.3L1653.6,716.6L1648.2,716.4L1643.0,715.1L1639.2,716.8L1635.1,717.8L1631.3,719.4L1627.4,720.9L1622.2,723.1L1617.0,725.4L1611.6,727.4L1606.1,728.7L1603.1,731.3L1600.0,733.7L1596.7,735.9L1593.2,737.6L1589.5,739.1L1586.1,741.1L1582.5,742.5L1578.9,744.2L1575.6,746.0L1572.6,748.5L1569.9,751.1L1567.4,754.0L1564.4,756.5L1561.8,759.2L1558.9,761.7L1555.6,763.6L1559.6,764.4L1563.6,764.7L1567.4,765.9L1571.2,767.5L1574.5,766.0L1577.9,764.4ZM1611.0,1030.5L1601.0,1020.5L1603.5,1033.0L1610.0,1038.0L1611.0,1030.5ZM1848.5,1084.0L1838.5,1083.0L1841.0,1087.0L1851.0,1088.0L1848.5,1084.0Z" fill="#b8bdfa"/><path clip-path="url(#lc)" d="M64,182L65,175L63,169L62,163L58,157L58,151L58,145L61,139L63,133 M63,133L58,130L55,126L52,122L50,117L46,115L41,113L37,110L33,108 M33,108L28,109L23,111L18,111L13,112L8,111L3,111L-2,110L-6,107 M59,398L64,397L69,398L73,396L78,395L82,397L86,398L91,398L96,399L100,397L104,395L108,393L112,391L117,390L121,391L126,390L130,388 M130,388L135,384 M135,384L137,380L139,376L141,372L141,368L145,365L148,362L151,359L152,355 M331,36L332,31L332,26L331,21L328,17L328,12L328,6L330,2L332,-3 M33,108L32,103L32,99L33,95L34,91L37,87L39,84L41,80L42,76L43,72L43,68L43,63L43,59L45,56L48,52L49,48L50,44 M63,133L67,133L71,132L75,131L78,130L82,129L86,128L89,125L93,123L96,121L100,120L103,117L106,114L108,111L110,107L113,104L115,101 M105,453L108,450L111,448L115,447L117,445L121,444L124,443L128,441L131,439 M131,439L132,433L132,427L131,420L132,414L130,408L129,401L130,395L130,388 M131,439L136,440L140,441L144,442L148,444L152,447L156,450L161,451L165,451 M188,441L184,438L179,436L176,432L173,428L169,425L165,422L162,418L160,414L157,410L155,405L153,401L149,397L145,394L142,391L138,388L135,384 M242,785L245,783L247,780L249,777L251,775 M370,392L373,386L376,381L378,375L380,369 M380,369L374,367L370,363L365,361L359,361L355,357L350,354L347,349L343,346L337,344L332,342L327,340L322,337L317,337L311,337L306,336L300,334 M1006,-6L1006,-0L1005,6L1005,12L1005,17L1005,23L1005,29L1007,35L1008,41 M1131,80L1133,75L1135,70L1136,65L1139,61L1142,57L1144,51L1145,46L1149,42 M1157,24L1161,19L1164,14L1166,9L1167,3 M380,369L382,364L386,360L390,355L395,352L397,347L398,341L402,337L405,332 M405,332L403,329L402,326L400,322L399,319 M399,319L395,313L391,309L386,305L381,300L376,296L369,294L364,291L360,285 M439,499L442,492L442,486L444,479L447,473L447,466L450,460L450,453L451,446L455,440L460,436L464,430L467,424L469,417L469,410L471,407L473,404L475,401L475,398 M475,398L472,393L470,388L467,383L466,378L461,375L458,371L453,369L449,365 M449,365L445,368L442,371L439,374L436,377L433,380L429,383L425,386L423,389L421,393L418,397L415,400L412,403L410,408L407,411L404,415L404,419 M449,365L448,361L448,357L446,353L444,349 M444,349L439,346L435,342L431,339L427,336L422,333L416,332L411,331L405,332 M451,113L457,112L462,109L468,106L474,104 M519,45L523,43L526,39L528,35L532,32L532,27L534,23L537,19L539,15 M539,15L541,10L543,5L546,0L545,-5 M399,319L402,317L406,315L408,312L412,310L413,306L416,303L417,300L420,297L422,293L425,291L428,288L431,285L434,283L438,281L441,278L443,276 M443,276L441,273L438,270L436,267L435,264L432,261L430,258L428,256L425,253L423,249L422,246L422,242L422,238L421,235L420,231L418,228L416,225 M444,349L447,347L451,345L455,343L459,342L461,339L463,335L466,332L470,330 M470,330L472,327L475,324L477,321L479,318 M479,318L481,312L483,306L487,302L490,296 M490,296L488,290L487,284L483,280L479,276 M479,276L475,274L471,272L466,271L461,271L457,272L452,274L448,276L443,276 M479,276L479,271L477,267L476,263L475,258L476,254L477,250L477,245L478,241L478,236L478,232L479,228L479,223L481,219L482,215L484,211L486,207L487,203L487,198L488,194L489,190L489,185L491,181L492,177L494,173L493,169L495,164L494,160L493,156L493,151L494,147L495,143L497,139 M497,139L495,135L494,131L493,127L492,122L490,119L488,115L487,111L485,107 M520,556L526,552 M526,552L527,545L531,539L535,534L540,529L542,523L542,516L545,510L546,504L546,497L546,490L548,484L552,478L553,472L553,465L556,459L557,452 M557,452L556,447 M556,447L554,444L551,442 M551,442L547,440L544,437L539,437L535,436L531,434L527,431L524,428L521,425 M521,425L514,428L508,430L502,433L496,437L494,440L491,442L490,446L488,449L485,451L482,452L479,454L476,456L471,461L465,465L462,471L459,478L454,482L449,487L445,493L442,499 M475,398L480,398L485,398L489,397L494,396 M494,396L497,391L500,386L503,382L504,376L509,373L514,370L518,366L521,361 M521,361L519,358L516,355L513,353L510,350L507,348L504,346L501,344L498,342L495,339L492,337L489,335L485,334L481,332L478,331L474,331L470,330 M521,361L527,360L532,357L537,354L542,351 M542,351L539,348L535,345L531,343L527,342L523,339L519,337L516,335L512,332L507,331L503,329L499,328L495,326L491,323L488,320L483,319L479,318 M542,351L546,350L551,349 M551,349L555,345L559,341L563,336L566,331L568,325L573,321L578,318L583,315 M583,315L584,311L584,307L585,304L587,301 M587,301L586,297 M586,297L581,296L574,295L568,296L562,295L556,293L550,293L544,293L538,296L532,294L526,292L520,292L514,292L508,293L502,296L496,295L490,296 M521,425L519,421L517,418L514,415L511,413L508,410L506,407L504,403L501,400 M501,400L497,399L494,396 M501,400L505,398L509,397L514,396L519,396L523,395L528,394L532,394L537,395 M537,395L542,392L546,387L548,382L550,376 M550,376L551,369L550,362L551,356L551,349 M544,881L549,880L554,879L560,878L564,875 M564,875L569,873L573,870 M573,870L574,865L576,860L575,855L575,850L575,846L576,841L577,836L577,831L577,826L576,821L574,816L572,812L572,806L571,801L572,796L574,792 M586,297L587,293L589,290L590,286L590,283 M590,283L587,280L583,278L582,274L579,271L576,268L575,264L571,262L569,259L568,255L568,251L566,247L564,244L563,240L564,236L564,232L562,228 M562,228L560,225L557,223L555,220L553,217L550,215L548,212L544,211L541,209L538,206L535,204L532,203L529,201L527,199L525,195L522,193L521,190L518,187L516,185L514,181L512,178L511,175L508,172L507,169L507,165L505,162L503,159L502,156L500,152L499,149L499,145L498,142L497,139 M551,442L550,437L551,431L551,426L550,421 M550,421L548,418L547,414L546,411L544,408L543,404L540,401L539,398L537,395 M556,447L559,445L562,444L565,442L567,439L570,436L572,433L575,431L578,429L579,426L581,422L584,420L586,417L587,414L589,410L591,407L592,404 M592,404L592,404 M592,404L588,403L584,401L580,399L576,398L572,395L568,394L564,393L559,391 M559,391L557,395L557,399L556,403L556,407L553,410L551,413L550,417L550,421 M559,391L556,388L555,384L552,380L550,376 M592,404L595,398L598,393L600,387L601,380L599,374L599,368L598,362L598,355 M598,355L597,350L595,345L593,340L591,335L588,330L586,325L586,320L583,315 M562,228L566,226L570,225L574,223L578,222L582,219L586,217L590,215L593,213L597,210L601,208L605,206L608,204L612,201L616,200L620,198L624,196 M624,196L624,193L623,189L623,185L622,182L622,178L621,174L619,171L618,168L615,165L613,162L611,159L609,156L607,153L605,150L604,146L602,143 M556,36L552,31L546,27L543,21L539,15 M604,673L611,671L617,669L624,669L631,667L637,666L643,662L650,661L656,658 M656,658L660,654L664,649L667,644L668,638 M668,638L664,634L659,630L654,627L649,623L644,620L639,617L634,614L628,613L622,611L616,609L611,606L605,605L600,602L594,600L588,599L582,599 M582,599L577,599L572,599L567,599L562,597 M557,452L561,453L566,454L571,455L575,456L580,456L585,456L590,455L595,455L599,457L604,458L609,457L614,457L619,456L624,456L629,454L633,452 M633,452L635,446L640,441L645,437L648,431 M648,431L644,430L640,430L637,428L633,426L630,423L627,421L624,418L621,416L618,414L614,413L610,412L607,410L603,408L599,407L596,405L592,404 M589,978L594,976L600,972L605,969L610,966L613,960L619,957L621,951L625,946 M625,946L623,942L621,938L620,934L619,929L615,926L612,923L609,919L607,916 M607,916L603,916L599,918L595,917L592,916L588,916L584,916L580,915L577,915L573,914L570,912L566,910L563,908L559,908L555,908L552,907L548,905 M598,355L602,361L604,367L608,372L613,376L618,380L625,383L630,387L636,389L642,391L649,392L655,394L660,398L666,402L672,404L676,409L680,414 M680,414L685,413L689,412 M689,412L692,407L692,401L693,395L692,389L692,383L694,377L697,372L699,366 M699,366L697,364L695,361L694,357L693,354L691,351L689,348L686,347L683,344 M683,344L680,346L676,346L673,347L669,346L662,345L656,343L649,340L643,338L637,336L630,333L624,330L618,326L615,321L609,316L603,314L597,310L591,306L587,301 M683,344L680,338L678,332L676,326L675,319L678,312L679,306L680,299L679,292L681,286L683,280L685,274L687,268L690,261L691,255L695,249L700,244 M700,244L695,242L692,239L689,234L687,230 M687,230L684,232L681,234L678,235L675,236L671,237L668,238L664,239L661,239L657,240L654,242L650,242L647,243L644,244L641,246L638,249L635,251L633,254L631,256L628,258L625,261L622,263L619,264L616,266L614,269L610,270L607,271L604,273L600,273L597,275L594,277L592,280L590,283 M573,870L577,869L582,869L585,866L589,864L594,862L598,863L602,861L606,859 M606,859L602,857L600,853L598,848L595,844L593,840L590,836L589,831L587,827L585,822L584,818L584,813L584,808L581,804L578,800L575,796L574,791 M564,875L570,877L576,881L580,886L585,890L591,892L598,894L602,900L607,904 M607,904L608,900L609,896L608,892L609,888L609,885L610,881L613,878L614,874 M614,874L613,867L611,861 M611,861L606,859 M752,1126L748,1122L743,1119L738,1116L733,1114 M733,1114L731,1111L728,1108L724,1107L720,1105L717,1103L714,1100L710,1098L706,1097L702,1097L698,1097L694,1095L691,1093L687,1091L683,1090L680,1088L676,1088 M676,1088L669,1085L663,1085L656,1085L650,1086 M650,1086L643,1087L637,1089L631,1089L624,1089 M624,1089L621,1091L617,1093 M607,916L606,910L607,904 M625,946L631,947L636,947L642,945L647,945 M647,945L650,942L654,941L657,940L660,938L662,935L665,932L666,929L668,926 M668,926L668,919L669,913L669,907L671,901 M671,901L667,901L663,899L659,899L655,898L651,898L647,897L643,894L640,893L636,891L633,888L630,885L628,882L624,880L621,878L617,876L614,874 M526,552L531,552L536,550L540,547L545,544L550,544L555,543L560,541L565,541 M565,541L570,538L574,534L578,530L583,527L586,522L588,516L590,511L593,506L599,505L605,503L610,500L615,497L618,492L623,489L627,484L630,479 M630,479L630,472L629,465L630,462L632,459L633,455L633,452 M648,431L652,429L656,425L659,422L662,419L667,417L671,415L676,414L680,414 M611,861L614,858L618,856L621,853L623,848L627,845L631,843L635,842L639,840L643,838L648,836L652,836L656,835L660,833L664,830L668,827L672,826 M672,826L669,821L666,817L664,813L662,808L660,804L655,801L651,798L648,794L644,790L641,787L637,783L635,779L631,775L627,773L624,768L621,764 M621,764L617,764L614,762L610,761L606,761 M634,119L639,123L644,126L649,129L653,133L658,137L661,142L666,146L672,148L676,153L680,157L682,163L686,167L689,172L693,177L696,182L699,188 M699,188L702,185L706,182L710,181L714,178 M714,178L715,173L715,167L716,161L717,156L717,150L719,144L719,138L719,133L720,127L719,121L717,115L717,109L718,103L721,98L723,92L724,87 M724,87L723,83L722,79L721,75L719,72L718,68L718,64L716,60L714,56L712,54L709,51L706,48L705,44L702,41L699,39L697,35L695,32 M690,21L690,18L689,14L688,10L686,7L683,4L682,0L680,-3L676,-4 M671,901L673,897L675,893L678,890L680,886L682,882L685,879L687,875L690,871L690,867L691,862L690,858L690,853L692,849L693,845L695,841L698,837 M698,837L694,836L691,833L689,831L686,828L682,828L679,827L675,827L672,826 M630,479L633,482L636,483L640,485L644,486L646,490L648,493L650,496L653,499 M653,499L656,502L660,504L664,507L668,509L672,510L676,511L681,511L685,511 M685,511L687,508L689,505L692,503L694,501 M694,501L696,496L698,492L699,487L702,484L704,479L704,474L703,470L703,465L701,461L700,456L701,451L700,447L702,442L703,438L704,433L705,429 M705,429L701,425L697,421L693,417L689,412 M582,599L587,598L592,600L598,601L603,600L608,599L613,599L619,599L624,598 M624,598L625,594L626,589L626,585L628,581L629,576L632,572L634,569L638,566 M638,566L636,561L633,556L629,552L626,548 M626,548L622,547L619,546 M619,546L615,546L612,545L608,546L605,546L602,545L598,545L595,543L592,541L589,542L585,543L582,542L578,542L572,541L565,541 M687,230L687,229 M687,229L684,226L683,221L679,218L676,215L672,212L668,209L664,207L660,205L655,205L650,205L646,204L641,204L637,203L632,201L628,199L624,196 M668,638L673,634L677,629L679,623L683,619 M683,619L683,615L683,612 M683,612L679,609L675,606L670,605L667,602 M667,602L661,602L656,601L651,599L646,597L640,596L635,597L629,598L624,598 M621,764L625,761L629,758L633,754L636,751L640,747L645,745L650,745L655,744 M655,744L655,740L655,735L657,731L658,727L660,722L662,718L665,715L668,711L667,707L668,702L668,698L669,694L669,689L669,685L668,681L667,676 M667,676L663,673L660,669L658,663L656,658 M619,546L622,543L625,541L626,538L629,535L631,532L633,529L634,525L636,522L638,520L641,517L644,515L646,512L648,509L650,506L651,502L653,499 M624,1089L626,1083L628,1077L629,1070L630,1064L633,1058L637,1053L639,1047L642,1041L645,1035L649,1030L654,1026L657,1020L660,1014L664,1009L665,1002L669,997 M669,997L668,993L669,990L667,986L666,983 M666,983L665,978L661,974L658,969L656,964L652,960L650,955L649,950L647,945 M667,676L670,679L674,680L678,682L681,683L684,687L686,690L689,692L692,695L695,696L699,698L702,700L706,701L710,703L714,703L717,706L720,708 M720,708L724,705L728,703L731,700L734,696L737,693L740,689L742,685L743,680 M743,680L741,675L741,670L738,666L736,662L733,658L729,655L726,651L723,647 M723,647L718,643L715,637L710,634L704,631L698,628L692,627L687,623L683,619 M667,602L662,598L660,592L655,589L650,586L647,580L643,576L641,571L638,566 M687,229L688,224L689,218L690,213L688,207L691,202L695,198L697,193L699,188 M683,612L684,611 M684,611L688,607L691,603L693,599L696,594L697,589L699,584L700,579L704,575 M704,575L701,570L700,564L698,558L696,553L692,549L687,545L684,540L682,535 M682,535L678,535L674,536L671,537L668,539L664,541L662,544L658,546L655,547L651,547L648,546L644,546L640,546L637,546L633,547L630,548L626,548 M682,535L683,529L683,523L685,517L685,511 M668,926L672,928L676,930L680,932L684,934L688,934L692,933L696,934L701,934 M701,934L704,930L707,927L710,923L713,919L717,917L721,913L724,909L726,905L727,900L730,896L731,891L733,887L734,882L735,877L736,872L736,867 M736,867L733,864L730,860L727,856L724,852L724,847L724,842L723,837L720,833 M720,833L714,833L708,832L703,834L698,837 M720,833L724,830L726,827L728,824L730,821L734,819L737,817L740,814L743,812 M743,812L745,807 M745,807L743,802L743,796L741,791L739,786L738,781L737,775L738,770L738,765 M738,765L736,761L733,757L731,753L729,749L725,746L722,743L720,739L717,736 M717,736L713,736L709,737L706,739L702,740L698,739L694,740L690,739L686,737L682,737L678,738L674,738L670,740L666,742L663,744L659,744L655,744 M666,983L672,983L677,981L683,981L688,978L693,976L698,974L704,973L709,973 M709,973L713,968L716,963L719,957L719,951 M719,951L717,946L715,940 M715,940L711,939L707,939L704,937L701,934 M717,736L716,732L716,729L716,725L715,721L717,718L719,715L720,712L720,708 M704,575L709,573L714,570L720,568L725,567L730,564L734,560L740,558L745,555L751,556L756,557L762,556L768,555L773,557L779,557L785,556L790,555 M790,555L792,551L794,548 M794,548L790,543L786,538L783,532L780,526 M780,526L775,524L769,523L763,521L758,518L752,518L747,517L741,519L735,520L730,519L724,517L719,514L713,513L709,510L705,506L700,502L694,501 M699,366L705,365L709,362L714,359L718,356L721,351L724,347L729,344L733,340L738,339L743,337L748,335L753,333L758,332L764,331L769,330L773,327 M773,327L773,321L774,316L774,311L776,306L775,300L775,295L777,290L780,285 M780,285L774,285L768,283L763,280L758,277L753,276L748,273L743,270L738,268L733,265L728,263L722,260L717,259L713,255L708,252L703,249L700,244 M780,285L781,284 M781,284L782,279L784,274L786,270L788,265L788,260L788,255L788,250L789,245L794,243L797,239L799,234L802,230L804,225L807,221L809,217L811,213 M811,213L808,210L805,207L802,205L799,203L796,200L792,198L790,195L787,193L784,190L782,186L780,183L779,179L775,177L772,174L770,171L766,169 M766,169L766,169 M766,169L760,172L754,174L747,176L740,177L734,179L727,178L721,178L714,178 M705,429L709,428L712,428L716,430L720,431L723,432L727,433L730,434L734,435L737,437L741,438L744,440L747,442L751,441L755,442L759,443L763,443 M763,443L766,440L770,437L774,435L779,433 M779,433L780,429L782,424L782,420L784,415L785,411L787,406L789,402L791,398L793,394L795,389L795,385L795,380L795,375L794,371L795,366L796,361 M796,361L795,358L795,354 M795,354L792,351L788,349L785,345L783,341L780,338L779,334L775,331L773,327 M723,647L728,643L732,638L734,632L738,626L744,622L749,619L755,616L762,616 M762,616L757,615L752,614L747,613L742,612L737,611L732,611L728,609L723,608L718,609L713,609L709,610L704,610L699,610L694,612L689,612L684,611 M650,1086L654,1081L659,1076L664,1073L670,1069L676,1066L681,1062L684,1057L689,1053L693,1047L697,1042L700,1036L702,1030L707,1026L712,1021L717,1017L722,1013 M722,1013L718,1010 M718,1010L712,1007L706,1005L699,1006L693,1005L687,1003L681,1002L675,999L669,997 M676,1088L681,1086L687,1086L692,1084L696,1080L701,1077L704,1073L708,1069L714,1067 M714,1067L716,1064L719,1062L721,1058L724,1056L726,1053L728,1050L730,1047L731,1044L732,1040L732,1037L732,1033L733,1029L733,1026L733,1022L734,1018L735,1015 M735,1015L732,1015L728,1016L725,1014L722,1013 M738,765L741,762L745,759L749,758L753,756L756,753L760,750L764,748L768,747L770,744L772,740L776,737L779,734L782,731L785,727L789,725L792,722 M792,722L791,717L792,711L792,706L794,701L794,696L796,691L796,685L798,680 M798,680L796,674 M796,674L790,673L783,672L776,674L769,673L763,677L757,679L750,680L743,680 M718,1010L715,1006L714,1001L713,996L713,992L713,987L713,982L711,978L709,973 M724,87L728,91L732,95L738,96L743,99L748,103L753,105L758,108L763,112 M763,112L766,108L770,106L774,104L778,101L782,99L786,97L791,95L795,94 M795,94L791,90L786,86L781,83L775,81L772,76L767,73L763,69L757,66L755,60L753,55L751,49L748,44L744,40L742,34L739,29L737,23 M715,940L716,937L719,934L722,932L724,929L727,927L730,925L734,924L737,923L739,920L741,917L744,915L747,913L750,911L753,909L757,908L760,907 M760,907L757,902L755,896L754,890L751,885L747,881L743,877L739,873L736,867 M753,1058L750,1060L746,1063L742,1065L738,1065 M738,1065L736,1071L735,1077L737,1083L736,1089L735,1096L733,1102L733,1108L733,1114 M796,674L799,671L801,668L803,665L804,662L805,659L807,655L809,652L812,650 M812,650L813,649 M813,649L810,643L808,636L809,630L808,623L803,618L802,611L798,605L794,600 M794,600L790,603L786,605L783,608L778,609L774,611L770,612L766,614L762,616 M735,1015L741,1015L746,1017L751,1016L756,1013 M760,978L755,975L750,970L744,969L738,967L735,962L730,958L725,954L719,951 M760,907L765,911L771,912 M771,912L776,910L780,908L785,907L789,907L794,907L799,905L803,903L807,901L810,898L813,894L818,892L822,890L824,886L826,881L830,878L834,875 M834,875L831,873L828,871L824,870L821,869L818,867L814,866L811,866L807,864L804,863L801,862L798,860L794,859L791,858L787,857L784,856L782,853L780,850L778,847L776,844L773,841L773,837L771,834L769,831L767,828L764,826L762,823L759,821L756,818L752,818L749,816L746,814L743,812 M714,1067L720,1065L726,1064L732,1064L738,1065 M847,952L849,947 M849,947L849,942L847,937 M847,937L843,939L838,938L833,937L829,936L825,934L821,931L817,928L812,927L808,926L803,925L799,924L794,925L789,924L785,924L780,923L776,925 M776,925L778,929L779,933L781,938L781,943L781,948L780,952L781,957L781,962 M780,526L779,521L778,515L777,510L775,505L775,500L775,494L775,489L777,484L775,478L774,473L772,468L770,464L769,458L767,453L765,448L763,443 M776,925L775,918L771,912 M794,600L794,594L794,589L793,583L792,577L792,572L792,566L792,560L790,555 M813,649L817,647L821,646L826,645L830,645L835,644L839,642L843,643L848,643L852,641L856,639L860,638L864,635L868,634L873,634L877,631L881,630 M881,630L884,627L887,624L887,620L889,617 M889,617L890,611L889,605L886,600L884,595L883,589L884,584L884,578L886,573L884,567L882,562L878,558L875,553L873,547L870,543L865,540L861,536 M861,536L856,535L851,536L846,535L842,534L837,536L832,538L827,538L823,539 M823,539L819,541L816,542L812,543L808,543L804,543L801,545L798,547L794,548 M823,539L823,535L824,530L823,526L822,522L822,517L822,513L822,508L823,504L824,500L825,496L825,491L825,487L824,482L824,478L824,474L824,469 M824,469L820,465L815,462L810,459L805,455L802,450L797,446L797,440L793,435 M793,435L790,434L786,435L782,434L779,433 M766,169L767,166L767,162L768,158L768,155L767,151L765,148L765,144L764,140L764,137L765,133L765,130L766,126L766,122L766,119L765,115L763,112 M766,169L769,168L773,167L776,165L779,164L782,162L785,160L787,158L790,155L793,153L795,150L797,148L801,146L804,145L807,144L810,142L814,142L819,137L824,133L829,128L833,122L837,116L841,111L845,105L851,101 M851,101L847,101L843,100L840,100L837,98L833,98L830,98L826,99L823,99L819,99L815,100L812,100L808,99L805,98L802,96L798,95L795,94 M985,1210L991,1208L996,1206 M996,1206L996,1201L998,1196 M998,1196L997,1191L995,1185L995,1179L996,1173L997,1168L999,1162L999,1157L1000,1151L1000,1145L1000,1140L1001,1134L1002,1129L1001,1123L999,1117L1001,1112L1001,1106L1002,1100L1001,1095L999,1089L999,1083L997,1078L994,1073L993,1068L990,1062L987,1057L986,1052L986,1046L986,1040L985,1035L983,1029L982,1024L983,1018 M983,1018L978,1017L974,1017L969,1018L965,1018L960,1019L956,1020L951,1020L947,1021L943,1022L938,1022L934,1024L929,1025L925,1026L921,1027L916,1028L913,1031 M913,1031L911,1035L908,1038L906,1042L905,1046 M913,1031L911,1027L910,1024L910,1020L908,1016 M908,1016L906,1012L903,1008L900,1004L896,1002 M896,1002L893,998L890,995L886,993L882,991L878,990L873,989L869,988L865,987 M792,722L795,725L798,728L800,732L803,735L805,739L808,742L810,745L813,749 M813,749L816,750L820,751 M820,751L825,747L829,743L835,740L841,739 M841,739L845,734L850,729 M850,729L846,728L842,725L838,723L834,721L830,718L826,715L823,713L818,711L816,706L813,703L812,699L810,694L807,691L804,687L801,683L798,680 M745,807L751,806L757,803 M757,803L761,800L765,797L769,795L774,793L778,790L781,786L785,783L789,780L790,775L793,771L796,767L799,763L802,759L805,755L809,751L813,749 M795,354L802,353L808,352L815,352L821,354L828,352L834,353L841,352L848,354 M848,354L852,350L856,346L858,341L862,337L865,332L869,328L872,324L875,319 M875,319L873,316L873,312L871,308L867,306L865,302L864,299L862,295L861,292 M861,292L856,292L851,294L846,296L841,297L835,297L830,298L825,296L820,295L815,294L810,292L805,292L800,291L796,288L791,286L786,285L781,284 M851,101L856,100L861,97L866,97L871,96 M871,96L869,90L866,85L865,79L862,74 M834,875L840,874L846,875 M846,875L850,872L855,869L860,868L865,865L869,860L872,856L877,853L881,850 M881,850L881,843L879,836L878,829L880,823 M880,823L879,819 M879,819L875,816L870,813 M870,813L865,812L861,809L856,809L852,807L847,806L843,803L838,801L835,797 M835,797L830,798L825,798L820,800L815,800L811,800L806,799L801,800L796,800L791,800L786,800L781,799L776,797L771,800L766,800L761,801L757,803 M835,797L833,791L830,786L828,780L827,774L825,768L823,763L822,756L820,751 M871,96L874,98L877,100L880,102L883,104L887,105L890,106L894,106L897,107L900,109L901,113L904,115L907,118L909,120L912,122L915,124L918,126 M918,126L920,125 M849,947L856,947L862,949L868,950L874,952L880,951L886,949L892,948L898,947 M898,947L903,943L908,938L914,937L921,936 M921,936L925,930L927,923L930,917L932,911L932,904L935,898L938,892L942,886 M942,886L939,883L935,880L931,877L927,875L923,874L918,873L914,872L910,870L906,868L902,865L899,863L895,860L891,859L888,855L885,852L881,850 M846,875L844,879L843,883L841,886L839,890L840,894L840,898L839,902L839,906L839,910L840,914L842,918L843,922L845,925L846,929L846,933L847,937 M811,213L817,212L823,210L829,209L834,206L839,202L844,198L848,194L854,192L860,191L866,189L871,187L877,185L883,185L889,184L895,185L901,186 M901,186L900,182L901,178L900,174L898,170L899,166L900,162L901,158L902,154L904,150L905,147L908,143L909,140L912,137L914,133L915,129L918,126 M793,435L798,434L802,435L806,434L810,435L814,433L818,433L822,432L826,431L830,430L834,429L838,428L842,427L846,425L850,424L853,422L858,422 M858,422L853,418L850,414L846,411L841,407L838,403L834,399L831,395L827,391L822,388L818,385L813,383L809,379L804,376L801,371L799,366L796,361 M850,729L854,727L858,727L862,727L865,726 M865,726L866,722L866,717L868,713L867,708L866,704L864,700L863,695L863,691 M863,691L860,689L857,686L855,682L852,680L849,677L845,674L842,672L838,670L834,668L831,665L827,664L823,663L820,660L817,657L814,654L812,650 M870,813L868,808L867,803L865,799L862,794L858,791L855,787L851,783L849,779L847,774L848,769L848,764L848,758L845,754L843,749L841,744L841,739 M926,229L922,224L917,221L914,216L910,212 M910,212L907,218L904,222L901,227L898,233L894,238L890,242L885,246L880,249L878,254L877,260L873,265L871,270L869,276L865,281L862,286L861,292 M875,319L881,320L887,321L892,323L898,326L904,327L910,327L915,331L920,334 M920,334L921,330L924,327L925,323L925,319L928,315L931,313L934,309L935,305 M935,305L934,300L933,296L931,291L930,286L928,281L927,276L925,272L921,268L921,263L921,258L920,253L919,248L920,243L922,238L924,233L926,229 M926,229L931,230 M931,230L936,227L942,224L947,220L953,218L959,217L965,218L971,217L977,215L983,213L988,209L994,207L1001,207L1007,206L1013,206L1019,206L1025,205 M1025,205L1027,200L1030,195L1030,190L1030,185L1031,180L1033,175L1033,170L1034,165 M901,186L901,189L902,193L903,196L904,200L905,203L905,207L908,209L910,212 M858,422L861,424L866,425L870,424L874,424L878,425L882,425L886,424L890,425 M890,425L888,421L884,417L880,413L876,409L873,406L869,402L865,398L863,393L861,388L858,384L855,379L852,375L851,369L851,364L850,359L848,354 M824,469L829,468L835,466L840,464L845,464L850,461L854,458L860,457L865,455L870,452L874,449L879,447L885,445L889,442L893,438L896,433L901,430 M901,430L895,429L890,425 M861,536L866,531L870,526L876,522L880,517L887,516L893,514L899,510L905,506 M905,506L904,502L903,497L904,493L904,488L906,483L906,479L906,474L905,470L907,465L908,461L909,456L910,451L909,447L909,442L908,437L908,433 M908,433L905,431L901,430 M889,617L894,614L900,613L905,614L911,613 M911,613L915,609L919,605L921,600L924,596L926,590L929,585L931,580L934,575L934,569L933,564L934,558L936,552L938,547L939,542L942,537L945,532 M945,532L939,530L934,528L928,526L922,524L919,518L915,514L910,509L905,506 M908,433L912,429L917,427L921,425L925,421L929,418L932,413L936,410L941,407 M941,407L941,401 M941,401L939,397L936,394L935,390L935,386L934,382L934,378L933,374L934,370 M934,370L933,365L931,361L929,356L927,352L926,347L925,343L923,338L920,334 M879,819L881,815L884,811L884,807L887,803L890,800L894,797L895,793L898,789L900,785L902,781L904,778L905,773L906,769L908,765L910,761L911,756 M911,756L909,751L908,747 M908,747L902,745L896,745L891,742L885,740L881,736L876,732L871,729L865,726 M863,691L869,691L875,690L880,688L885,686L890,683L893,678L898,676L903,673 M903,673L898,669L895,664L892,658L888,654L887,648L885,642L883,636L881,630 M908,747L908,743L909,739L909,735L908,731L909,728L910,724L911,720L911,716L915,714L918,712L920,709L922,705L923,701L924,698L926,694L929,692 M929,692L925,691L921,689L918,687L915,684L912,681L908,680L906,676L903,673 M896,1002L895,998L894,995L892,992L890,989L890,985L890,981L890,978L890,974L892,971L893,968L895,965L896,961L896,958L897,954L898,951L898,947 M908,1016L911,1014L914,1012L917,1009L919,1006L921,1003L924,1001L926,997L927,994L928,990L928,987L929,983L929,980L930,976L932,973L933,970L935,966 M935,966L932,963L931,959L930,955L927,951L925,948L922,944L922,940L921,936 M945,532L951,536L957,537L964,538L970,541L976,544L982,545L988,548L995,549 M995,549L999,543L1002,537L1003,531L1005,524 M1005,524L1004,518L1003,511L1004,505L1006,499L1008,493L1008,487L1010,481L1013,476L1016,470L1016,464L1017,458L1019,452L1018,446L1018,439L1017,433L1014,428 M1014,428L1010,425L1006,422L1002,419L997,418L993,415L988,414L984,411L980,409L975,409L970,409L965,408L960,409L955,408L950,406L945,407L941,407 M929,692L935,690L941,689L946,686L951,682 M951,682L954,676L957,670L958,664L958,658 M958,658L959,654L962,651L963,647L964,643L965,639L964,635L964,631L964,627 M964,627L957,625L951,621L945,619L938,616L935,616L931,616L928,617L924,617L921,615L918,614L914,614L911,613 M911,756L918,756L924,758L931,759L938,762 M938,762L941,759L943,754L947,751L950,748L952,743L955,739L957,735L958,730L962,727L966,725L970,722L974,719L977,715L978,710L982,707L984,702 M984,702L980,699L975,697L970,697L965,695L962,692L958,689L954,685L951,682 M880,823L885,822L891,823L897,822L902,820L908,820L914,818L918,815L924,812L929,810L934,808L940,806L945,803L951,804L957,805L963,806L968,805 M968,805L972,799L975,794L978,788L981,782 M981,782L979,778L975,774 M975,774L970,772L966,771L961,769L957,766L952,767L947,766L942,763L938,762 M983,1018L986,1015L989,1011L992,1008L995,1004L998,1001L1002,998L1004,994L1007,990 M1007,990L1002,991L997,990L993,987L988,986L983,984L978,984L975,980L971,978L967,975L962,973L958,972L953,971L948,969L944,968L939,967L935,966 M942,886L945,885L949,885L953,886L957,885 M957,885L958,880L958,875L960,870L962,865L963,860L963,855L965,850L967,846L966,841L965,835L964,830L964,825L965,820L965,815L967,810L968,805 M934,370L940,369L945,366L949,361L955,358L960,354L965,351L969,347L975,344L976,338L980,333L984,328L989,324L992,318L993,312L996,307L999,301 M999,301L995,301L991,300L987,300L983,301L979,300L975,299L971,298L967,298L963,299L959,301L955,302L951,302L947,303L943,305L939,305L935,305 M964,627L967,627L971,626L974,625L977,623L980,620L983,619L986,616L988,614L990,610L993,608L994,605L996,602L997,598L1000,595L1003,593L1005,590 M1005,590L1006,585L1008,579L1008,573L1007,568 M1007,568L1004,563L1001,558L998,554L995,549 M999,301L1002,300 M1002,300L999,297L996,294L992,292L987,290L984,286L983,282L979,279L975,276L974,272L972,268L970,263L967,260L966,255L964,251L962,247L959,243 M959,243L955,243L952,242L948,241L944,239L940,238L937,236L933,234L931,230 M1007,990L1011,987L1016,983L1021,980L1026,978 M1026,978L1027,975L1028,971L1029,967L1029,963L1031,959L1031,955L1033,951L1033,948L1033,943L1033,939L1032,936L1031,932L1031,928L1032,924L1031,920L1031,916 M1031,916L1026,912L1023,906 M1023,906L1019,906L1015,906L1011,906L1007,905L1003,905L999,904L996,903L992,902L989,900L985,898L982,896L978,895L975,892L972,890L968,889L965,887 M965,887L960,887L957,885 M998,1196L1000,1192L1002,1189L1003,1185L1005,1182L1006,1178L1007,1174L1008,1170L1009,1166L1009,1162L1010,1158L1011,1154L1012,1150L1015,1146L1016,1143L1017,1139L1019,1135L1022,1132L1024,1128L1027,1126L1030,1123L1032,1120L1034,1116L1037,1113L1039,1109L1038,1105L1039,1101L1040,1097L1041,1093L1043,1089L1045,1085L1047,1081L1050,1079 M1050,1079L1050,1074L1052,1071L1051,1066L1052,1062L1053,1058L1053,1054L1052,1050L1053,1046L1055,1042L1057,1039L1059,1035L1062,1032L1064,1029L1065,1025L1066,1021L1066,1016 M1066,1016L1061,1011L1058,1006L1052,1001L1047,996L1045,993L1043,991L1040,989L1038,986L1035,984L1032,982L1029,980L1026,978 M975,774L976,770L978,765L981,763L984,759L986,755L986,750L987,746L986,741L988,737L989,733L991,729L992,725L995,721L997,718L1000,715L1002,711 M1002,711L999,707L994,704L989,703L984,702 M965,887L966,880L967,874L968,867L971,861L971,855L972,848L975,842L976,835L980,830L983,824L986,818L991,813L996,809L999,803L1003,798L1006,792 M1006,792L1000,789L993,788L987,786L981,782 M1080,1222L1075,1220L1069,1221L1064,1220L1059,1221L1053,1221L1048,1220L1043,1219L1037,1217L1033,1215L1028,1212L1023,1210L1018,1208L1012,1208L1007,1206L1002,1207L996,1206 M1037,707L1039,701L1042,696L1045,690L1048,685L1052,680L1053,674L1057,668L1058,662 M1058,662L1056,657L1054,652L1055,646L1056,641L1053,636L1051,631L1049,626L1048,621 M1048,621L1044,619L1041,616L1037,615L1033,613L1029,611L1025,610L1021,608L1017,606 M1017,606L1017,610L1018,614L1020,618L1022,621L1023,625L1023,629L1023,633L1023,637L1023,641L1024,645L1023,648L1023,652L1023,656L1024,660L1023,664L1024,668 M1024,668L1026,672L1029,676L1030,681L1031,686L1032,691L1033,696L1032,701L1033,705 M1033,705L1037,707 M1037,707L1042,710L1047,714 M1047,714L1050,710L1052,707L1054,703L1058,700L1058,696L1059,692L1061,688L1062,684L1066,682L1069,679L1073,677L1076,675L1079,671L1082,668L1085,666L1089,663 M1089,663L1085,661L1082,659L1080,656L1077,652 M1077,652L1073,656L1068,658L1063,661L1058,662 M1002,711L1006,712L1010,711L1014,710L1018,708L1021,708L1025,708L1029,707L1033,705 M1024,668L1020,666L1015,665L1012,663L1008,661L1004,661L1000,660L995,661L991,660L987,659L983,659L979,659L974,659L970,659L966,660L962,659L958,658 M1006,792L1011,795L1016,797L1021,799L1026,800L1031,799L1036,799L1042,798L1047,799 M1047,799L1049,798 M1049,798L1047,793L1047,788L1047,782L1046,777L1046,772L1046,767L1048,762L1047,756L1046,751L1046,746L1045,741L1044,736L1045,730L1047,726L1048,720L1048,715 M1048,715L1047,714 M941,401L943,398L947,395L949,391L951,388L952,384L954,380L957,377L961,374L963,371L965,367L967,363L968,359L970,355L972,352L974,348L976,344L980,342L983,339L987,337L990,335L993,332L996,329L999,327L1003,324L1007,322L1010,320L1013,317L1017,315L1020,313L1024,310L1028,308L1032,307 M1032,307L1028,306L1025,304L1021,304L1017,304L1014,302L1010,301L1006,300L1002,300 M1032,307L1036,307L1040,307 M1040,307L1041,301L1041,295L1038,290L1037,285L1040,279L1040,274L1038,268L1039,262 M1039,262L1037,259L1035,256L1033,253L1030,250L1028,247L1026,244L1025,240L1024,237 M1024,237L1020,237L1016,237L1012,237L1008,238L1004,238L1000,239L996,239L992,241L988,241L984,243L980,243L976,242L972,242L967,242L963,242L959,243 M1017,606L1016,602L1012,598L1009,594L1005,590 M1014,428L1020,426L1025,426L1030,423L1035,421 M1035,421L1036,415L1037,408L1041,403L1044,397L1047,392L1052,387L1057,383L1062,379L1064,373L1066,367L1069,362L1071,356L1071,350L1072,343L1074,338L1075,331 M1075,331L1072,327L1068,323L1063,320L1059,317L1055,313L1051,310L1045,309L1040,307 M1023,906L1024,899L1028,893L1030,887L1032,880L1033,873L1036,867L1036,860L1035,853L1037,850L1039,847L1040,844L1042,841L1043,837L1044,834L1044,830L1044,827L1045,820L1044,813L1045,806L1047,799 M1024,237L1023,233L1021,229L1022,225L1022,221L1023,217L1024,213L1025,209L1025,205 M1039,262L1042,260L1045,258L1048,257L1051,256L1053,252L1056,250L1059,248L1061,245L1063,242L1066,240L1069,238L1071,235L1072,232L1074,228L1076,225L1077,222L1080,221L1083,218L1086,216L1088,213L1092,213L1095,213L1099,212L1102,210L1106,209L1108,207L1112,206L1115,205L1118,203L1121,201L1124,198L1126,196 M1007,568L1012,566L1018,567L1023,568L1028,569L1034,569L1039,567L1043,564L1048,561L1053,558L1057,555L1062,553L1068,552L1073,552L1079,552L1084,552L1090,552 M1090,552L1092,548L1095,544L1098,540L1100,535L1103,531L1105,526L1109,523L1112,519L1117,517L1121,514L1124,510L1128,506L1131,503L1133,498L1137,494L1141,492 M1141,492L1138,486 M1138,486L1135,481L1131,478 M1131,478L1125,477L1119,474L1113,473L1108,469 M1108,469L1105,471L1102,473L1098,475L1095,477L1092,478L1088,480L1085,481L1082,483L1079,486L1077,489L1075,492L1072,495L1069,498L1066,499L1063,502L1061,505L1057,507L1054,509L1052,512L1049,515L1046,516L1042,518L1039,519L1035,520L1031,520L1027,520L1023,520L1020,520L1016,521L1012,521L1009,523L1005,524 M1031,916L1037,917L1042,917L1048,917L1053,916L1059,917L1064,919L1070,918L1076,918L1080,915L1086,913L1091,911L1096,909L1101,907L1106,905L1112,903L1117,901 M1117,901L1121,898L1125,896L1129,893L1132,889L1136,886L1139,882L1143,879L1146,875 M1146,875L1142,871L1138,868L1133,865L1129,862L1127,857L1125,852L1121,848L1119,843L1120,838L1119,832L1117,827L1115,822L1114,817L1112,812L1110,807L1108,802 M1108,802L1105,801L1101,799L1098,798L1094,798L1090,798L1086,798L1083,798L1079,798L1075,797L1071,798L1068,798L1064,798L1060,799L1057,798L1053,798L1049,798 M1075,331L1079,331L1083,331L1087,330L1090,328L1094,327L1098,326L1102,327L1106,327 M1106,327L1106,323L1106,319L1107,315L1108,311L1110,307L1111,303L1114,300L1116,296L1118,292L1120,289L1123,285L1125,282L1127,278L1130,275L1134,273L1137,270L1139,267L1139,262L1141,258L1143,255L1143,251L1145,247L1146,243L1147,239L1147,235L1146,231L1146,227L1144,223L1145,218L1145,214L1146,210L1148,206 M1108,469L1104,465L1100,462L1095,459L1092,454L1087,452L1083,448L1079,444L1075,440L1070,438L1066,434L1060,433L1056,429L1051,427L1045,425L1040,423L1035,421 M1048,621L1054,623L1060,623L1065,625L1071,627 M1071,627L1077,625L1082,625L1088,623L1093,623L1097,619L1102,615L1107,613L1113,612 M1113,612L1111,608L1110,604L1107,601L1105,598L1103,594L1102,590L1100,587L1098,583L1095,580L1094,576L1094,572L1093,568L1092,564L1090,560L1089,556L1090,552 M1166,1112L1163,1109L1160,1106L1158,1102L1157,1098L1157,1094L1157,1089L1155,1085L1155,1081 M1155,1081L1148,1080L1142,1081L1135,1081L1128,1081L1124,1082L1121,1084L1119,1086L1116,1088L1109,1090L1102,1092L1096,1089L1089,1088L1083,1087L1077,1084L1070,1082L1063,1081L1056,1081L1050,1079 M1227,1128L1232,1125L1238,1123L1243,1120L1248,1116L1252,1111L1257,1107L1261,1102L1263,1097 M1263,1097L1264,1095 M1264,1095L1263,1092L1262,1088L1260,1085L1259,1081L1256,1078L1255,1074L1253,1071L1250,1069L1249,1065L1249,1061L1248,1058L1249,1054L1247,1050L1246,1047L1245,1043L1244,1040L1243,1036L1241,1033L1240,1029L1237,1026L1234,1024L1232,1021L1229,1018L1228,1014L1227,1010L1225,1007L1224,1004L1222,1000L1221,997L1222,993L1220,989L1220,985 M1220,985L1216,989L1212,993L1207,996L1202,998L1197,1001L1193,1005L1188,1007L1183,1010L1178,1013L1173,1015L1169,1020L1165,1023L1159,1025L1154,1027L1149,1029L1144,1033 M1144,1033L1146,1039L1150,1044L1152,1050L1153,1056L1155,1062L1155,1069L1154,1075L1155,1081 M1261,1213L1266,1213L1270,1211L1275,1210L1280,1208L1284,1205L1289,1204L1292,1200L1297,1198L1301,1196L1305,1193L1309,1190L1313,1188L1315,1183L1319,1180L1323,1177L1327,1174 M1327,1174L1323,1168L1322,1161L1318,1157L1314,1151L1312,1145L1310,1139L1306,1133L1305,1127L1300,1122L1295,1118L1289,1115L1285,1110L1281,1105L1275,1101L1269,1098L1263,1097 M1077,652L1076,646L1073,640L1071,633L1071,627 M1131,478L1133,474L1134,470L1135,466L1136,463L1137,459L1139,455L1140,451L1143,448L1142,444L1141,440L1140,436L1140,432L1140,428L1141,424L1140,420L1141,416L1141,412L1141,408L1141,404L1140,400L1142,396L1143,392L1145,389L1146,385L1146,381L1145,377L1145,373L1146,369L1144,365L1143,361L1142,357L1142,353 M1142,353L1141,349 M1141,349L1138,344L1134,341L1130,338L1124,336L1120,334L1116,331L1111,329L1106,327 M1108,802L1110,799L1112,795L1115,793L1117,789L1120,786L1123,784L1125,780L1127,777L1129,773L1131,770L1133,766L1134,763L1137,760L1140,757L1142,754L1144,750 M1144,750L1142,746L1140,742L1140,737L1139,733L1136,729L1134,725L1130,723L1126,720 M1126,720L1121,721L1116,722L1111,722L1106,723L1101,722L1097,720L1092,720L1087,719L1082,718L1077,718L1072,719L1067,720L1062,720L1058,719L1053,717L1048,715 M1066,1016L1070,1019L1073,1019L1077,1020L1081,1020L1085,1019L1089,1019L1092,1019L1096,1017L1100,1017L1103,1016L1107,1017L1111,1017L1114,1018L1118,1019L1122,1019L1125,1020 M1125,1020L1123,1016L1121,1012L1121,1007L1119,1003L1119,998L1118,993L1119,989L1119,984L1121,980L1122,975L1122,970L1122,966L1126,963L1128,958L1129,954L1131,949 M1131,949L1128,944L1125,938L1122,933L1121,926L1118,920L1117,914L1115,907L1117,901 M1089,663L1095,663L1101,662L1108,662L1114,661L1120,661L1127,659L1133,660L1139,662 M1139,662L1144,656L1146,650L1150,644L1154,639 M1154,639L1148,638L1143,635L1137,631L1132,628L1127,624L1123,618L1118,615L1113,612 M1144,1033L1141,1028L1136,1025L1130,1023L1125,1020 M1126,720L1126,716L1126,712L1126,708L1124,705L1126,701L1127,697L1127,693L1128,690L1130,686L1131,683L1133,679L1134,676L1136,673L1137,669L1138,665L1139,662 M1141,349L1145,344L1151,341L1157,339L1164,339L1170,337L1175,333L1181,330L1186,328 M1186,328L1186,324L1187,321L1188,317L1188,313L1189,310L1190,306L1191,302L1191,299L1190,295L1187,292L1186,289L1186,285L1184,281L1184,278L1184,274L1183,270L1182,267L1180,264L1179,260L1178,257L1176,253L1174,251L1172,247L1171,244L1171,240L1171,236L1170,233L1168,230L1166,227L1165,223L1163,220L1163,216 M1154,639L1159,638L1162,636L1166,634L1169,631L1173,631L1178,631L1182,630L1186,629 M1186,629L1185,626L1185,622L1185,618L1186,615L1185,611L1184,608L1182,604L1181,601L1183,598L1183,594L1183,591L1183,587L1184,584L1185,580L1185,577L1185,573L1186,569L1186,566L1187,562L1187,559L1186,555L1185,551L1185,548L1184,544L1185,541L1188,538L1189,535L1189,531L1191,528L1191,524L1193,521L1195,518 M1195,518L1191,519L1187,519L1183,518L1180,517L1176,516L1173,514L1169,512L1166,510L1163,507L1160,505L1157,503L1153,501L1151,498L1148,496L1145,494L1141,492 M1144,750L1150,752L1156,753L1162,754L1169,754L1175,753L1181,754L1188,754L1194,756 M1194,756L1198,756L1202,756L1206,755L1211,755L1215,754L1219,755L1223,756L1227,758L1231,757L1235,754L1239,753L1243,752L1247,750L1251,749L1255,748L1259,747 M1215,648L1211,645L1207,643L1205,640L1202,636L1198,634L1193,634L1189,632L1186,629 M1220,985L1221,981L1222,978L1225,975L1227,971 M1227,971L1221,969L1215,966L1211,961L1205,958L1199,957L1193,955L1188,951L1182,948L1175,948L1168,948L1163,945L1156,943L1150,945L1144,949L1138,948L1131,949 M1227,971L1228,965L1229,960L1231,954L1233,949L1235,943L1238,938L1240,932L1244,928L1250,925L1255,921L1260,920L1265,916L1269,912L1274,908L1278,904L1281,898 M1281,898L1277,895L1274,894L1270,892L1266,890L1262,889L1258,889L1254,889L1250,887L1246,885L1242,884L1239,882L1234,882L1230,881L1226,881L1222,880L1218,879L1214,879L1210,879L1206,878L1202,877L1198,878L1193,878L1189,879L1186,881L1182,880L1178,877L1174,877L1170,876L1166,877L1161,876L1157,875L1153,875 M1153,875L1150,876L1146,875 M1138,486L1140,480L1143,474L1147,469L1150,463L1154,458L1158,453L1163,450L1167,445L1172,441L1178,437L1182,433L1187,429L1190,423L1193,418L1197,413L1201,408 M1201,408L1202,402L1202,397 M1202,397L1198,394L1195,390L1191,389L1186,387L1183,384L1178,382L1174,381L1169,379L1166,376L1162,372L1161,368L1158,364L1154,362L1150,359L1146,356L1142,353 M1186,328L1193,327L1199,326L1205,323L1210,321L1217,319L1222,317L1229,317L1235,315 M1235,315L1236,312L1239,309L1242,307L1245,305L1247,301L1249,298L1249,294L1250,290 M1153,875L1156,872L1159,869L1162,866L1164,863L1166,859L1168,855L1169,851L1170,847L1172,844L1174,840L1174,836L1175,832L1178,829L1182,827L1184,823L1186,820L1187,816L1188,812L1187,808L1188,804L1188,800L1188,796L1189,792L1190,788L1191,784L1191,780L1190,776L1189,772L1191,768L1192,764L1193,760L1194,756 M1264,1095L1268,1095L1272,1094L1275,1093L1279,1093L1283,1092L1287,1092L1290,1091L1294,1091L1298,1090L1302,1089L1306,1089L1310,1088L1313,1086L1317,1084L1320,1082L1323,1080L1327,1079L1330,1077L1333,1075L1337,1073L1340,1070L1342,1067L1345,1065L1349,1063L1353,1063L1356,1062L1360,1060L1364,1059L1367,1059L1371,1059L1375,1057L1379,1056 M1316,884L1312,886L1307,888L1304,892L1300,895L1295,895L1290,896L1285,896L1281,898 M1255,120L1257,113L1258,107L1260,100L1263,94 M1263,94L1260,88L1258,82L1254,76L1253,69L1250,63L1246,58L1245,51L1243,44L1239,39L1235,33L1233,30L1231,27L1228,25L1225,23L1223,21L1221,17L1220,14L1220,10L1219,4L1217,-3 M1195,518L1201,516L1207,515 M1207,515L1211,513L1213,511L1216,508L1218,506L1221,503L1223,501L1227,499L1230,498L1234,497L1236,494L1239,492L1242,490L1244,487L1247,485L1249,482L1250,478 M1250,478L1248,474L1246,470L1246,465L1247,461 M1247,461L1243,459L1239,457L1236,453L1232,451L1229,448L1226,444L1224,441L1220,438L1218,434L1218,429L1216,425L1214,421L1211,417L1207,415L1204,411L1201,408 M1258,608L1261,603L1264,598L1264,592L1267,587L1270,582L1273,577L1276,572L1278,567 M1278,567L1274,563L1271,558L1266,555L1261,552L1256,549L1251,546L1246,545L1240,544L1237,540L1233,536L1230,530L1227,526L1221,524L1216,522L1212,518L1207,515 M1202,397L1207,394L1211,394L1215,391L1220,390 M1220,390L1224,386L1226,382L1230,379L1234,376 M1234,376L1236,370L1237,363L1242,358L1247,354 M1247,354L1246,349L1247,344L1245,339L1243,334L1241,329L1239,325L1237,320L1235,315 M1250,478L1254,476L1258,475L1262,475L1266,474L1269,476L1274,476L1278,475L1282,475 M1282,475L1286,470L1291,467L1294,461L1298,456L1302,451L1304,445L1308,441L1310,435L1311,429L1314,423L1315,417L1317,411L1317,405L1318,399L1319,393L1320,387 M1320,387L1316,386L1312,386L1309,384L1305,384L1301,384L1297,384L1293,383L1290,383 M1290,383L1286,387L1282,391L1279,396L1274,400L1269,403L1266,407L1261,411L1257,415 M1257,415L1257,420L1255,424L1252,427L1250,430 M1250,430L1248,434L1247,438L1248,442L1249,446L1249,450L1247,453L1247,457L1247,461 M1263,94L1268,93L1271,89L1276,86L1279,83L1283,80L1287,77L1290,73L1293,69L1298,68L1303,66L1307,64L1311,60L1315,58L1319,54L1323,52L1328,51L1332,47L1334,43L1338,40L1342,36L1346,33L1349,30L1351,25L1354,21L1358,19L1363,17L1367,13L1371,11L1374,7L1377,2L1379,-2L1382,-6 M1250,430L1244,427L1239,423L1234,419L1230,413L1228,408L1225,402L1223,395L1220,390 M1257,415L1255,410L1251,405L1249,400L1248,394L1244,390L1241,384L1237,381L1234,376 M1290,383L1283,381L1277,378L1272,374L1268,369L1262,366L1258,361L1252,358L1247,354 M1367,649L1364,644L1362,640L1361,635L1360,630L1358,625L1356,621L1351,618L1348,614 M1348,614L1341,613L1335,611 M1335,611L1330,616 M1324,623L1320,626L1317,630L1314,632L1311,636 M1320,387L1323,385L1326,383L1330,381L1333,379L1336,378L1340,377L1344,376L1348,376 M1348,376L1347,371L1345,367L1342,363L1339,359L1336,355L1334,351L1332,347L1330,342L1329,338L1327,333L1325,329L1322,325L1320,321L1318,316L1317,312L1315,307 M1325,278L1327,275L1329,272L1332,271L1336,269 M1336,269L1337,262L1337,256L1337,249L1338,243L1340,237L1340,230L1343,224L1343,218 M1335,611L1330,606L1328,600L1326,593L1324,587 M1324,587L1321,582L1318,577L1314,573L1309,569 M1309,569L1305,569L1301,569L1297,570L1293,570L1289,570L1285,570L1281,569L1278,567 M1309,569L1310,565L1312,561L1313,557L1314,553L1317,550L1319,546L1321,543L1324,539L1324,535L1324,531L1326,527L1327,523L1328,519L1327,514L1328,510L1330,506 M1330,506L1327,501L1325,497L1321,493L1316,491L1312,488L1307,485L1302,483L1297,481 M1297,481L1293,479L1289,479L1286,476L1282,475 M1330,506L1335,505L1340,504L1346,504L1351,504 M1351,504L1355,500L1360,497L1366,496L1372,495 M1372,495L1374,491L1376,487L1378,483L1380,479L1382,475L1383,470L1384,465L1386,461L1384,457L1383,452L1382,447L1381,443L1381,438L1382,434L1382,429L1381,424 M1381,424L1378,420L1375,416 M1375,416L1371,420L1368,426L1362,429L1357,433L1353,439L1350,444L1344,447L1339,451L1334,456L1328,459L1321,459L1315,462L1311,468L1308,473L1302,477L1297,481 M1327,1174L1332,1175L1337,1176L1342,1176L1348,1175L1353,1174L1358,1175L1363,1173L1368,1172L1372,1168L1376,1164L1380,1162L1385,1159L1389,1157L1394,1154L1399,1152L1403,1150 M1375,416L1375,411L1375,405L1373,401L1371,396L1368,392L1366,388L1364,383L1361,380 M1361,380L1354,379L1348,376 M1437,822L1438,817L1439,812L1439,807L1439,802L1441,797L1442,792L1445,788L1448,784 M1449,779L1451,773L1452,766L1453,759L1454,753L1454,746L1452,740L1451,733L1452,726L1456,721L1460,716L1463,710L1466,704L1469,698L1473,692L1475,686L1477,680 M1477,680L1472,679L1467,677L1462,674L1457,673L1452,671L1447,669L1441,669L1436,666 M1436,666L1431,668L1426,668L1421,670L1415,670 M1361,380L1366,377L1370,372 M1422,334L1427,331L1432,327L1436,323L1441,320L1446,318L1451,314L1456,311L1459,306 M1459,306L1455,305L1452,303L1448,301L1444,301L1440,298L1437,296L1434,293L1430,291L1426,290L1422,288L1418,287L1415,285L1411,286L1406,287L1402,286L1398,285L1394,284L1390,283L1386,282L1382,281L1379,280L1374,280L1370,280L1366,278L1363,276L1359,275L1355,273L1352,272L1347,271L1343,271L1339,270L1336,269 M1352,129L1353,123L1355,116L1358,111L1361,105L1361,99L1363,93L1364,86L1367,80L1371,75L1374,70L1378,64L1383,60L1385,54L1388,48L1390,42L1390,35 M1390,35L1389,30L1388,25L1387,20L1388,14L1389,9L1388,4L1385,-1L1383,-6 M1287,1447L1288,1444L1290,1441L1292,1438L1295,1435L1297,1432L1299,1430L1301,1426L1303,1423L1304,1420L1304,1416L1305,1413L1307,1409L1308,1406L1309,1403L1312,1400L1313,1397 M1336,1354L1337,1350L1339,1347L1341,1343L1343,1340 M1358,1312L1359,1308L1360,1304L1362,1301L1364,1297L1366,1294L1367,1290L1371,1288L1373,1284L1376,1281L1377,1277L1380,1274L1382,1271L1383,1267L1384,1263L1386,1259L1388,1256 M1377,1243L1371,1243L1365,1243L1360,1245L1354,1246L1349,1248L1343,1248L1338,1249L1333,1251L1327,1253L1321,1253L1316,1254L1310,1255L1304,1254L1299,1253L1293,1253L1287,1251 M1324,587L1327,586L1330,585L1333,582L1336,580L1339,578L1342,578L1345,576L1348,574L1350,570L1352,567L1353,564L1354,561L1357,559L1361,557L1363,554L1365,551 M1365,551L1362,546L1358,541L1356,535L1353,530L1353,523L1352,517L1351,511L1351,504 M1390,35L1393,41L1396,47L1400,52L1405,57L1407,63L1408,69L1411,75L1413,82L1414,88L1416,94L1418,100L1420,107L1424,112L1429,116L1432,122L1437,127 M1437,127L1441,125L1445,122L1449,119L1452,115L1456,113L1461,113L1465,111L1469,109L1473,107L1477,104L1481,101L1485,98L1488,95L1492,92L1495,89L1499,86 M1499,86L1499,81L1498,76 M1498,76L1495,72L1492,68L1491,64L1489,60L1486,57L1482,55L1479,51L1475,49L1471,47L1467,46L1463,43L1460,40L1456,38L1453,35L1450,32L1447,28L1444,25L1441,22L1437,20L1433,18L1430,14L1427,12L1423,9L1420,6L1415,5L1411,3L1407,3L1403,1L1399,-1L1394,-2L1390,-4L1387,-6 M1393,1366L1395,1360L1398,1354L1400,1349L1401,1343L1402,1336L1401,1330L1401,1324L1402,1318L1404,1312L1405,1306L1405,1300L1403,1294L1405,1288L1405,1281L1403,1276L1402,1269 M1436,666L1434,661L1432,655L1428,651L1426,646L1424,640L1422,635L1419,630L1417,624 M1417,624L1412,621L1409,615L1404,612L1398,610L1392,608L1387,606L1381,604L1375,603 M1375,603L1372,605L1369,606L1365,608L1362,610L1359,611L1355,612L1351,613L1348,614 M1609,760L1606,757L1603,754L1602,750L1601,745L1598,742L1596,739L1593,736L1590,732 M1563,693L1561,687L1557,682L1555,676L1553,671L1548,668L1543,664L1541,658L1536,654 M1536,654L1532,655L1528,657L1524,657L1520,658L1517,660L1513,661L1509,661L1505,663 M1505,663L1502,665L1498,667L1494,668L1489,668L1486,671L1483,674L1480,677L1477,680 M1381,424L1385,426L1389,428L1393,430L1397,433L1401,433L1406,434L1410,435L1415,435L1419,435L1424,437L1428,439L1431,442L1436,441L1440,441L1445,442L1449,442 M1479,299L1479,299 M1479,299L1474,299L1469,301L1464,303L1459,306 M1375,603L1379,599L1382,595L1385,591L1389,587L1391,582L1393,578L1395,573L1398,568 M1398,568L1394,566L1390,563L1386,560L1383,556L1379,554L1374,554L1370,552L1365,551 M1398,568L1402,566L1405,564 M1405,564L1408,558L1410,552 M1410,552L1409,546L1409,539L1408,533L1404,527L1402,521L1398,516L1396,510L1393,505 M1393,505L1387,504L1381,503L1377,499L1372,495 M1479,299L1480,293L1480,287L1477,282L1475,276L1475,270L1475,264L1478,258L1481,253 M1481,253L1479,249L1477,245L1476,241L1476,237L1475,233L1475,228L1474,224L1472,221 M1472,221L1468,217L1466,212L1462,209L1457,207 M1417,624L1418,620L1421,616L1422,611L1424,607L1427,603L1431,600L1432,595L1434,591 M1434,591L1429,590L1425,587L1423,582L1418,579L1415,575L1412,571L1408,568L1405,564 M1393,505L1396,503L1399,500L1403,498L1407,497L1411,496L1415,496L1419,496L1423,496L1427,495L1430,494L1434,493L1438,493L1442,490L1445,488L1449,486L1452,485 M1434,155L1436,152L1435,148L1435,145L1434,141L1435,138L1434,134L1435,131L1437,127 M1505,663L1504,657L1501,652L1498,647L1494,643L1488,641L1483,638L1479,634L1475,630L1471,626L1467,621L1465,616L1461,612L1461,606L1459,601L1456,596L1453,591 M1453,591L1448,590L1444,591L1439,591L1434,591 M1410,552L1416,552L1422,552L1428,552L1433,551L1438,548L1443,546L1448,542L1454,541 M1453,591L1454,586L1456,581L1459,576L1462,572L1464,567L1467,562L1468,557L1471,552 M1554,521L1557,526L1561,531L1565,535L1569,540L1574,543L1580,544L1584,549L1589,553 M1472,221L1474,215L1476,210L1481,206L1485,201L1488,196L1489,190L1493,185L1496,181L1501,177L1506,174L1511,171L1517,170L1520,165L1525,161L1530,158L1535,155 M1535,155L1535,151L1535,146L1534,141L1535,137L1537,133L1540,129L1541,124L1542,120 M1542,120L1535,117L1530,113L1527,112L1523,111L1521,108L1518,106L1512,102L1508,96L1503,91L1499,86 M1536,654L1537,649L1539,645L1542,641L1545,637L1547,633L1549,628L1550,624L1553,619L1554,615L1556,610L1559,606L1562,603L1566,600L1569,596L1572,592L1574,588 M1481,253L1484,252L1489,252L1493,252L1497,253L1500,252L1504,250L1508,248L1512,248L1515,246L1519,243L1522,242L1526,241L1530,239L1533,237L1537,236L1540,234L1543,231L1547,229L1550,227L1554,225L1558,224L1562,223L1566,222L1570,222L1574,222L1578,221L1582,222L1586,222L1590,222L1594,221L1597,219L1601,218 M1601,218L1603,212L1603,205L1601,198L1601,192 M1601,192L1597,187L1594,182L1590,178L1586,174 M1586,174L1580,172L1573,170L1566,169L1560,166L1554,163L1548,161L1542,158L1535,155 M1593,303L1597,302L1600,301L1604,299L1607,297L1610,296L1614,294L1616,291L1619,288 M1619,288L1622,282 M1622,282L1623,276L1626,270 M1629,257L1630,252L1632,248 M1632,248L1629,243L1625,240L1621,236L1618,231L1613,229L1608,226L1605,222L1601,218 M1659,-6L1664,-2L1670,2L1673,8L1677,13L1684,16L1690,17L1696,21L1701,24L1705,30L1709,35L1712,41L1714,48L1718,53L1719,60L1725,63L1729,69 M1729,69L1735,68L1739,65L1744,62L1749,60L1754,59L1759,59L1765,59L1770,59 M1770,59L1774,54L1776,47L1781,42L1785,38 M1498,76L1501,70L1505,65L1509,60L1514,57L1520,54L1525,50L1528,45L1532,40L1533,33L1534,27L1535,21L1538,15L1542,10L1545,5L1549,-0L1552,-6 M1542,120L1546,117L1549,113L1554,111L1557,107L1562,105L1566,103L1571,101L1574,97 M1574,97L1576,93L1578,89L1580,86L1582,83L1584,79L1588,76L1590,73L1591,69L1593,66L1596,63L1598,59L1601,56L1604,53L1606,50L1609,47L1610,43 M1610,43L1612,37L1614,31L1614,24L1614,18L1616,12L1616,5L1619,-0L1622,-6 M1610,43L1610,50L1612,56L1614,63L1618,68L1619,75L1621,81L1624,87L1625,93L1629,99L1631,105L1632,112L1635,118L1639,124L1641,130L1646,134L1651,139 M1651,139L1656,138L1661,137L1666,137L1672,137L1677,136L1682,137L1687,138L1693,138 M1693,138L1693,134L1694,131L1696,127L1698,124 M1698,124L1697,120L1696,115L1696,111L1696,107L1694,103L1693,99L1692,94L1691,90L1687,87L1683,85L1681,81L1679,77L1676,73L1675,69L1673,65L1672,61L1671,56L1672,52L1672,48L1670,44L1668,40L1667,36L1666,31L1664,28L1663,23L1661,19L1661,15L1659,11L1659,7L1659,3L1659,-2L1658,-6 M1586,174L1588,169L1588,164L1591,160L1593,156L1598,153L1601,149L1603,145L1606,141 M1606,141L1604,138L1603,134L1601,131L1598,129L1595,127L1592,126L1590,123L1587,121L1583,115L1579,110L1577,103L1574,97 M1654,322L1651,316L1646,312L1641,309L1636,305L1632,301L1628,296L1624,292L1619,288 M1606,141L1611,141L1617,142L1622,140L1627,139L1633,139L1638,140L1643,141L1649,141 M1649,141L1651,139 M1601,192L1605,188L1611,185L1614,181L1618,176L1622,173L1628,171L1634,169L1639,170 M1639,170L1641,166L1643,163L1644,159L1645,155L1646,152L1648,149L1648,145L1649,141 M1921,525L1920,522L1919,518L1919,514L1918,511L1918,507L1917,504L1916,500L1915,497L1912,494L1909,492L1907,489L1906,485L1904,482L1904,478L1901,475L1899,472 M1899,472L1895,469L1890,467L1885,465L1880,463 M1880,463L1874,462L1869,463L1864,465L1859,468 M1632,248L1639,246L1645,246L1652,244L1658,242L1664,239L1668,233L1673,229L1680,228 M1680,228L1679,223L1677,219L1673,216L1671,212L1669,208L1668,204L1666,200L1664,196L1660,193L1655,192L1652,188L1649,185L1648,181L1646,177L1642,173L1639,170 M1664,312L1666,309L1669,306L1672,303L1673,300L1676,297L1679,295L1681,292L1684,290 M1684,290L1678,288L1671,285L1665,285L1658,287 M1658,287L1653,286L1649,286L1644,285L1640,283L1635,285L1631,285L1626,284L1622,282 M1680,228L1685,227L1690,227 M1690,227L1694,226 M1694,226L1697,222L1699,219L1702,216L1706,214L1709,211L1712,208L1714,204L1717,202 M1717,202L1720,199L1721,195L1723,192L1723,188 M1723,188L1722,182L1719,176 M1719,176L1715,172L1713,166L1708,163L1704,159L1700,154L1696,150L1695,144L1693,138 M1701,320L1704,317L1705,312L1704,308L1704,304 M1704,304L1701,300L1699,295L1694,292L1691,288 M1691,288L1684,290 M1691,288L1690,284L1690,280L1689,276L1688,272L1690,269L1692,265L1693,261L1693,258L1693,254L1692,250L1691,246L1690,243L1691,239L1692,235L1691,231L1690,227 M1704,304L1711,301L1717,298 M1717,298L1717,293L1719,289L1721,284L1724,280L1723,275L1722,270L1723,265L1724,261 M1724,261L1719,258L1714,254L1709,251L1705,247L1704,241L1701,236L1698,230L1694,226 M1758,381L1763,377L1767,374L1769,368L1773,362L1779,360L1785,359L1790,356L1795,353 M1795,353L1795,353 M1795,353L1795,347 M1795,347L1791,343L1787,340L1783,336L1780,332 M1780,332L1774,332L1769,332L1764,334L1760,336L1755,338L1750,339L1745,341L1740,342 M1733,336L1736,331L1741,327L1745,321L1745,315 M1745,315L1744,311L1743,307L1743,303L1744,299 M1744,299L1737,300L1730,300L1727,300L1723,300L1720,299L1717,298 M1719,176L1721,173L1723,170L1725,166L1726,163L1730,161L1733,159L1735,156L1738,153L1741,150L1744,148L1747,145L1749,142L1751,139L1753,135L1755,132L1755,128 M1755,128L1752,125L1747,123L1744,121L1739,119L1735,116L1733,112L1729,109L1725,107 M1725,107L1721,108L1718,111L1714,113L1710,114L1707,116L1704,119L1701,122L1698,124 M1744,299L1749,297L1752,293L1755,288L1757,283 M1757,283L1756,279L1754,275 M1754,275L1750,274L1746,272L1743,269L1740,266L1736,265L1733,262L1729,261L1724,261 M1754,275L1755,271L1756,267L1758,263L1762,260L1762,256L1764,252L1766,248L1767,243 M1767,243L1763,241L1759,239L1755,239L1750,239L1746,237L1743,235L1740,232L1737,229L1734,225L1732,222L1731,217L1730,213L1728,209L1725,206L1721,204L1717,202 M1725,107L1727,103L1729,98L1733,95L1736,91 M1736,91L1736,85L1734,79L1731,75L1729,69 M1780,332L1777,327 M1777,327L1773,326L1769,325L1764,325L1760,323L1756,322L1752,320L1748,318L1745,315 M1777,327L1777,323L1778,318L1777,314L1777,310 M1777,310L1775,303L1771,298L1769,292L1767,286 M1767,286L1762,286L1757,283 M1723,188L1727,188 M1727,188L1730,187L1734,184L1736,181L1740,179L1744,179L1748,178L1752,177L1755,176L1759,175L1763,172L1766,171L1770,171L1774,170L1778,171L1782,169L1786,168 M1786,168L1790,164L1792,159L1793,153L1796,148L1797,142L1798,137L1799,131L1798,126 M1798,126L1795,123L1793,121L1790,119L1787,116 M1787,116L1786,116 M1786,116L1783,118L1779,120L1775,122L1771,124L1767,125L1763,126L1759,127L1755,128 M1767,286L1773,285L1777,281L1782,280L1786,276L1792,276L1797,275L1803,274L1808,274 M1808,274L1809,270L1809,265L1809,261L1808,256 M1808,256L1803,256L1799,254L1794,252L1790,251L1786,247L1782,245L1778,244L1773,242 M1773,242L1767,243 M1786,116L1784,113L1782,111L1779,108L1777,105L1775,102L1772,99L1770,97L1766,95 M1766,95L1762,95L1758,94L1755,92L1752,90L1748,90L1744,90L1740,91L1736,91 M1766,95L1766,91L1765,86L1766,82L1766,77L1768,73L1769,68L1769,64L1770,59 M1787,116L1789,112L1791,108L1795,104L1797,100L1798,96L1799,91L1800,86L1801,82L1803,77L1805,73L1807,69L1808,64L1808,59L1807,55L1808,50L1809,45 M1773,242L1774,239L1774,235L1776,232L1778,229L1780,225L1782,222L1783,219L1785,216 M1785,216L1781,214L1778,212L1774,209L1770,208L1766,208L1762,208L1758,206L1754,206L1750,204L1747,201L1744,199L1740,197L1737,195L1734,192L1730,190L1727,188 M1827,421L1828,419 M1828,419L1826,414L1825,410L1822,406L1819,402L1817,398L1816,393L1815,389L1815,384L1813,380L1812,375L1809,372L1807,367L1805,363L1801,360L1799,356L1795,353 M1795,347L1797,343L1800,340L1803,337L1806,334L1809,331L1812,327L1813,323L1816,320 M1816,320L1816,314L1817,308L1815,303L1814,297 M1814,297L1810,299L1805,300L1800,301L1796,303L1792,306L1787,308L1782,310L1777,310 M1785,216L1789,213L1795,212 M1795,212L1796,208L1796,205L1798,202L1800,199L1800,195L1801,192L1802,188L1803,185 M1803,185L1798,181L1795,175L1791,171L1786,168 M1814,297L1816,291L1816,285 M1816,285L1813,279L1808,274 M1808,256L1811,251 M1811,251L1811,247L1811,243L1809,239L1808,235L1808,231L1806,227L1803,224L1802,220 M1802,220L1799,215L1795,212 M1798,126L1802,125L1805,125L1809,125L1813,125L1817,126L1821,126L1824,127L1828,128L1832,127L1835,127L1839,125L1842,124L1845,122L1849,121L1853,120L1857,121 M1857,121L1859,119 M1859,119L1860,115L1862,112L1865,110L1867,107L1868,104L1869,100L1871,98L1873,94L1873,91L1873,87L1872,84L1872,80L1873,77L1874,74L1875,70L1876,67 M1811,251L1816,249L1821,247L1825,243L1830,241 M1830,241L1834,238L1837,234L1839,230L1840,226L1839,222L1839,217L1840,212L1842,208 M1842,208L1837,208L1832,210L1827,211L1822,213L1816,214L1811,214L1806,217L1802,220 M1842,208L1845,205 M1845,205L1842,201L1840,197L1839,193L1838,189 M1838,189L1833,189L1829,187L1824,187L1820,189L1816,189L1811,188L1807,186L1803,185 M1816,285L1822,284L1829,282L1835,280L1842,279L1849,280L1854,284L1861,283L1868,285 M1868,285L1867,281L1865,277L1863,274L1863,270L1861,266L1858,263L1857,259L1857,255 M1857,255L1854,253L1850,251L1848,248L1845,245L1841,244L1838,242L1834,242L1830,241 M1838,189L1840,184L1842,179L1843,174L1845,170L1847,165L1851,162L1853,157L1854,152 M1854,152L1854,148L1853,144L1853,140L1853,136L1855,133L1856,129L1856,125L1857,121 M1795,353L1800,353L1804,353L1808,355L1811,356L1815,354L1819,354L1824,355L1828,353L1831,355L1835,357L1839,358L1843,358L1847,358L1851,359L1855,360L1859,361 M1859,361L1859,357L1860,353L1859,349L1858,345L1857,341L1856,337L1856,333L1856,329 M1856,329L1851,328L1846,327L1841,326L1835,327L1831,324L1826,322L1821,321L1816,320 M1880,463L1881,457L1883,451L1886,446L1888,440L1890,435L1891,429L1892,423L1894,418L1897,413L1901,408L1904,403L1909,399L1914,397L1919,394L1923,389L1927,385 M1927,385L1923,384L1920,383L1916,383L1913,384L1909,383L1906,382L1902,381L1898,381L1895,381L1891,381L1888,380L1884,380L1880,381L1877,380L1874,378L1870,378 M1870,378L1869,382L1868,386L1866,389L1864,392L1862,395L1859,398L1856,401L1853,403L1850,404L1846,406L1843,407L1839,409L1836,411L1834,415L1831,417L1828,419 M1870,378L1866,375L1863,370L1862,365L1859,361 M1859,119L1865,123L1870,127L1876,131L1880,136L1883,138L1886,140L1889,143L1892,144L1895,145L1899,146L1902,147L1905,147L1909,149L1912,150L1915,152L1918,154L1922,155L1925,154L1929,155L1932,156L1935,158L1937,161L1940,163L1943,165L1945,168L1947,170L1950,172L1953,174 M1856,329L1857,324L1859,319L1862,315L1864,310L1868,307L1871,302L1875,299L1879,295 M1879,295L1876,290 M1876,290L1873,287L1868,285 M1845,205L1849,207L1853,209L1858,210L1862,210L1866,213L1870,215L1875,216L1880,217 M1880,217L1886,216L1892,214L1899,213L1905,215 M1907,204L1904,200L1901,197L1900,192L1898,187L1895,184L1892,180L1889,176L1885,174L1881,171L1877,169L1874,165L1871,161L1867,158L1863,156L1859,154L1854,152 M1857,255L1859,250L1859,244L1862,239L1864,233L1869,230L1872,225L1875,221L1880,217 M1876,290L1878,286L1880,282L1883,279L1886,275L1889,272L1892,268L1894,264L1896,261L1900,257L1902,254L1905,250L1907,246L1907,241L1908,237L1910,232L1912,228 M1927,385L1931,383L1936,382L1941,381L1946,379 M1923,315L1918,312L1911,311L1907,307L1902,303L1896,302L1890,299L1884,298L1879,295 M1899,472L1906,470L1912,469L1919,469L1925,470L1932,468L1938,468L1945,466L1951,466 M1973,463L1977,461L1980,461L1984,461L1988,461L1991,461L1995,460L1998,460L2002,459" fill="none" stroke="#5c5c64" stroke-width="2" stroke-linejoin="round"/><path d="M91.5,19.8L92.8,23.1L93.5,26.5L98.8,29.2L103.5,33.0L107.0,32.0L110.4,30.9L113.9,29.7L117.1,28.2L120.6,26.9L123.9,25.4L126.9,23.5L130.0,21.5L127.2,19.5L124.2,17.8L121.5,15.7L118.5,14.0L119.1,10.5L119.0,7.0L118.9,3.5L118.5,0.0L114.4,0.2L110.4,0.0L106.3,0.7L102.2,0.9L98.2,0.7L94.1,0.2L90.1,0.5L86.0,0.0L86.7,3.4L87.3,6.8L88.1,10.2L88.5,13.6L90.1,16.7L91.5,19.8ZM856.6,15.0L862.5,15.3L868.2,16.5L874.0,15.2L879.9,15.0L882.0,18.6L884.5,22.0L890.1,23.6L896.0,24.0L898.8,28.7L902.5,32.7L906.3,36.6L910.0,40.6L911.4,37.5L913.3,34.7L915.0,31.7L917.0,29.0L921.9,26.1L927.2,24.2L931.3,20.3L936.0,17.0L941.5,15.8L947.0,15.0L950.4,16.7L953.6,18.7L956.5,21.2L959.0,24.0L963.8,26.0L968.0,29.0L971.5,25.0L975.0,21.0L978.0,21.8L981.0,22.6L983.9,23.5L987.0,24.0L990.5,24.1L994.0,23.6L997.5,22.9L1001.0,23.0L1003.8,25.6L1006.0,28.7L1008.1,31.7L1010.0,35.0L1015.0,32.4L1019.6,29.0L1023.5,25.9L1026.6,22.0L1026.8,16.5L1027.8,11.0L1028.2,5.5L1029.0,0.0L992.2,0.0L988.2,0.8L982.4,1.4L976.6,0.4L975.3,0.0L905.6,0.0L900.8,0.5L895.0,1.5L889.3,2.7L883.4,3.2L877.6,2.8L871.7,2.3L865.9,1.5L860.1,1.8L854.2,1.7L848.4,0.7L842.6,0.0L844.2,2.6L846.3,4.8L848.2,7.3L849.6,10.0L852.9,12.7L856.6,15.0ZM415.9,21.2L413.3,24.5L410.0,27.1L413.6,30.3L416.4,34.1L420.0,37.0L423.3,40.4L428.4,37.3L433.2,33.7L432.7,29.6L431.5,25.6L431.5,21.4L431.6,17.2L431.6,13.0L431.6,8.8L430.8,4.7L429.9,0.6L424.1,0.0L423.8,0.0L415.7,0.0L412.6,0.4L406.7,0.6L410.0,4.0L414.0,6.6L417.4,9.9L420.0,13.9L418.3,17.7L415.9,21.2ZM323.3,20.5L327.2,22.2L330.1,25.2L332.9,28.3L335.3,31.7L337.2,35.4L341.4,36.8L345.5,38.6L349.8,39.8L353.7,42.0L359.5,42.8L365.4,42.3L371.1,43.6L376.9,43.7L380.2,44.0L383.6,43.7L386.8,43.1L390.2,43.0L386.4,40.3L383.4,36.9L380.5,33.3L376.9,30.4L381.5,28.9L385.8,26.5L389.4,23.1L393.5,20.5L396.9,19.1L400.5,17.9L403.4,15.6L406.7,13.9L405.7,10.6L405.4,7.2L404.6,3.8L403.4,0.6L397.8,1.1L392.2,1.4L386.6,0.8L381.0,0.2L375.4,1.0L369.8,1.3L364.3,1.8L358.7,2.6L353.2,3.7L347.5,4.2L341.9,3.9L336.2,3.9L330.7,2.9L325.0,2.9L319.6,1.5L314.0,0.6L313.6,3.9L313.2,7.3L312.7,10.5L312.3,13.9L315.6,16.6L319.3,18.9L323.3,20.5ZM521.3,21.0L522.0,24.0L522.0,29.9L522.4,35.8L524.2,41.4L526.0,47.0L529.5,49.2L532.6,52.0L535.9,48.2L539.1,44.3L542.3,40.5L546.0,37.0L549.2,34.4L552.1,31.5L555.6,29.3L559.0,27.0L561.7,25.8L564.4,24.3L567.2,23.2L570.1,22.4L573.1,21.8L576.0,20.8L579.0,20.7L582.0,20.5L584.7,18.8L587.3,16.9L590.4,15.8L593.4,14.6L596.5,13.8L599.6,12.9L602.6,11.9L605.5,10.5L609.4,10.3L613.1,9.5L617.0,9.5L620.8,9.6L624.6,9.0L628.5,8.6L632.2,7.6L636.0,7.0L638.9,8.1L641.9,8.9L644.6,10.4L647.5,11.6L650.1,13.2L652.9,14.5L655.7,15.8L658.6,17.0L660.9,19.0L663.5,20.7L665.7,22.9L668.0,25.0L670.5,26.8L673.0,28.6L675.7,30.2L678.5,31.5L680.4,27.7L681.8,23.7L683.8,19.9L685.8,16.2L687.2,12.1L688.2,8.0L689.6,4.0L691.0,0.0L685.7,0.8L680.3,1.2L674.9,1.7L669.6,3.0L664.2,2.9L658.8,3.0L653.4,2.3L648.0,1.8L642.6,1.3L637.3,0.4L631.9,0.3L626.5,0.9L621.1,0.9L615.7,0.5L610.4,0.3L607.4,0.0L567.8,0.0L567.4,0.1L562.0,0.8L556.6,0.9L551.2,0.2L545.9,0.7L540.5,1.2L535.1,1.4L529.7,0.8L524.4,0.5L519.0,0.0L519.5,3.0L519.6,6.1L519.6,9.2L519.0,12.2L519.9,15.1L521.1,17.9L521.3,21.0ZM1100.3,26.3L1102.7,30.2L1105.8,33.6L1101.1,35.8L1096.5,38.3L1097.7,41.2L1099.0,44.0L1100.1,47.0L1101.1,49.9L1104.9,54.4L1108.1,59.2L1109.7,62.8L1110.8,66.6L1112.6,70.1L1115.1,73.2L1118.5,74.2L1122.1,74.5L1125.6,74.1L1129.1,74.4L1131.4,69.1L1133.8,63.9L1135.9,59.9L1138.4,56.2L1139.2,51.8L1140.7,47.6L1138.4,45.2L1136.4,42.6L1133.9,40.4L1131.4,38.3L1132.6,34.7L1133.1,31.0L1134.4,27.6L1136.1,24.3L1140.4,20.3L1145.4,17.3L1150.1,17.4L1154.7,17.8L1159.4,17.6L1164.0,17.3L1162.9,11.5L1161.7,5.6L1159.4,0.5L1154.7,0.5L1152.2,0.0L1091.0,0.0L1090.6,0.1L1086.0,0.5L1088.3,5.2L1090.4,9.9L1092.2,14.8L1094.2,19.6L1097.4,22.9L1100.3,26.3ZM316.0,53.0L323.5,41.5L321.0,28.0L310.0,29.0L310.0,49.0L316.0,53.0ZM1145.8,54.8L1150.2,54.8L1153.7,53.6L1155.0,51.5L1153.7,49.4L1150.2,48.2L1145.8,48.2L1142.3,49.4L1141.0,51.5L1142.3,53.6L1145.8,54.8ZM3.5,178.0L7.2,177.1L11.0,176.5L14.7,172.7L19.0,169.5L22.9,165.9L26.0,161.5L30.4,161.7L34.8,162.1L39.1,161.6L43.5,161.5L46.6,164.1L50.0,166.4L53.5,168.5L56.9,170.8L60.7,172.4L64.0,174.8L67.5,176.9L71.0,179.0L75.0,183.2L78.2,188.0L82.2,192.2L86.0,196.5L89.1,196.8L92.2,197.2L95.4,197.3L98.5,197.4L101.6,198.3L104.7,198.7L107.8,198.9L111.0,199.0L116.3,201.3L122.0,202.7L127.8,203.0L133.5,204.0L137.1,201.2L141.0,199.0L142.4,195.0L143.7,190.9L144.8,186.8L146.3,182.8L147.3,178.7L148.9,174.7L149.8,170.6L151.0,166.5L149.2,163.6L146.9,161.1L145.3,158.1L143.8,155.1L142.0,152.2L139.8,149.6L137.7,146.9L136.0,144.0L134.1,139.9L131.7,136.0L129.3,132.1L127.6,127.9L124.7,124.4L122.4,120.4L119.3,117.1L116.0,114.0L113.3,110.0L110.7,106.0L108.6,101.7L106.8,97.2L104.2,93.2L101.0,89.7L98.8,85.4L96.0,81.5L95.2,77.0L93.6,72.7L92.4,68.3L91.0,64.0L88.6,62.0L86.1,60.2L83.4,58.5L81.0,56.5L77.6,51.7L75.0,46.5L74.1,49.7L73.8,53.0L72.7,56.2L71.0,59.0L67.3,59.4L63.5,59.5L59.8,59.2L56.0,59.0L52.4,54.4L47.9,50.8L44.4,46.2L41.0,41.5L39.9,38.5L39.5,35.3L39.4,32.1L38.5,29.0L41.2,25.5L44.5,22.5L47.7,19.5L51.0,16.5L52.0,12.4L52.0,8.2L51.3,4.2L51.0,0.0L47.6,0.5L44.1,0.8L40.6,0.9L37.1,0.7L33.7,0.2L31.2,0.0L10.4,0.0L9.8,0.1L7.6,0.0L2.0,0.0L0.0,0.1L0.0,178.5L3.5,178.0ZM56.0,308.7L53.3,310.0L50.7,313.6L48.1,317.1L45.3,320.6L42.1,323.7L41.2,326.9L40.4,330.2L38.6,332.9L37.2,336.0L37.4,339.8L37.6,343.5L37.8,347.3L38.4,351.0L39.5,355.3L40.7,359.5L41.0,364.0L40.9,368.4L42.4,371.4L43.9,374.5L46.1,377.1L48.4,379.6L50.5,381.9L53.1,383.7L55.6,385.4L58.3,387.0L62.1,389.4L65.8,392.0L65.5,395.1L65.6,398.2L64.9,401.3L64.5,404.4L68.8,407.5L73.2,410.6L73.8,415.6L74.4,420.6L76.8,423.5L78.7,426.8L80.5,430.1L83.0,433.0L85.4,435.0L87.8,437.0L90.3,438.9L93.0,440.5L97.2,442.0L101.2,444.0L105.4,445.6L109.2,448.0L111.5,450.8L113.0,454.0L116.0,457.8L119.3,461.4L121.9,465.4L123.9,469.8L126.4,474.0L129.1,478.0L131.7,482.0L133.5,486.5L136.4,488.8L139.6,490.6L142.7,492.5L146.0,494.0L150.2,491.1L154.4,488.3L158.8,486.0L163.5,484.0L160.7,481.8L158.1,479.4L156.0,476.6L153.5,474.0L154.7,469.1L155.2,464.1L156.2,459.1L156.0,454.0L158.0,451.3L159.8,448.5L161.9,445.9L164.0,443.3L165.9,440.6L168.3,438.2L170.9,436.1L173.5,434.0L179.2,434.3L184.8,435.4L190.3,434.2L196.0,434.0L200.4,436.6L204.5,439.5L208.3,442.8L212.6,445.5L217.5,447.0L222.0,449.3L226.6,451.4L231.0,454.0L234.9,456.7L239.0,459.0L239.3,454.0L240.4,449.0L239.5,444.1L239.7,439.0L235.9,437.8L232.1,436.3L228.6,434.3L224.8,433.0L221.1,429.4L218.2,425.2L214.7,421.4L212.0,417.0L209.1,415.6L206.3,413.9L203.5,412.2L200.7,410.7L197.9,409.0L194.8,407.8L191.7,407.0L188.7,405.7L189.0,401.8L190.0,398.0L190.6,394.6L190.7,391.2L191.3,387.8L192.5,384.6L189.2,382.8L186.0,380.6L182.8,378.5L180.0,375.9L176.6,374.6L173.5,372.7L170.3,370.9L167.6,368.4L162.6,366.2L158.0,363.2L153.0,361.1L147.7,359.7L142.9,358.4L138.1,357.5L133.5,355.5L129.0,353.5L125.6,352.7L122.2,352.2L118.8,351.6L115.4,351.0L112.1,349.4L109.3,347.2L106.1,345.4L103.0,343.6L102.3,340.1L101.6,336.7L100.1,333.4L99.3,330.0L95.8,325.8L93.0,321.0L91.3,318.2L90.0,315.2L89.2,312.0L88.0,309.0L88.0,303.9L86.9,299.0L84.5,294.5L81.9,290.0L77.2,293.2L71.9,295.0L67.4,299.0L62.9,302.9L60.6,304.8L58.5,306.9L56.0,308.7ZM1180.7,27.5L1180.0,31.0L1181.7,34.5L1183.7,37.9L1185.4,41.4L1187.0,45.0L1191.7,48.6L1196.7,51.7L1201.2,55.5L1206.0,59.0L1210.0,62.0L1214.2,64.8L1218.4,67.5L1222.0,71.0L1224.7,72.7L1227.7,73.8L1230.7,74.8L1233.5,76.4L1236.5,77.4L1239.6,77.8L1242.6,78.9L1245.6,80.0L1242.1,84.7L1238.6,89.5L1235.8,91.5L1233.3,93.7L1231.1,96.3L1229.0,99.0L1231.3,101.4L1233.9,103.4L1236.2,105.8L1238.6,108.0L1242.2,108.9L1245.8,109.8L1249.1,111.8L1252.6,113.0L1257.8,114.2L1263.0,114.2L1268.3,114.7L1273.5,115.0L1278.8,114.2L1284.0,113.0L1289.3,111.8L1294.5,110.5L1295.7,113.8L1297.2,117.1L1297.9,120.6L1299.0,124.0L1301.1,128.7L1303.6,133.1L1304.7,138.1L1306.0,143.0L1309.3,141.3L1312.7,139.6L1316.3,138.8L1320.0,138.0L1317.2,132.7L1315.5,127.0L1318.9,123.3L1322.6,120.0L1327.3,118.8L1332.0,117.5L1335.3,120.9L1339.0,124.0L1342.1,123.6L1345.3,123.7L1348.4,123.5L1351.5,122.8L1354.5,123.7L1357.7,124.1L1360.8,124.1L1364.0,124.0L1366.5,126.6L1368.7,129.3L1371.6,131.3L1374.0,134.0L1375.4,139.7L1378.0,145.0L1381.9,148.4L1386.5,150.9L1391.3,152.9L1396.0,155.0L1398.4,151.6L1401.1,148.5L1404.0,145.6L1407.1,142.9L1410.8,141.0L1414.2,138.6L1417.8,136.6L1421.0,134.0L1423.9,136.1L1426.4,138.6L1429.2,140.8L1432.0,143.0L1434.0,145.9L1436.0,148.9L1438.8,151.2L1441.0,154.0L1445.7,156.3L1450.7,157.8L1455.6,159.3L1460.4,161.5L1465.5,162.4L1470.6,163.4L1475.8,163.8L1481.0,164.0L1479.5,169.0L1478.1,174.0L1475.8,178.6L1473.9,183.5L1472.5,188.5L1471.5,193.6L1471.2,198.8L1471.0,204.0L1468.5,205.9L1466.0,207.8L1463.4,209.5L1461.1,211.6L1458.3,213.1L1455.7,214.8L1453.5,217.1L1451.0,219.0L1447.0,219.3L1443.0,219.6L1439.1,220.7L1435.3,222.0L1432.1,224.3L1428.5,226.1L1424.9,227.9L1421.0,229.0L1417.3,230.1L1413.7,231.2L1409.9,231.6L1406.2,232.5L1402.4,232.8L1398.5,232.8L1394.8,233.6L1391.0,234.0L1385.6,231.9L1380.3,229.5L1374.6,228.3L1369.0,226.8L1363.3,225.4L1357.5,225.1L1351.7,224.8L1346.0,224.0L1342.8,223.6L1339.6,223.4L1336.6,222.2L1333.5,221.4L1330.4,220.5L1327.3,220.0L1324.1,219.6L1321.0,219.0L1318.3,221.3L1316.0,223.9L1313.5,226.4L1310.6,228.4L1307.6,230.0L1304.4,231.6L1301.5,233.5L1298.4,235.1L1295.7,237.3L1292.7,239.1L1290.0,241.2L1286.9,242.9L1284.2,245.1L1281.4,247.2L1278.6,249.2L1276.0,251.5L1281.3,252.6L1286.5,254.0L1291.0,257.0L1296.0,259.0L1300.1,258.9L1304.0,259.6L1308.0,260.5L1312.0,261.0L1316.6,264.2L1320.8,267.8L1325.3,271.1L1330.0,274.0L1332.3,277.8L1335.3,281.2L1338.9,283.8L1342.0,287.0L1341.4,291.1L1340.8,295.2L1339.5,299.1L1338.0,303.0L1334.1,305.5L1329.9,307.3L1325.9,309.5L1322.0,312.0L1318.7,312.6L1315.4,313.5L1312.4,315.1L1309.2,316.2L1305.9,317.0L1302.7,317.9L1299.3,318.3L1296.0,319.0L1292.3,317.5L1288.6,316.3L1284.7,315.4L1281.1,313.8L1277.5,312.0L1273.8,310.6L1269.9,309.7L1266.0,309.0L1262.0,306.2L1258.0,303.3L1253.8,300.8L1249.8,298.0L1245.9,295.0L1242.6,291.3L1239.3,287.6L1236.0,284.0L1234.1,278.7L1231.6,273.7L1228.4,269.1L1226.0,264.0L1222.1,261.1L1218.3,258.0L1214.9,254.5L1211.2,251.3L1207.5,248.1L1203.6,245.2L1199.5,242.4L1196.0,239.0L1193.0,237.6L1190.0,236.2L1186.9,235.1L1183.9,233.6L1180.8,232.6L1177.7,231.4L1174.7,230.2L1171.5,229.3L1168.7,227.5L1165.8,225.9L1163.1,224.0L1160.5,222.0L1157.8,220.1L1155.4,217.8L1152.8,215.8L1150.0,214.0L1146.0,212.0L1141.7,210.6L1137.6,208.7L1133.3,207.4L1129.4,205.1L1125.7,202.6L1121.8,200.5L1117.5,199.0L1114.8,197.6L1112.2,196.1L1109.7,194.3L1107.1,192.8L1104.7,190.9L1102.1,189.3L1099.4,188.1L1096.5,187.0L1093.6,186.2L1090.7,185.2L1088.1,183.8L1085.2,182.8L1082.8,181.0L1080.6,178.9L1078.0,177.4L1075.5,175.7L1071.2,174.6L1066.8,174.3L1062.4,173.8L1058.2,172.5L1053.8,172.6L1049.4,172.1L1045.0,172.4L1040.6,173.0L1037.4,172.3L1034.4,171.1L1031.1,170.7L1028.0,169.8L1024.8,169.2L1021.5,169.2L1018.3,168.8L1015.0,169.0L1011.4,167.5L1008.0,165.6L1004.3,164.1L1001.0,162.0L997.4,158.2L994.3,154.0L991.3,149.7L989.0,145.0L985.9,144.9L982.7,145.0L979.6,144.6L976.5,144.2L973.4,144.6L970.3,144.8L967.1,144.6L964.0,145.0L961.0,144.8L958.0,144.9L954.9,145.0L951.9,144.7L949.0,144.1L946.0,143.5L943.0,143.4L940.0,143.0L935.6,141.9L931.5,140.1L927.9,137.4L923.8,135.3L920.1,132.8L916.5,130.2L913.0,127.3L910.0,124.0L907.2,122.2L904.6,120.2L901.5,118.8L898.7,117.1L896.5,114.6L894.2,112.1L891.4,110.3L889.0,108.0L886.0,104.6L882.9,101.3L879.9,97.8L877.6,93.9L874.4,90.6L871.0,87.6L868.3,83.9L866.0,80.0L861.2,79.7L856.5,80.3L851.7,80.6L847.0,80.0L842.8,77.4L838.8,74.5L834.9,71.5L831.0,68.5L826.8,64.4L821.6,61.6L820.3,58.1L819.1,54.7L818.0,51.2L817.0,47.6L811.4,45.9L805.6,44.8L799.9,43.4L794.1,42.3L788.5,40.4L783.1,38.3L777.7,35.8L772.3,33.4L766.6,32.3L760.7,32.0L754.9,31.4L749.1,30.6L743.2,30.1L737.4,29.4L731.6,28.3L726.0,26.5L720.9,28.6L715.7,30.3L710.4,31.8L705.2,33.5L700.2,35.6L695.4,38.4L691.0,41.7L686.0,44.0L683.4,47.1L681.1,50.3L678.7,53.5L675.7,56.2L673.3,59.4L671.2,62.9L668.4,65.8L666.0,69.0L663.5,73.7L661.6,78.7L660.0,83.9L657.5,88.6L656.7,93.9L654.9,99.0L652.5,103.9L651.0,109.0L649.0,112.3L646.6,115.2L643.7,117.5L641.0,120.3L638.5,123.0L635.9,125.8L633.3,128.5L631.0,131.5L628.1,133.6L625.8,136.3L623.4,138.9L621.0,141.5L616.9,142.5L613.0,144.0L609.0,145.6L605.4,147.8L602.0,150.3L598.4,152.6L594.7,154.6L591.0,156.5L585.5,154.4L580.2,151.8L574.5,150.4L568.8,149.3L563.2,147.5L557.5,146.1L551.7,145.5L546.0,144.0L542.8,142.5L539.7,140.8L536.9,138.7L534.0,136.8L530.7,135.5L527.6,134.0L524.3,132.7L521.0,131.5L518.1,130.3L515.2,128.9L512.8,126.8L510.1,125.3L508.0,122.9L505.6,120.8L503.2,118.7L501.0,116.5L497.2,115.7L493.3,115.6L489.4,115.0L485.8,113.7L482.0,112.7L478.4,111.2L474.6,110.3L471.0,109.0L467.0,106.8L463.5,104.0L461.4,107.0L458.9,109.7L457.5,113.1L456.0,116.5L454.6,122.2L452.0,127.4L451.1,133.2L451.0,139.0L450.5,144.3L450.0,149.7L448.7,154.9L447.8,160.1L447.3,165.5L447.2,170.8L447.4,176.2L448.5,181.5L447.1,184.4L446.3,187.6L444.6,190.4L443.4,193.4L442.1,196.4L440.3,199.1L438.1,201.5L436.0,204.0L434.4,207.3L432.2,210.3L430.1,213.2L428.1,216.3L426.1,219.3L423.9,222.3L422.5,225.6L421.0,229.0L419.3,231.9L417.2,234.6L415.3,237.4L413.4,240.2L412.1,243.4L410.4,246.3L408.0,248.8L406.0,251.5L403.0,253.8L400.4,256.5L397.6,259.1L395.2,262.1L392.8,265.0L390.0,267.5L387.7,270.6L386.0,274.0L382.0,276.5L378.2,279.3L374.7,282.4L371.2,285.5L367.1,287.8L363.1,290.4L359.6,293.5L356.0,296.5L350.8,296.6L345.7,297.9L340.8,299.5L336.0,301.5L333.3,299.9L330.5,298.4L328.4,296.0L326.0,294.0L321.8,297.3L318.5,301.5L317.6,305.8L317.2,310.2L315.6,314.3L314.6,318.6L312.5,322.4L310.3,326.2L308.5,330.2L306.4,334.0L306.5,339.0L305.8,344.0L305.7,349.0L305.2,354.0L306.6,357.5L308.3,361.0L312.7,363.0L317.4,364.5L321.7,366.6L325.7,369.4L330.3,371.0L335.0,372.2L339.6,373.8L344.3,375.0L348.9,377.0L353.5,379.1L358.1,381.3L363.0,382.4L367.6,384.7L372.6,386.1L377.4,388.0L381.6,391.0L384.4,393.4L387.4,395.5L390.5,397.4L394.0,398.6L397.3,401.2L400.3,404.0L402.3,407.8L405.0,411.0L407.3,413.8L409.0,417.1L410.7,420.3L412.6,423.4L412.7,427.2L413.0,431.0L414.2,434.6L415.0,438.3L416.4,441.6L417.1,445.1L418.4,448.5L418.9,452.0L418.6,455.1L419.0,458.2L419.3,461.4L420.0,464.4L418.9,467.5L417.5,470.5L416.9,473.7L416.4,477.0L416.3,481.7L415.5,486.3L415.0,491.0L413.9,495.5L414.4,499.1L414.6,502.7L414.7,506.4L415.0,510.0L416.6,506.3L418.9,503.0L421.5,497.7L425.0,493.0L430.3,492.7L435.5,493.0L440.8,492.7L446.0,492.0L451.0,493.7L455.8,495.9L460.2,498.7L465.0,501.0L467.7,503.2L470.4,505.2L473.2,507.2L475.8,509.5L478.1,512.0L480.6,514.4L482.4,517.4L484.6,520.0L486.8,522.3L489.3,524.3L491.3,526.7L493.4,529.1L496.1,530.7L498.9,532.3L501.3,534.3L504.0,536.0L506.3,538.8L509.0,541.1L511.8,543.5L514.9,545.3L517.9,547.3L520.8,549.4L523.8,551.4L527.0,553.0L529.5,555.0L532.1,556.7L534.4,558.9L536.7,561.0L539.1,563.1L541.7,564.9L544.0,567.0L546.5,569.0L550.9,572.8L555.0,576.8L558.1,581.7L562.0,586.0L564.7,589.1L566.8,592.7L569.0,596.2L570.9,599.9L573.9,602.8L576.6,606.0L578.6,609.6L581.0,613.0L583.3,616.2L585.7,619.3L587.9,622.5L589.4,626.2L591.3,629.6L593.1,633.0L595.0,636.5L596.7,640.0L598.5,643.8L600.2,647.7L602.0,651.5L604.1,655.2L605.4,659.2L606.6,663.3L607.9,667.3L610.0,671.0L610.8,674.8L611.9,678.5L613.3,682.1L615.0,685.5L616.5,689.1L617.2,692.9L618.5,696.5L620.0,700.0L620.4,703.2L621.2,706.3L620.9,709.4L621.2,712.6L622.1,715.7L623.1,718.7L623.8,721.8L624.0,725.0L624.2,728.6L624.6,732.2L624.6,735.9L624.8,739.5L625.3,743.1L625.7,746.7L625.5,750.4L625.0,754.0L620.4,755.8L616.0,758.0L613.8,761.4L611.1,764.3L608.7,767.6L606.2,770.7L603.3,773.4L600.8,776.6L598.5,779.9L596.0,783.0L592.8,785.2L589.3,786.8L586.4,789.4L583.7,792.1L580.4,794.0L577.3,796.2L574.1,798.3L571.0,800.5L567.1,804.8L563.3,809.0L559.2,813.1L556.0,818.0L554.9,821.1L554.3,824.3L553.5,827.5L553.0,830.7L551.6,833.7L550.8,836.9L549.8,840.0L548.5,843.0L548.7,846.1L548.8,849.3L548.8,852.4L549.2,855.5L548.9,858.6L548.7,861.8L548.6,864.9L548.9,868.0L548.8,871.2L549.1,874.3L549.3,877.4L549.5,880.6L549.7,883.7L550.2,886.8L550.5,889.9L551.0,893.0L551.6,896.2L552.8,899.2L553.7,902.2L554.8,905.2L554.6,908.5L555.0,911.7L555.6,914.8L556.0,918.0L558.8,920.9L560.9,924.3L563.2,927.6L565.3,931.1L567.9,934.1L570.9,936.8L573.7,939.7L576.0,943.0L578.0,945.5L579.4,948.2L581.2,950.8L582.7,953.6L584.6,956.1L586.3,958.8L588.5,961.1L591.0,963.0L591.5,966.2L592.2,969.3L593.1,972.4L594.2,975.4L594.8,978.5L595.0,981.7L595.4,984.9L596.0,988.0L599.6,989.2L603.4,990.0L607.2,990.5L611.0,990.5L614.0,993.7L616.8,997.2L620.3,999.9L623.5,1003.0L622.5,1006.8L621.1,1010.5L619.5,1014.2L618.5,1018.0L613.4,1020.4L608.5,1023.0L608.4,1026.1L608.5,1029.3L608.0,1032.4L608.1,1035.5L607.8,1038.6L607.9,1041.8L607.9,1044.9L608.5,1048.0L609.2,1051.8L610.6,1055.5L611.2,1059.3L611.8,1063.1L612.3,1067.0L613.1,1070.8L614.9,1074.3L616.0,1078.0L618.9,1082.8L622.1,1087.4L623.5,1092.9L626.0,1098.0L629.1,1098.8L632.1,1099.9L635.3,1100.4L638.3,1101.3L641.5,1101.6L644.6,1102.4L647.8,1102.9L651.0,1103.0L654.7,1101.7L658.6,1100.7L662.2,1099.0L666.0,1098.0L671.0,1099.0L676.0,1099.3L681.1,1099.1L686.0,1098.0L688.5,1103.0L691.5,1107.7L693.6,1112.9L696.0,1118.0L697.6,1123.4L700.1,1128.4L702.8,1133.3L705.7,1138.1L709.2,1142.6L712.0,1147.5L714.2,1152.7L716.0,1158.0L720.2,1154.7L724.1,1151.1L727.6,1147.1L731.0,1143.0L732.8,1140.4L734.3,1137.7L736.2,1135.2L737.7,1132.4L740.1,1130.3L742.2,1128.0L744.2,1125.6L746.0,1123.0L748.4,1120.7L750.7,1118.2L752.7,1115.6L755.1,1113.2L757.8,1111.3L760.5,1109.2L763.1,1107.2L766.0,1105.5L762.6,1100.8L759.6,1095.8L755.4,1091.8L751.0,1088.0L750.2,1082.9L749.8,1077.7L748.0,1072.8L746.0,1068.0L746.4,1063.0L747.1,1058.0L746.8,1053.0L747.4,1048.0L747.3,1043.0L746.8,1038.0L746.0,1033.0L746.0,1028.0L747.5,1023.1L749.2,1018.3L750.4,1013.4L751.1,1008.3L750.2,1003.3L749.9,998.2L750.2,993.1L751.0,988.0L753.0,983.2L754.1,978.1L755.1,973.1L756.0,968.0L759.7,965.9L763.2,963.6L767.3,962.5L771.1,960.7L774.8,958.7L778.3,956.4L782.3,955.1L786.0,953.0L790.5,952.5L794.8,951.3L799.3,950.5L803.8,950.6L808.0,948.9L812.1,947.1L816.6,946.7L821.0,945.5L825.3,946.5L829.7,947.2L834.1,947.3L838.5,947.2L842.8,946.3L847.2,945.9L851.6,945.4L856.0,945.5L860.5,947.2L865.1,948.5L869.1,951.1L873.5,953.0L872.0,957.2L871.3,961.6L870.7,966.0L870.0,970.3L870.1,974.8L870.1,979.2L870.7,983.6L871.0,988.0L869.2,992.8L867.8,997.8L866.5,1002.8L866.0,1008.0L865.1,1011.9L863.6,1015.5L862.4,1019.3L861.0,1023.0L864.4,1024.7L867.6,1026.9L870.3,1029.6L873.5,1031.8L876.5,1034.1L879.7,1036.2L882.8,1038.4L886.0,1040.5L890.1,1039.4L893.8,1037.4L897.6,1035.5L901.0,1033.0L903.9,1035.7L906.5,1038.9L908.9,1042.0L911.3,1045.3L913.8,1048.4L916.1,1051.6L918.3,1055.0L921.0,1058.0L922.5,1060.7L924.3,1063.3L926.3,1065.7L928.3,1068.1L930.5,1070.3L932.5,1072.8L934.4,1075.3L936.0,1078.0L937.4,1082.0L939.2,1085.8L941.5,1089.3L943.6,1093.0L946.0,1096.4L948.1,1100.1L949.3,1104.1L951.0,1108.0L952.9,1111.1L954.5,1114.4L956.5,1117.5L958.0,1120.8L960.1,1123.8L962.2,1126.7L964.3,1129.8L966.0,1133.0L967.4,1137.4L968.5,1141.8L970.4,1146.0L972.2,1150.1L973.0,1154.6L973.9,1159.1L975.3,1163.5L976.0,1168.0L978.6,1169.8L981.2,1171.5L983.2,1174.0L985.5,1176.1L988.3,1177.6L990.8,1179.5L993.3,1181.4L996.0,1183.0L994.7,1187.2L993.8,1191.6L993.3,1196.0L992.4,1200.3L991.5,1204.7L991.2,1209.1L991.4,1213.6L991.0,1218.0L990.7,1221.8L990.2,1225.5L989.4,1229.2L989.3,1233.0L990.2,1236.7L991.0,1240.4L991.0,1244.2L991.0,1248.0L992.0,1251.7L992.7,1255.4L993.1,1259.2L993.9,1262.9L994.5,1266.7L994.5,1270.5L995.1,1274.3L996.0,1278.0L994.0,1281.1L991.5,1283.8L989.5,1286.9L987.4,1289.8L985.8,1293.1L983.8,1296.2L982.5,1299.7L981.0,1303.0L980.5,1306.7L980.6,1310.5L981.0,1314.2L981.0,1318.0L982.9,1320.5L985.0,1322.8L986.8,1325.4L989.1,1327.6L990.8,1330.2L992.1,1333.1L994.1,1335.5L996.0,1338.0L999.4,1339.4L1002.5,1341.4L1006.0,1342.5L1009.3,1344.2L1012.1,1346.6L1014.7,1349.2L1017.7,1351.4L1021.0,1353.0L1025.6,1356.3L1030.6,1358.8L1035.9,1360.8L1041.0,1363.0L1042.0,1366.9L1042.3,1370.9L1043.8,1374.5L1044.7,1378.4L1046.6,1382.0L1048.4,1385.5L1049.6,1389.3L1051.0,1393.0L1051.7,1389.1L1053.0,1385.3L1053.2,1381.3L1054.2,1377.4L1055.7,1373.7L1056.8,1369.8L1058.9,1366.4L1061.0,1363.0L1060.8,1359.2L1060.6,1355.5L1061.2,1351.8L1061.6,1348.0L1061.7,1344.2L1061.1,1340.5L1061.4,1336.7L1061.0,1333.0L1059.1,1329.9L1057.1,1326.8L1055.5,1323.5L1054.4,1320.0L1052.7,1316.7L1050.5,1313.8L1048.3,1310.8L1046.0,1308.0L1046.6,1304.2L1046.3,1300.4L1046.2,1296.5L1046.8,1292.7L1048.5,1289.2L1049.6,1285.6L1050.1,1281.7L1051.0,1278.0L1051.0,1273.0L1051.2,1268.0L1050.4,1263.0L1050.1,1258.0L1049.6,1253.0L1049.7,1248.0L1050.4,1243.0L1051.0,1238.0L1056.3,1239.8L1061.0,1243.0L1064.7,1240.4L1068.9,1238.6L1072.7,1236.1L1076.0,1233.0L1075.2,1227.9L1074.2,1222.8L1072.8,1217.8L1071.0,1213.0L1074.8,1212.8L1078.7,1212.7L1082.3,1211.4L1086.0,1210.5L1083.6,1207.3L1081.1,1204.2L1078.5,1201.1L1076.0,1198.0L1076.6,1194.9L1076.7,1191.7L1077.5,1188.5L1077.7,1185.3L1078.6,1182.3L1079.2,1179.1L1079.9,1176.0L1081.0,1173.0L1084.2,1170.5L1087.7,1168.6L1090.5,1165.6L1093.4,1162.9L1096.7,1160.6L1099.8,1158.1L1102.7,1155.3L1106.0,1153.0L1105.6,1149.3L1105.2,1145.5L1104.6,1141.8L1104.6,1138.0L1104.7,1134.2L1104.7,1130.4L1105.4,1126.7L1106.0,1123.0L1109.4,1120.3L1113.4,1118.4L1117.3,1116.5L1121.2,1114.6L1124.7,1112.0L1128.5,1109.8L1132.2,1107.5L1136.0,1105.5L1141.0,1104.8L1146.0,1104.0L1151.0,1104.3L1156.0,1104.7L1160.9,1105.8L1166.0,1106.2L1171.0,1105.7L1176.0,1105.5L1181.6,1106.2L1187.2,1106.5L1192.9,1106.3L1198.5,1106.2L1204.1,1105.9L1209.7,1105.7L1215.4,1106.0L1221.0,1105.5L1223.0,1109.0L1225.5,1112.2L1228.2,1115.1L1231.0,1118.0L1231.6,1123.2L1233.2,1128.1L1234.4,1133.1L1234.9,1138.3L1236.5,1143.2L1238.4,1148.0L1239.9,1152.9L1241.0,1158.0L1241.1,1162.5L1240.9,1166.9L1240.2,1171.3L1238.7,1175.5L1237.3,1179.8L1236.5,1184.1L1235.8,1188.5L1236.0,1193.0L1238.3,1196.9L1241.2,1200.4L1243.9,1204.0L1246.0,1208.0L1248.9,1204.6L1251.4,1200.8L1253.4,1196.7L1256.0,1193.0L1258.0,1196.1L1259.5,1199.4L1260.8,1202.8L1262.7,1206.0L1265.2,1208.6L1267.4,1211.6L1269.5,1214.6L1271.0,1218.0L1272.7,1220.7L1274.3,1223.4L1275.9,1226.1L1277.4,1228.8L1280.0,1230.7L1282.2,1232.9L1283.9,1235.6L1286.0,1238.0L1287.9,1240.5L1289.9,1242.9L1291.3,1245.8L1292.8,1248.5L1294.8,1250.9L1297.0,1253.2L1299.1,1255.5L1301.0,1258.0L1302.9,1260.5L1305.2,1262.7L1307.0,1265.2L1309.1,1267.5L1311.3,1269.8L1313.0,1272.5L1314.3,1275.3L1316.0,1278.0L1318.8,1282.8L1321.6,1287.7L1324.4,1292.6L1326.0,1298.0L1330.7,1301.0L1336.0,1303.0L1341.0,1302.9L1346.0,1302.9L1351.0,1303.1L1356.0,1303.0L1359.8,1305.5L1363.0,1308.7L1367.1,1310.6L1371.0,1313.0L1374.0,1317.7L1376.8,1322.6L1379.3,1327.6L1381.0,1333.0L1381.5,1336.4L1382.0,1339.7L1383.1,1343.0L1384.3,1346.2L1386.0,1349.2L1387.4,1352.2L1389.1,1355.2L1391.0,1358.0L1395.0,1360.1L1398.9,1362.4L1402.6,1365.1L1406.0,1368.0L1409.1,1367.7L1412.3,1367.8L1415.4,1367.5L1418.6,1367.4L1421.7,1367.5L1424.8,1367.0L1428.0,1366.6L1431.1,1366.2L1434.2,1365.8L1437.4,1365.8L1440.5,1365.7L1443.7,1365.8L1446.7,1364.9L1449.7,1363.9L1452.9,1363.5L1456.0,1363.0L1456.5,1358.0L1456.0,1353.0L1454.0,1350.5L1451.7,1348.3L1449.3,1346.3L1446.7,1344.6L1444.0,1342.9L1441.4,1341.2L1438.6,1339.8L1436.0,1338.0L1434.4,1335.3L1433.0,1332.5L1430.9,1330.1L1429.0,1327.6L1427.0,1325.2L1424.6,1323.1L1423.0,1320.4L1421.0,1318.0L1422.6,1312.6L1424.8,1307.4L1427.8,1302.6L1431.0,1298.0L1428.8,1295.2L1426.4,1292.6L1423.6,1290.4L1421.0,1288.0L1418.1,1285.8L1415.0,1283.9L1411.8,1282.1L1408.8,1280.1L1405.6,1278.2L1402.3,1276.6L1399.2,1274.7L1396.0,1273.0L1392.8,1268.8L1389.1,1264.9L1385.0,1261.6L1381.0,1258.0L1379.1,1255.5L1377.5,1252.7L1375.0,1250.8L1372.9,1248.4L1371.4,1245.7L1369.8,1243.0L1367.9,1240.5L1366.0,1238.0L1365.9,1233.0L1365.6,1228.0L1366.4,1223.0L1366.0,1218.0L1365.3,1213.6L1365.2,1209.2L1364.3,1204.8L1364.2,1200.4L1363.3,1196.1L1362.2,1191.8L1362.0,1187.3L1361.0,1183.0L1361.3,1179.8L1362.0,1176.7L1362.2,1173.5L1362.3,1170.3L1363.7,1167.3L1364.4,1164.2L1365.3,1161.1L1366.0,1158.0L1369.8,1157.0L1373.5,1155.4L1377.2,1154.2L1381.0,1153.0L1384.5,1154.9L1388.2,1156.4L1392.2,1156.9L1396.0,1158.0L1396.2,1154.0L1397.0,1150.1L1398.1,1146.2L1399.1,1142.4L1400.9,1138.8L1402.4,1135.1L1403.9,1131.4L1406.0,1128.0L1404.1,1122.7L1402.1,1117.4L1399.1,1112.7L1396.0,1108.0L1395.1,1102.9L1394.7,1097.7L1393.1,1092.8L1391.0,1088.0L1388.8,1085.8L1386.8,1083.3L1384.9,1080.8L1383.4,1078.1L1382.0,1075.2L1380.1,1072.7L1377.9,1070.5L1376.0,1068.0L1374.8,1063.0L1373.1,1058.1L1371.5,1053.2L1371.0,1048.0L1369.8,1044.2L1368.7,1040.4L1366.9,1036.9L1365.6,1033.1L1364.9,1029.2L1363.9,1025.4L1362.7,1021.6L1361.0,1018.0L1358.4,1013.0L1356.4,1007.8L1353.3,1003.1L1351.0,998.0L1351.3,994.3L1351.6,990.5L1351.7,986.7L1351.0,983.0L1350.1,979.3L1349.5,975.5L1348.0,972.0L1347.2,968.2L1347.0,964.4L1346.8,960.6L1346.4,956.8L1346.0,953.0L1343.4,949.3L1341.6,945.1L1339.2,941.3L1336.0,938.0L1337.2,934.2L1338.4,930.5L1339.3,926.6L1341.0,923.0L1338.1,918.2L1334.9,913.5L1332.4,908.5L1331.0,903.0L1328.4,899.9L1325.4,897.2L1323.2,893.8L1321.0,890.5L1317.9,890.2L1314.7,889.8L1311.7,888.9L1308.6,888.3L1305.5,887.8L1302.3,887.7L1299.1,887.7L1296.0,888.0L1295.0,882.9L1294.2,877.8L1292.4,873.0L1291.0,868.0L1292.2,864.4L1293.0,860.6L1293.6,856.9L1293.7,853.0L1294.5,849.3L1294.7,845.5L1295.0,841.7L1296.0,838.0L1294.1,832.7L1291.0,828.0L1289.4,824.4L1287.3,821.0L1285.4,817.4L1284.0,813.7L1284.0,809.6L1283.3,805.7L1282.3,801.8L1281.0,798.0L1279.3,794.8L1277.2,791.7L1275.0,788.8L1272.7,786.0L1270.8,782.8L1268.6,779.9L1267.4,776.4L1266.0,773.0L1264.3,769.1L1262.1,765.6L1260.1,761.9L1257.9,758.3L1255.9,754.6L1254.4,750.7L1252.5,746.9L1251.0,743.0L1248.3,740.4L1246.2,737.4L1244.0,734.5L1242.4,731.2L1240.4,728.1L1238.9,724.7L1237.2,721.5L1236.0,718.0L1235.1,714.9L1234.0,711.9L1233.1,708.8L1232.6,705.6L1231.9,702.5L1231.4,699.3L1230.8,696.1L1230.2,693.0L1229.1,689.9L1228.5,686.8L1227.5,683.7L1226.4,680.7L1224.8,677.9L1223.4,675.0L1222.2,672.0L1221.0,669.0L1219.3,666.0L1217.8,663.0L1215.6,660.3L1213.7,657.5L1211.9,654.6L1210.2,651.7L1209.2,648.4L1207.7,645.3L1206.8,642.0L1205.4,638.9L1204.9,635.5L1203.9,632.3L1202.9,629.0L1202.0,625.7L1201.8,622.3L1201.0,619.0L1199.9,613.4L1198.9,607.8L1197.8,602.3L1196.9,596.7L1196.7,591.0L1195.4,585.4L1196.0,579.7L1196.0,574.0L1199.9,572.4L1203.6,570.3L1207.6,569.0L1211.6,567.8L1215.2,565.5L1218.8,563.3L1222.2,560.9L1226.0,559.0L1228.3,562.9L1230.7,566.7L1233.3,570.4L1236.0,574.0L1238.0,579.2L1240.3,584.4L1243.0,589.3L1246.0,594.0L1249.2,595.8L1252.1,598.0L1255.4,599.6L1258.4,601.7L1261.6,603.4L1264.9,604.9L1267.9,607.1L1271.0,609.0L1274.0,607.9L1277.2,607.4L1280.4,606.9L1283.6,607.0L1286.8,606.5L1289.9,606.0L1292.9,604.9L1296.0,604.0L1300.8,603.0L1304.9,604.7L1311.1,604.7L1316.1,602.6L1317.5,600.1L1319.6,601.7L1323.4,604.0L1326.9,606.7L1330.2,609.7L1334.2,611.8L1338.3,613.6L1342.0,616.1L1346.0,618.1L1346.2,621.4L1346.9,624.6L1347.8,627.8L1348.4,631.1L1349.9,634.1L1351.2,637.2L1352.5,640.2L1353.8,643.3L1354.4,646.3L1355.7,649.1L1358.0,647.0L1360.7,645.4L1363.2,643.6L1365.4,641.3L1368.8,640.7L1372.1,639.9L1375.5,639.3L1379.0,639.4L1378.1,644.3L1377.1,649.1L1380.8,651.2L1384.8,653.0L1388.0,653.3L1391.1,654.2L1394.2,654.5L1397.4,655.0L1400.5,654.8L1403.7,655.1L1406.9,655.2L1410.1,654.9L1412.8,656.5L1415.2,658.4L1417.6,660.5L1419.8,662.7L1420.3,666.7L1421.7,670.5L1425.2,673.8L1429.5,676.3L1428.8,679.3L1427.5,682.1L1423.4,678.5L1419.8,674.3L1416.7,677.1L1413.9,680.2L1411.6,684.9L1410.1,689.9L1407.1,694.7L1404.2,699.6L1400.1,699.3L1396.0,699.2L1391.8,699.0L1387.7,698.6L1389.5,703.9L1390.6,709.3L1389.4,712.1L1388.8,715.1L1387.5,717.9L1387.4,718.1L1386.0,718.0L1387.0,720.0L1386.8,720.9L1387.4,723.9L1388.7,726.7L1390.5,727.0L1391.0,728.0L1394.1,729.3L1397.2,730.6L1400.5,731.5L1403.7,732.5L1406.7,733.9L1409.8,735.3L1412.0,736.5L1413.3,741.6L1415.9,746.2L1420.1,748.7L1423.6,752.0L1424.5,750.3L1426.0,753.0L1428.3,754.6L1427.5,755.9L1430.1,760.0L1433.3,763.6L1436.9,765.8L1440.3,768.3L1443.7,770.7L1446.9,773.3L1450.9,772.5L1454.8,771.9L1458.6,770.5L1462.5,769.5L1462.6,765.6L1462.5,761.7L1462.8,760.6L1464.0,757.0L1464.6,753.2L1465.7,749.5L1466.2,745.7L1466.3,741.8L1466.0,738.0L1470.5,738.0L1474.8,737.1L1479.1,735.7L1483.4,734.6L1487.8,734.3L1492.2,733.7L1496.6,733.0L1501.0,733.0L1501.6,731.4L1505.2,730.6L1503.4,727.6L1504.5,725.8L1505.3,721.9L1506.0,718.0L1502.2,718.0L1498.4,718.5L1494.6,717.9L1490.8,717.8L1490.7,717.9L1490.7,717.8L1487.9,716.4L1484.9,715.7L1481.9,715.1L1479.9,711.2L1478.0,707.3L1481.5,706.8L1484.8,705.5L1488.3,704.7L1491.6,703.5L1493.3,700.4L1495.3,697.5L1497.6,694.9L1499.3,691.8L1503.1,690.5L1507.1,689.9L1511.5,693.2L1514.9,697.6L1518.2,696.3L1521.4,694.9L1524.9,694.1L1528.5,693.8L1531.0,690.9L1533.6,688.1L1537.0,686.3L1540.1,684.0L1545.0,684.0L1549.9,683.9L1554.7,685.0L1559.5,686.0L1564.5,686.8L1569.5,686.6L1574.4,687.7L1578.9,689.9L1583.9,689.5L1588.6,687.9L1593.5,686.8L1598.4,686.3L1603.1,684.7L1608.0,684.0L1611.0,683.3L1614.0,682.9L1616.8,681.8L1619.5,680.4L1622.5,680.2L1625.5,679.6L1628.5,679.2L1631.3,678.2L1634.3,675.8L1636.9,673.1L1639.9,670.8L1643.0,668.5L1642.6,665.1L1641.8,661.8L1641.5,658.3L1641.0,654.9L1638.4,653.3L1635.7,651.7L1633.6,649.4L1631.3,647.2L1628.2,643.9L1624.5,641.3L1621.1,638.5L1617.7,635.5L1615.4,632.1L1612.5,629.1L1609.3,626.5L1606.1,623.9L1602.1,623.9L1598.2,623.2L1594.4,622.0L1590.5,621.6L1586.5,621.0L1582.6,620.4L1578.9,618.9L1575.0,618.1L1572.7,615.4L1571.2,612.2L1574.5,610.7L1577.9,609.3L1581.2,607.5L1584.7,606.4L1582.9,603.9L1581.2,601.3L1578.9,599.2L1577.0,596.7L1572.6,593.4L1567.7,591.0L1562.7,588.9L1561.3,588.3L1562.6,585.6L1564.8,582.5L1567.0,579.3L1568.8,576.0L1571.7,573.6L1574.6,571.3L1576.7,568.2L1579.3,565.5L1581.1,561.0L1582.4,556.4L1583.4,551.8L1584.5,547.1L1583.3,542.9L1581.0,539.0L1579.1,535.1L1576.7,531.4L1572.9,529.7L1568.9,528.4L1564.9,527.2L1560.9,526.1L1557.9,526.6L1554.9,527.0L1551.9,527.4L1548.9,528.0L1546.0,528.9L1543.2,529.9L1540.3,530.8L1537.3,531.4L1533.4,533.9L1529.9,537.1L1527.2,540.9L1524.2,544.5L1528.2,547.1L1532.1,549.7L1535.2,552.5L1538.5,555.2L1541.8,557.7L1545.2,560.2L1547.3,564.8L1549.6,569.2L1551.3,573.9L1553.0,578.6L1555.3,581.0L1557.4,583.6L1559.2,586.3L1560.2,588.0L1557.6,587.0L1554.7,589.0L1552.4,591.5L1550.1,594.1L1547.9,596.7L1543.9,597.4L1539.8,597.6L1536.1,599.2L1532.3,600.6L1527.7,597.8L1524.0,594.0L1524.2,594.1L1521.7,592.1L1519.4,589.8L1517.0,587.6L1514.8,585.2L1512.3,583.1L1510.3,580.6L1508.1,578.2L1505.8,576.0L1503.0,574.6L1500.3,573.1L1497.8,571.4L1495.1,569.8L1492.3,568.4L1489.9,566.5L1487.5,564.5L1484.9,562.9L1481.6,561.7L1478.4,560.7L1475.2,559.3L1471.8,558.6L1468.5,557.7L1465.1,557.1L1462.0,555.8L1458.6,555.0L1454.9,551.4L1451.6,547.5L1448.3,543.6L1445.5,539.2L1443.6,534.1L1442.9,528.8L1444.9,523.2L1448.1,518.3L1446.6,514.4L1444.9,510.6L1443.6,506.6L1442.9,502.5L1442.9,499.2L1443.3,496.0L1442.8,492.7L1442.9,489.4L1444.6,485.3L1446.8,481.5L1448.3,477.4L1450.8,473.7L1447.4,471.9L1444.1,470.0L1440.9,467.8L1437.6,465.8L1434.2,465.1L1430.9,463.7L1427.6,462.3L1424.5,460.6L1422.6,455.5L1421.9,450.1L1423.9,445.0L1424.5,439.6L1429.1,440.0L1433.7,440.4L1438.3,440.3L1442.9,439.6L1445.6,437.7L1448.2,435.7L1450.7,433.6L1453.4,431.7L1453.5,427.1L1452.9,422.5L1452.7,417.9L1453.4,413.3L1451.1,410.4L1448.2,408.0L1445.5,405.5L1442.9,402.9L1439.1,398.7L1435.4,394.6L1431.3,390.8L1427.1,387.1L1421.6,386.2L1416.2,384.5L1411.2,381.8L1406.2,379.2L1402.2,379.3L1398.2,380.0L1394.3,379.3L1390.3,379.2L1386.4,380.0L1382.4,380.0L1378.6,381.2L1374.7,381.9L1370.3,378.9L1365.5,376.7L1360.9,374.1L1356.3,371.4L1356.1,367.4L1355.9,363.4L1355.2,359.4L1353.7,355.6L1355.5,352.6L1356.8,349.2L1358.8,346.3L1360.4,343.1L1361.3,339.7L1362.3,336.2L1363.1,332.8L1364.2,329.4L1370.2,329.1L1376.1,330.1L1382.0,330.5L1387.8,332.0L1391.1,331.8L1394.4,331.2L1397.7,331.4L1400.9,331.0L1404.2,330.4L1407.4,329.8L1410.7,329.8L1414.0,329.4L1419.3,328.0L1424.7,327.5L1430.0,326.3L1435.0,324.2L1437.2,322.0L1439.5,320.0L1441.5,317.7L1443.3,315.2L1445.8,313.5L1448.5,312.2L1450.8,310.0L1453.4,308.4L1456.3,305.9L1459.1,303.2L1462.5,301.4L1465.7,299.2L1469.2,297.6L1472.9,296.4L1476.1,294.4L1479.6,292.7L1482.9,292.6L1486.2,292.6L1489.5,292.4L1492.8,292.6L1496.1,292.1L1499.4,291.8L1502.6,290.8L1505.8,290.1L1509.1,290.5L1512.3,291.0L1515.6,291.4L1518.9,291.6L1522.2,291.9L1525.5,292.0L1528.8,291.7L1532.1,291.4L1535.3,290.8L1538.6,290.3L1541.9,290.5L1545.2,290.1L1548.3,291.8L1551.6,293.0L1555.0,294.0L1558.3,295.3L1561.7,294.4L1565.1,293.2L1568.2,291.5L1571.4,290.1L1574.7,288.7L1577.8,286.9L1581.3,286.3L1584.5,284.8L1588.6,283.1L1592.3,280.6L1596.1,278.4L1600.3,277.0L1596.5,274.0L1592.4,271.7L1588.6,268.9L1584.5,266.5L1586.7,262.2L1589.8,258.6L1594.0,257.5L1598.3,256.9L1602.4,255.4L1606.5,253.8L1610.8,253.3L1615.2,252.7L1619.5,253.2L1623.9,253.3L1626.8,251.8L1629.6,250.0L1632.0,247.7L1634.4,245.5L1638.3,244.9L1642.2,244.7L1646.2,244.4L1650.1,244.2L1654.7,244.1L1659.3,244.8L1663.9,245.2L1668.5,245.5L1672.8,247.5L1676.5,250.5L1680.0,253.7L1684.2,256.0L1685.5,261.2L1686.8,266.5L1684.2,270.4L1681.6,274.3L1678.3,274.8L1675.0,275.7L1671.8,276.4L1668.5,277.0L1666.2,279.9L1663.2,282.2L1664.1,286.7L1664.2,291.4L1663.4,295.9L1663.2,300.6L1665.9,303.8L1668.1,307.4L1670.8,310.6L1673.7,313.7L1679.3,313.6L1684.9,313.6L1690.4,313.2L1696.0,313.7L1696.0,314.0L1699.8,314.2L1703.6,314.7L1707.5,314.5L1711.3,314.6L1714.9,316.1L1718.4,317.5L1722.2,318.5L1726.0,319.0L1728.4,321.6L1730.8,324.3L1733.1,326.9L1735.0,330.0L1737.9,332.0L1740.5,334.5L1743.4,336.6L1746.0,339.0L1747.8,343.5L1750.2,347.6L1752.8,351.6L1755.0,355.9L1755.7,360.6L1757.1,365.2L1759.3,369.5L1761.0,374.0L1762.6,377.9L1764.9,381.4L1766.4,385.4L1767.9,389.3L1769.6,393.2L1771.2,397.1L1773.6,400.6L1776.0,404.0L1781.1,406.3L1785.7,409.5L1791.1,411.3L1796.0,414.0L1800.7,411.7L1805.7,410.2L1810.8,409.5L1816.0,409.0L1819.3,410.6L1822.3,412.8L1825.7,414.0L1829.0,415.7L1832.2,417.4L1835.3,419.4L1838.2,421.6L1841.0,424.0L1842.7,427.8L1844.8,431.5L1846.9,435.1L1848.8,438.9L1851.3,442.3L1853.1,446.1L1854.8,450.0L1856.0,454.0L1858.3,457.5L1860.9,460.9L1863.4,464.3L1865.3,468.1L1866.9,472.0L1868.6,475.9L1869.5,480.0L1871.0,484.0L1872.9,487.8L1875.3,491.2L1877.3,495.0L1878.6,499.0L1880.5,502.7L1882.5,506.4L1884.4,510.1L1886.0,514.0L1890.9,515.4L1895.7,517.2L1900.6,518.4L1905.7,519.2L1910.7,519.5L1915.8,519.2L1920.9,518.9L1926.0,519.0L1928.2,516.0L1929.9,512.8L1931.5,509.5L1933.0,506.2L1934.6,502.9L1936.5,499.8L1938.5,496.7L1941.0,494.0L1941.0,489.6L1941.2,485.1L1941.6,480.7L1941.9,476.3L1943.6,472.1L1944.5,467.8L1945.6,463.4L1946.0,459.0L1946.8,454.0L1946.7,449.0L1946.2,444.0L1945.6,439.0L1946.4,434.0L1946.3,429.0L1945.8,424.0L1946.0,419.0L1943.9,414.1L1942.4,409.3L1941.4,404.3L1941.8,399.2L1941.0,394.1L1941.0,388.2L1939.7,382.5L1939.5,376.6L1938.1,370.9L1937.1,365.9L1937.2,360.7L1935.8,355.7L1935.2,350.6L1934.6,346.3L1934.0,341.9L1933.0,337.6L1932.3,333.2L1928.9,330.0L1925.2,327.3L1921.6,324.3L1917.8,321.6L1917.7,318.3L1917.1,315.1L1917.6,311.9L1917.8,308.6L1917.4,305.3L1917.3,302.1L1917.3,298.8L1917.8,295.5L1920.2,292.0L1922.0,288.2L1924.4,284.7L1926.5,281.0L1925.5,278.2L1924.4,275.4L1923.7,272.5L1923.6,269.4L1920.8,265.8L1918.4,261.7L1915.3,258.3L1912.0,254.9L1910.6,250.0L1909.5,245.0L1909.5,239.8L1909.1,234.6L1906.1,229.8L1902.9,225.1L1900.7,219.8L1899.0,214.4L1900.2,209.3L1900.7,204.1L1902.4,199.2L1903.3,194.1L1906.0,192.3L1908.4,190.4L1911.0,188.6L1913.1,186.2L1915.6,184.4L1918.4,182.9L1921.0,181.2L1923.6,179.6L1928.0,179.7L1932.3,179.3L1936.7,179.5L1941.0,179.6L1944.9,175.9L1947.8,171.5L1950.0,166.7L1952.6,162.2L1951.6,159.0L1951.1,155.7L1950.5,152.5L1949.8,149.3L1949.4,146.0L1949.4,142.7L1949.6,139.4L1949.7,136.1L1945.3,133.1L1941.7,129.2L1936.9,127.0L1932.3,124.5L1928.0,120.8L1923.9,116.9L1919.3,113.5L1914.9,110.0L1912.2,108.0L1909.6,105.8L1907.3,103.3L1905.1,100.8L1902.8,98.3L1900.8,95.6L1899.2,92.6L1897.5,89.7L1892.6,86.8L1888.0,83.4L1884.2,79.2L1880.1,75.2L1877.2,74.1L1874.4,72.6L1871.7,71.2L1869.1,69.5L1866.0,69.0L1863.0,68.0L1859.9,67.4L1856.9,66.5L1853.1,66.5L1849.3,65.7L1845.6,64.7L1841.9,64.0L1838.6,62.0L1835.3,60.1L1831.6,59.0L1828.0,57.8L1824.3,56.4L1820.8,54.8L1816.9,54.5L1813.2,53.5L1809.7,51.8L1806.0,50.7L1802.6,48.9L1799.0,47.6L1795.2,47.1L1791.6,46.2L1788.0,45.2L1784.6,43.5L1780.9,42.7L1777.3,42.1L1773.7,41.0L1770.0,40.4L1766.3,40.2L1762.6,40.4L1759.0,40.2L1755.3,40.6L1751.8,39.4L1748.2,38.6L1744.7,37.7L1741.0,37.5L1736.5,35.5L1731.8,34.0L1727.6,31.5L1723.6,28.8L1721.1,24.9L1718.6,20.8L1715.5,17.4L1712.0,14.3L1710.2,10.8L1708.8,7.1L1707.0,3.6L1704.7,0.4L1705.0,0.0L1414.4,0.0L1412.8,0.1L1408.7,0.4L1404.6,0.2L1400.4,0.3L1398.1,0.0L1381.1,0.0L1379.8,0.2L1375.7,0.5L1371.6,0.7L1367.4,0.5L1363.3,0.1L1362.6,0.0L1343.9,0.0L1342.7,0.1L1341.2,0.0L1335.0,0.0L1334.5,0.0L1334.3,0.0L1322.9,0.0L1322.2,0.1L1318.0,0.3L1313.9,0.4L1309.8,0.1L1305.6,0.3L1301.5,0.5L1297.4,0.7L1293.2,0.8L1289.2,1.7L1285.1,2.3L1281.0,3.0L1276.9,3.8L1272.8,3.8L1268.6,4.0L1264.5,4.4L1260.4,5.0L1256.3,5.0L1252.1,5.0L1248.0,5.2L1243.9,5.7L1239.8,5.2L1235.7,4.2L1231.6,4.2L1227.5,3.7L1223.3,3.3L1219.2,2.8L1215.1,2.9L1211.0,2.7L1206.8,2.2L1202.7,2.1L1198.6,1.9L1194.5,1.3L1190.4,1.1L1186.2,0.8L1182.1,0.2L1178.0,0.0L1178.4,4.4L1179.2,8.8L1180.5,13.1L1182.6,17.0L1182.2,20.5L1181.3,24.0L1180.7,27.5ZM246.0,779.0L245.0,772.0L234.0,773.0L235.0,780.0L246.0,779.0ZM536.0,933.0L541.0,928.0L543.5,910.5L533.5,915.5L531.0,923.0L536.0,933.0ZM611.8,1129.2L611.0,1133.0L614.0,1137.8L616.0,1143.0L618.4,1139.5L620.0,1135.6L622.1,1132.0L623.5,1128.0L625.6,1123.6L628.4,1119.7L630.2,1115.3L631.0,1110.5L627.2,1108.7L623.2,1107.4L619.8,1104.9L616.0,1103.0L615.0,1106.7L614.6,1110.5L614.0,1114.3L613.9,1118.1L613.3,1121.8L613.2,1125.7L611.8,1129.2ZM643.9,1151.0L643.3,1154.5L643.5,1158.0L647.3,1161.0L651.0,1164.3L654.4,1167.8L658.5,1170.5L659.5,1167.1L660.3,1163.7L661.3,1160.3L662.3,1157.0L662.8,1153.5L662.8,1150.0L663.3,1146.5L663.5,1143.0L660.3,1139.3L656.5,1136.1L652.4,1133.4L648.5,1130.5L647.7,1133.9L646.8,1137.3L645.7,1140.6L644.8,1144.0L644.6,1147.6L643.9,1151.0ZM723.5,1170.5L716.0,1168.0L717.0,1177.0L723.5,1178.0L723.5,1170.5ZM1191.4,65.9L1192.6,65.9L1193.6,65.1L1194.0,63.8L1193.6,62.4L1192.6,61.6L1191.4,61.6L1190.4,62.4L1190.0,63.8L1190.4,65.1L1191.4,65.9ZM1487.9,409.3L1492.9,412.6L1499.1,412.6L1504.1,409.3L1506.0,404.0L1504.1,398.7L1499.1,395.4L1492.9,395.4L1487.9,398.7L1486.0,404.0L1487.9,409.3ZM1536.3,415.9L1539.3,415.9L1541.7,414.9L1542.6,413.4L1541.7,411.8L1539.3,410.8L1536.3,410.8L1533.9,411.8L1533.0,413.4L1533.9,414.9L1536.3,415.9ZM1545.9,500.6L1549.6,499.4L1552.7,497.1L1555.7,494.7L1558.9,489.7L1560.9,484.2L1558.7,482.1L1556.5,479.9L1554.8,477.5L1553.0,475.0L1549.4,475.8L1546.1,477.4L1543.1,479.6L1539.9,481.5L1538.6,484.9L1538.0,488.4L1536.0,491.3L1534.7,494.7L1538.7,498.5L1542.6,502.5L1545.9,500.6ZM1278.5,619.7L1281.5,619.7L1284.0,617.3L1285.0,613.5L1284.0,609.7L1281.5,607.3L1278.5,607.3L1276.0,609.7L1275.0,613.5L1276.0,617.3L1278.5,619.7ZM1307.3,629.8L1312.3,629.8L1316.4,627.9L1318.0,625.0L1316.4,622.1L1312.3,620.2L1307.3,620.2L1303.2,622.1L1301.6,625.0L1303.2,627.9L1307.3,629.8ZM1334.7,668.9L1339.2,670.8L1344.8,670.8L1349.3,668.9L1351.0,666.0L1349.3,663.1L1344.8,661.2L1339.2,661.2L1334.7,663.1L1333.0,666.0L1334.7,668.9ZM1528.5,748.5L1532.3,747.9L1536.2,748.1L1539.6,747.2L1543.2,746.7L1546.6,745.8L1549.8,744.2L1551.6,740.3L1552.6,738.4L1553.5,738.0L1553.1,737.6L1553.7,736.5L1550.1,732.3L1545.9,728.7L1544.4,730.5L1541.5,730.6L1537.1,731.1L1532.7,730.6L1528.3,729.6L1524.0,730.2L1519.5,730.5L1515.3,731.9L1511.0,733.0L1512.4,735.6L1509.0,736.5L1510.1,739.3L1511.0,742.3L1515.5,745.7L1520.7,748.1L1524.6,748.2L1528.5,748.5ZM1530.8,773.8L1533.2,773.8L1535.2,772.1L1536.0,769.5L1535.2,766.9L1533.2,765.2L1530.8,765.2L1528.8,766.9L1528.0,769.5L1528.8,772.1L1530.8,773.8ZM1413.5,796.9L1415.9,799.5L1417.8,802.4L1421.2,803.6L1424.6,804.4L1428.1,805.0L1431.4,806.3L1437.3,805.9L1443.0,804.4L1444.4,800.7L1444.8,796.7L1445.2,792.8L1445.0,788.9L1440.7,786.2L1436.9,782.9L1432.4,780.5L1427.5,779.2L1423.0,778.8L1418.6,778.0L1414.3,776.9L1410.1,775.3L1406.1,776.0L1402.3,777.2L1404.7,780.3L1406.4,783.9L1408.3,787.3L1410.1,790.8L1411.6,794.0L1413.5,796.9ZM1448.9,822.8L1451.8,819.9L1445.0,810.2L1439.2,812.2L1441.1,818.0L1448.9,822.8ZM1305.7,1342.3L1306.0,1345.5L1310.0,1346.3L1313.9,1347.6L1318.1,1347.5L1322.1,1348.2L1326.2,1348.0L1330.3,1348.3L1334.4,1347.9L1338.5,1348.0L1337.4,1343.6L1337.1,1339.1L1336.9,1334.5L1337.0,1330.0L1335.5,1325.8L1334.4,1321.4L1332.9,1317.1L1331.0,1313.0L1327.4,1314.6L1323.6,1315.6L1320.1,1317.2L1316.5,1318.6L1312.6,1318.9L1308.6,1318.9L1304.8,1319.6L1301.0,1320.5L1302.5,1323.4L1303.5,1326.4L1304.2,1329.6L1304.8,1332.7L1305.3,1335.9L1305.2,1339.1L1305.7,1342.3ZM1332.5,1439.0L1331.2,1436.1L1329.5,1433.4L1328.1,1430.5L1327.6,1427.4L1327.4,1424.2L1326.8,1421.1L1326.0,1418.0L1323.5,1414.0L1321.7,1409.6L1318.9,1405.7L1316.0,1402.0L1313.2,1403.7L1310.4,1405.2L1307.7,1407.0L1305.2,1409.0L1303.1,1411.4L1300.9,1413.8L1298.3,1415.7L1296.0,1418.0L1294.9,1421.1L1293.8,1424.2L1293.2,1427.4L1292.7,1430.7L1291.5,1433.8L1289.8,1436.6L1288.0,1439.4L1286.8,1441.0L1333.2,1441.0L1332.5,1439.0ZM1943.3,33.8L1943.9,37.5L1939.6,37.7L1935.2,38.0L1930.9,37.2L1926.5,37.5L1924.9,41.8L1923.6,46.2L1926.9,45.9L1930.2,46.2L1933.5,46.6L1936.7,47.0L1940.0,47.8L1943.2,48.2L1946.5,48.5L1949.7,49.1L1954.1,48.7L1958.4,48.5L1962.8,48.4L1967.1,49.1L1967.8,52.7L1968.9,56.3L1969.7,59.9L1970.0,63.6L1968.3,68.2L1966.8,72.9L1964.4,77.1L1961.3,81.0L1963.1,85.2L1964.1,89.7L1965.5,94.1L1967.1,98.4L1969.0,93.9L1971.6,89.7L1973.7,85.4L1975.8,81.0L1980.1,80.1L1984.6,79.7L1988.9,79.1L1993.2,78.1L1991.1,81.0L1988.8,83.8L1986.5,86.7L1984.5,89.7L1983.3,93.1L1982.2,96.5L1981.1,99.9L1980.1,103.4L1978.3,106.4L1976.2,109.4L1974.7,112.7L1972.9,115.8L1974.3,118.7L1975.8,121.6L1977.2,124.5L1978.7,127.4L1981.6,125.1L1984.8,123.3L1987.7,121.2L1990.3,118.7L1994.0,118.5L1997.6,117.6L2001.1,116.3L2003.0,116.0L2003.0,0.5L2000.7,0.8L1996.5,1.2L1992.3,1.3L1988.1,1.4L1984.0,1.2L1979.8,0.7L1975.6,0.9L1971.5,0.6L1967.3,0.5L1963.1,0.0L1962.8,0.0L1948.0,0.0L1946.5,0.3L1942.3,0.0L1938.1,0.4L1939.1,6.1L1938.7,11.8L1939.7,17.4L1941.0,23.0L1942.1,26.5L1943.0,30.1L1943.3,33.8ZM1619.8,301.0L1624.6,301.7L1629.1,303.2L1626.1,306.1L1623.6,309.6L1621.3,313.0L1618.6,316.3L1615.3,316.7L1612.1,317.7L1608.9,318.7L1605.6,319.6L1602.3,320.2L1599.1,321.1L1595.7,321.2L1592.4,321.5L1587.2,323.1L1581.9,324.2L1581.3,328.1L1581.2,332.1L1579.8,335.9L1579.3,339.9L1581.9,343.2L1584.7,346.4L1587.6,349.4L1589.8,353.0L1593.3,355.3L1596.3,358.3L1599.6,360.9L1602.9,363.5L1605.3,361.6L1607.8,359.7L1610.4,357.9L1612.7,355.8L1615.3,354.2L1618.2,352.9L1621.1,351.8L1623.9,350.4L1627.1,347.0L1630.4,343.8L1634.0,340.8L1637.0,337.3L1639.1,334.8L1641.2,332.3L1643.0,329.5L1644.9,326.8L1646.0,323.4L1647.8,320.4L1648.8,317.0L1650.1,313.7L1646.4,312.4L1643.0,310.6L1640.2,308.0L1637.0,305.8L1642.2,303.1L1647.5,300.6L1649.0,296.0L1650.7,291.6L1651.5,286.8L1652.7,282.2L1648.6,280.6L1644.6,278.8L1640.6,276.8L1637.0,274.3L1632.4,275.1L1627.8,275.4L1623.2,276.3L1618.6,277.0L1617.0,280.4L1614.8,283.6L1613.0,287.0L1610.8,290.1L1605.6,289.1L1600.3,289.2L1595.1,290.1L1589.8,290.1L1589.8,295.3L1594.9,296.8L1600.2,297.4L1605.4,298.1L1610.8,297.9L1615.4,299.0L1619.8,301.0ZM1553.1,404.0L1554.2,404.4L1555.5,404.4L1556.6,404.0L1557.0,403.2L1556.6,402.5L1555.5,402.1L1554.2,402.1L1553.1,402.5L1552.7,403.2L1553.1,404.0ZM1610.5,405.9L1614.5,405.9L1617.8,405.0L1619.0,403.5L1617.8,402.0L1614.5,401.1L1610.5,401.1L1607.2,402.0L1606.0,403.5L1607.2,405.0L1610.5,405.9ZM1567.0,407.9L1568.3,407.9L1569.3,407.4L1569.7,406.5L1569.3,405.6L1568.3,405.1L1567.0,405.1L1566.0,405.6L1565.6,406.5L1566.0,407.4L1567.0,407.9ZM1600.3,460.6L1603.6,464.5L1606.2,468.9L1610.1,472.3L1613.4,476.3L1612.5,480.2L1611.3,484.0L1610.9,488.0L1610.8,492.0L1613.7,494.3L1616.5,496.8L1619.1,499.4L1621.2,502.5L1625.3,501.5L1629.2,500.3L1633.1,498.8L1637.0,497.3L1640.4,492.8L1644.9,489.4L1646.7,486.4L1648.0,483.1L1648.9,479.6L1650.1,476.3L1652.2,473.1L1653.8,469.6L1655.5,466.2L1658.0,463.2L1659.3,459.9L1660.7,456.7L1661.7,453.3L1663.2,450.1L1665.0,446.6L1666.4,443.1L1667.5,439.4L1668.5,435.6L1662.6,436.7L1656.7,436.9L1650.7,436.8L1644.8,437.1L1638.8,437.1L1632.9,436.7L1627.1,435.2L1621.2,434.3L1616.9,434.1L1612.6,434.6L1608.2,435.0L1603.9,435.0L1599.7,436.2L1595.7,437.9L1591.5,438.9L1587.1,439.6L1590.1,444.7L1592.4,450.1L1594.0,453.0L1595.9,455.6L1598.0,458.2L1600.3,460.6ZM1975.5,475.1L1973.5,479.0L1972.3,483.4L1971.7,487.8L1969.7,491.9L1968.5,496.2L1967.1,500.5L1966.6,505.0L1966.5,509.5L1966.0,514.0L1968.6,519.0L1971.0,524.0L1973.1,520.3L1975.5,516.9L1977.7,513.3L1980.0,509.7L1981.7,505.9L1982.8,501.8L1984.1,497.8L1986.0,494.0L1987.0,489.5L1987.8,485.0L1989.8,480.9L1991.6,476.7L1993.1,472.3L1993.7,467.8L1995.3,463.5L1996.0,459.0L1993.5,455.9L1991.0,452.7L1988.8,449.4L1986.0,446.5L1984.3,450.5L1983.3,454.8L1981.6,458.8L1979.6,462.7L1978.6,467.0L1977.2,471.1L1975.5,475.1ZM1616.0,617.5L1621.0,619.2L1625.5,621.9L1628.9,620.9L1632.4,620.5L1635.8,619.4L1639.1,618.1L1642.4,613.5L1644.9,608.3L1640.3,605.8L1635.2,604.5L1632.3,602.5L1629.6,600.2L1626.4,598.8L1623.6,596.7L1623.8,593.3L1623.6,589.9L1623.2,586.5L1623.6,583.1L1619.7,583.1L1618.3,587.9L1617.7,592.8L1615.6,595.1L1613.2,597.1L1610.5,598.7L1608.0,600.6L1603.5,601.4L1598.9,602.4L1594.8,604.5L1590.6,606.4L1594.6,608.0L1598.5,610.0L1602.2,612.2L1606.1,614.2L1611.1,615.6L1616.0,617.5ZM1868.5,654.0L1876.0,651.5L1866.0,636.5L1853.5,631.5L1858.5,644.0L1868.5,654.0ZM1561.2,730.8L1565.8,730.8L1569.6,729.4L1571.0,727.0L1569.6,724.6L1565.8,723.2L1561.2,723.2L1557.4,724.6L1556.0,727.0L1557.4,729.4L1561.2,730.8ZM1577.9,764.4L1581.4,763.3L1584.7,761.7L1587.6,760.6L1590.5,759.6L1593.3,758.3L1596.2,757.3L1599.2,756.5L1602.3,756.2L1605.1,755.0L1608.0,753.9L1614.0,753.9L1619.9,753.6L1625.8,752.3L1631.3,750.0L1631.6,745.1L1633.3,740.3L1637.3,738.8L1641.0,736.4L1644.7,734.0L1648.8,732.6L1653.0,730.2L1657.5,728.7L1662.0,726.9L1666.3,724.8L1671.1,721.8L1676.0,719.0L1673.0,718.0L1670.4,716.3L1667.4,715.5L1664.3,715.1L1659.0,716.3L1653.6,716.6L1648.2,716.4L1643.0,715.1L1639.2,716.8L1635.1,717.8L1631.3,719.4L1627.4,720.9L1622.2,723.1L1617.0,725.4L1611.6,727.4L1606.1,728.7L1603.1,731.3L1600.0,733.7L1596.7,735.9L1593.2,737.6L1589.5,739.1L1586.1,741.1L1582.5,742.5L1578.9,744.2L1575.6,746.0L1572.6,748.5L1569.9,751.1L1567.4,754.0L1564.4,756.5L1561.8,759.2L1558.9,761.7L1555.6,763.6L1559.6,764.4L1563.6,764.7L1567.4,765.9L1571.2,767.5L1574.5,766.0L1577.9,764.4ZM1611.0,1030.5L1601.0,1020.5L1603.5,1033.0L1610.0,1038.0L1611.0,1030.5ZM1848.5,1084.0L1838.5,1083.0L1841.0,1087.0L1851.0,1088.0L1848.5,1084.0Z" fill="none" stroke="#5c5c64" stroke-width="2.2" stroke-linejoin="round"/></svg>
</div>
<div class="abs" style="left:604px;top:1747px;width:2004px;height:42px;background:#333;border:2px solid #5e5e5e;border-top:none">
</div>
<!-- catalog -->
<div class="panel" style="left:2619px;top:265px;width:571px;height:1524px">
</div>
<div class="abs" style="left:0;top:1798px;width:3200px;height:2px;background:#0a0a0a"></div>
<svg class="abs" style="left:504.0px;top:288.5px" width="14" height="8" viewBox="0 0 14 8"><path d="M1,1.5 L7.0,6 L13,1.5" fill="none" stroke="#d8d8d8" stroke-width="2"/></svg>
<svg class="abs" style="left:534px;top:283px" width="15" height="19" viewBox="0 0 15 19"><path d="M3,1 H12 M4,1 V11 H11 V1 M1,11 H14 M7.5,11 V19" fill="none" stroke="#d8d8d8" stroke-width="2"/><rect x="8" y="2" width="2.5" height="8" fill="#d8d8d8"/></svg>
<svg class="abs" style="left:563px;top:284px" width="17" height="17" viewBox="0 0 17 17"><path d="M1,1 L16,16 M16,1 L1,16" stroke="#d8d8d8" stroke-width="2"/></svg>
<svg class="abs" style="left:18px;top:327px" width="23" height="29" viewBox="0 0 23 29"><path d="M1,1 H22 V4 L14,14 V28 H9 V14 L1,4Z" fill="#4a4a4a" stroke="#9a9a9a" stroke-width="2"/></svg>
<div class="abs" style="left:53px;top:322px;width:534px;height:40px;background:#1f1f1f;border:2px solid #6e6e6e"></div>
<svg class="abs" style="left:521px;top:331px" width="23" height="23" viewBox="0 0 23 23"><circle cx="14" cy="9" r="6.5" fill="none" stroke="#c8c8c8" stroke-width="2.4"/><path d="M9.5,13.5 L2,21" stroke="#c8c8c8" stroke-width="3"/></svg>
<svg class="abs" style="left:562.0px;top:338px" width="14" height="8" viewBox="0 0 14 8"><path d="M1,1.5 L7.0,6 L13,1.5" fill="none" stroke="#c8c8c8" stroke-width="2"/></svg>
<svg class="abs" style="left:44px;top:378px" width="39" height="38" viewBox="0 0 39 38"><path d="M3,1 H13 L15,8 H1Z M1,10 H15 V14 H1Z" fill="#d4b43a"/><path d="M21,16 H32 L34,24 H19Z M20,31 H33 L34,37 H19Z" fill="#d4b43a"/><path d="M7,14 V34 H19 M7,21 H19" fill="none" stroke="#d0d0d0" stroke-width="1.8"/></svg>
<svg class="abs" style="left:98px;top:380px" width="36" height="34" viewBox="0 0 36 34"><path d="M1.5,7 V27 A16.5,6 0 0 0 34.5,27 V7" fill="#454545" stroke="#c8c8c8" stroke-width="2"/><ellipse cx="18" cy="7" rx="16.5" ry="6" fill="#4a4a4a" stroke="#c8c8c8" stroke-width="2"/><path d="M24,13 V32" stroke="#3c3c3c" stroke-width="1"/></svg>
<svg class="abs" style="left:153px;top:380px" width="34" height="34" viewBox="0 0 34 34"><rect x="1" y="1" width="32" height="32" rx="3" fill="#8a8a8a" stroke="#c8c8c8" stroke-width="2"/><path d="M2,2 H10 C10,14 20,20 22,32 H2Z" fill="#12b6ec"/><path d="M10,2 C10,14 20,20 22,32 M17,16 C20,11 25,9 32,9" fill="none" stroke="#17405a" stroke-width="1.6"/></svg>
<svg class="abs" style="left:206px;top:380px" width="35" height="34" viewBox="0 0 35 34"><path d="M2,32 L5,24 L27,2 L33,8 L11,30Z" fill="#d8b83a"/><path d="M27,2 L33,8 L30,11 L24,5Z" fill="#e07850"/><path d="M2,32 L5,24 L10,29Z" fill="#e0c8a0"/></svg>
<svg class="abs" style="left:257px;top:378px" width="41" height="39" viewBox="0 0 41 39"><path d="M1,1 H29 V29 H1Z M15,1 V29 M1,15 H29" fill="none" stroke="#a8a8a8" stroke-width="2"/><path d="M29,18 V38 M19,28 H40" stroke="#4aa0e0" stroke-width="3.5"/></svg>
<svg class="abs" style="left:312px;top:380px" width="38" height="36" viewBox="0 0 38 36"><path d="M1,22 L20,2 L37,16 L18,35 L3,35Z" fill="#c8842e" stroke="#e0a050" stroke-width="1.5"/><circle cx="11" cy="26" r="3" fill="none" stroke="#333" stroke-width="2"/><path d="M14,12 L26,22 M18,9 L29,19 M11,16 L22,26" stroke="#8a5a20" stroke-width="1.4"/></svg>
<div class="abs" style="left:36px;top:427px;width:54px;height:6px;background:#2196f3"></div>
<div class="abs" style="left:90px;top:431px;width:267px;height:2px;background:#6a6a6a"></div>
<svg class="abs" style="left:15px;top:505px" width="13" height="13" viewBox="0 0 13 13"><path d="M12,1 V12 H1Z" fill="#b4b4b4"/></svg>
<svg class="abs" style="left:33px;top:497px" width="29" height="29" viewBox="0 0 29 29"><rect x="1" y="1" width="27" height="27" fill="#222" stroke="#b0b0b0" stroke-width="2"/><rect x="4" y="4" width="21" height="21" fill="#3aa040"/><path d="M18,4 H25 V19 C22,22 18,22 14,25 H8 C9,20 14,16 18,4Z" fill="#2a78c0"/></svg>
<svg class="abs" style="left:33px;top:545px" width="13" height="13" viewBox="0 0 13 13"><path d="M12,1 V12 H1Z" fill="#b4b4b4"/></svg>
<svg class="abs" style="left:52px;top:541px" width="25" height="24" viewBox="0 0 25 24"><rect x="1" y="1" width="23" height="22" rx="3" fill="#222" stroke="#9a9a9a" stroke-width="2"/><path d="M5,12 L10,17 L19,6" fill="none" stroke="#e0e0e0" stroke-width="3"/></svg>
<div class="abs" style="left:59px;top:576px;width:33px;height:27px;background:#bcbef8;border:1px solid #d8d8e8"></div>
<svg class="abs" style="left:613px;top:272px" width="27" height="27" viewBox="0 0 27 27"><rect x="1" y="1" width="25" height="25" fill="#1a1a1a" stroke="#c8c8c8" stroke-width="2"/><rect x="3" y="3" width="21" height="21" fill="#4a9e48"/><path d="M17,3 H24 V16 C21,19 17,19 13,24 H9 C10,18 14,14 17,3Z" fill="#2a70b8"/></svg>
<svg class="abs" style="left:703px;top:277px" width="17" height="17" viewBox="0 0 17 17"><path d="M1,1 L16,16 M16,1 L1,16" stroke="#e8f0ff" stroke-width="2"/></svg>
<svg class="abs" style="left:2586.0px;top:281px" width="14" height="8" viewBox="0 0 14 8"><path d="M1,1.5 L7.0,6 L13,1.5" fill="none" stroke="#cfcfcf" stroke-width="2"/></svg>
<div class="t" style="left:21.7px;top:281.1px;font-size:26.5px;color:#f0f0f0;transform:scaleX(1.0021);transform-origin:0 0">Contents</div>
<div class="t" style="left:63.4px;top:333.6px;font-size:19.5px;color:#c4c4c4;font-style:italic;transform:scaleX(0.9224);transform-origin:0 0">Search</div>
<div class="t" style="left:37.5px;top:457.2px;font-size:22.5px;color:#ececec;font-weight:bold;transform:scaleX(0.9886);transform-origin:0 0">Drawing Order</div>
<div class="t" style="left:69.9px;top:503.4px;font-size:20px;color:#ebebeb;transform:scaleX(1.0024);transform-origin:0 0">Map</div>
<div class="t" style="left:85.0px;top:543.2px;font-size:20px;color:#ebebeb;transform:scaleX(0.9979);transform-origin:0 0">MunicipalUnit2021</div>
<div class="t" style="left:649.0px;top:276.4px;font-size:20px;color:#f4f8ff;transform:scaleX(0.9921);transform-origin:0 0">Map</div>
<svg class="abs" style="left:3101.5px;top:288px" width="14" height="8" viewBox="0 0 14 8"><path d="M1,1.5 L7.0,6 L13,1.5" fill="none" stroke="#d8d8d8" stroke-width="2"/></svg>
<svg class="abs" style="left:3131px;top:282px" width="15" height="19" viewBox="0 0 15 19"><path d="M3,1 H12 M4,1 V11 H11 V1 M1,11 H14 M7.5,11 V19" fill="none" stroke="#d8d8d8" stroke-width="2"/><rect x="8" y="2" width="2.5" height="8" fill="#d8d8d8"/></svg>
<svg class="abs" style="left:3160px;top:284px" width="17" height="17" viewBox="0 0 17 17"><path d="M1,1 L16,16 M16,1 L1,16" stroke="#d8d8d8" stroke-width="2"/></svg>
<div class="abs" style="left:2630px;top:354px;width:69px;height:5px;background:#2196f3"></div>
<svg class="abs" style="left:3151px;top:329px" width="24" height="22" viewBox="0 0 24 22"><rect x="0" y="0" width="24" height="5" rx="2" fill="#b8b8b8"/><rect x="0" y="8.5" width="24" height="5" rx="2" fill="#b8b8b8"/><rect x="0" y="17" width="24" height="5" rx="2" fill="#b8b8b8"/></svg>
<svg class="abs" style="left:2628px;top:377px" width="30" height="32" viewBox="0 0 30 32"><circle cx="15" cy="16" r="13.5" fill="none" stroke="#5c5c5c" stroke-width="2"/><path d="M22,16 H8 M14,10 L8,16 L14,22" fill="none" stroke="#5c5c5c" stroke-width="2.2"/></svg>
<div class="abs" style="left:2667px;top:374px;width:513px;height:39px;background:#1f1f1f;border:2px solid #6e6e6e"></div>
<div class="abs" style="left:2699px;top:374px;width:2px;height:39px;background:#6e6e6e"></div>
<div class="abs" style="left:2737px;top:374px;width:2px;height:39px;background:#6e6e6e"></div>
<div class="abs" style="left:2669px;top:376px;width:30px;height:35px;background:#333"></div>
<div class="abs" style="left:2701px;top:376px;width:36px;height:35px;background:#333"></div>
<svg class="abs" style="left:2673px;top:383px" width="22" height="21" viewBox="0 0 22 21"><path d="M2,10 L11,2 L20,10 M4,9 V20 H18 V9" fill="none" stroke="#5c5c5c" stroke-width="2"/><rect x="9" y="13" width="4" height="7" fill="#5a7a5a"/></svg>
<svg class="abs" style="left:2707px;top:381px" width="25" height="26" viewBox="0 0 25 26"><path d="M1,1 H24 V4 L15,14 V25 H10 V14 L1,4Z" fill="#3a3a3a" stroke="#b8b8b8" stroke-width="2"/></svg>
<svg class="abs" style="left:3115px;top:382px" width="22" height="22" viewBox="0 0 22 22"><circle cx="13.5" cy="8.5" r="6.5" fill="none" stroke="#c8c8c8" stroke-width="2.4"/><path d="M9,13 L2,20" stroke="#c8c8c8" stroke-width="3"/></svg>
<svg class="abs" style="left:3155.5px;top:389.5px" width="14" height="8" viewBox="0 0 14 8"><path d="M1,1.5 L7.0,6 L13,1.5" fill="none" stroke="#c8c8c8" stroke-width="2"/></svg>
<svg class="abs" style="left:2641px;top:438.8px" width="11" height="13" viewBox="0 0 11 13"><path d="M1.5,1.5 L9.5,6.5 L1.5,11.5Z" fill="none" stroke="#b8b8b8" stroke-width="1.5"/></svg>
<svg class="abs" style="left:2663px;top:433.3px" width="27" height="26" viewBox="0 0 27 26"><path d="M1,3 H10 L11.5,1 H26 V22 H23.5 V7 H3.5 V22 H1Z" fill="#dcc13a"/><rect x="3.5" y="7" width="20" height="15" fill="#2c2c2c"/><rect x="5" y="9" width="16" height="15" fill="#2f9a3a" stroke="#aaa" stroke-width="1.5"/><path d="M14,10 H20 V17 C17,19 14,20 11,23 H9 C10,19 13,15 14,10Z" fill="#2a70b8"/></svg>
<svg class="abs" style="left:2641px;top:478.2px" width="11" height="13" viewBox="0 0 11 13"><path d="M1.5,1.5 L9.5,6.5 L1.5,11.5Z" fill="none" stroke="#b8b8b8" stroke-width="1.5"/></svg>
<svg class="abs" style="left:2663px;top:472.7px" width="27" height="26" viewBox="0 0 27 26"><path d="M1,3 H10 L11.5,1 H26 V22 H23.5 V7 H3.5 V22 H1Z" fill="#dcc13a"/><rect x="3.5" y="7" width="20" height="15" fill="#2c2c2c"/><rect x="2" y="14" width="21" height="11" fill="#c8401c"/><rect x="9" y="10" width="7" height="4.5" fill="none" stroke="#ddd" stroke-width="1.4"/><path d="M2,19 H23" stroke="#7a2a10" stroke-width="1"/></svg>
<svg class="abs" style="left:2640px;top:518.5px" width="12" height="12" viewBox="0 0 12 12"><path d="M11,1 V11 H1Z" fill="#b4b4b4"/></svg>
<svg class="abs" style="left:2663px;top:512.5px" width="27" height="26" viewBox="0 0 27 26"><path d="M1,3 H10 L11.5,1 H26 V22 H23.5 V7 H3.5 V22 H1Z" fill="#dcc13a"/><rect x="3.5" y="7" width="20" height="15" fill="#2c2c2c"/><path d="M5.5,15 V23 A8,2.8 0 0 0 21.5,23 V15" fill="#3a3a3a" stroke="#aaa" stroke-width="1.4"/><ellipse cx="13.5" cy="15" rx="8" ry="2.8" fill="#444" stroke="#aaa" stroke-width="1.4"/></svg>
<svg class="abs" style="left:2641px;top:638.5px" width="11" height="13" viewBox="0 0 11 13"><path d="M1.5,1.5 L9.5,6.5 L1.5,11.5Z" fill="none" stroke="#b8b8b8" stroke-width="1.5"/></svg>
<svg class="abs" style="left:2663px;top:633px" width="27" height="26" viewBox="0 0 27 26"><path d="M1,3 H10 L11.5,1 H26 V22 H1Z" fill="#dcc13a"/><rect x="3.5" y="5.5" width="20" height="2.2" fill="#2c2c2c"/><path d="M5,19 C2,13 8,9 14,10 C19,11 20,15 16,16 C13,17 15,21 11,22 C8,23 6,21 5,19Z" fill="#444" stroke="#ccc" stroke-width="1.4"/><circle cx="9" cy="14" r="1.2" fill="#4a9ae0"/><circle cx="12" cy="12.5" r="1.2" fill="#3aa040"/><path d="M12,22 L24,11" stroke="#aaa" stroke-width="2"/><path d="M10,24 L13,20 L14,23Z" fill="#e08030"/></svg>
<svg class="abs" style="left:2641px;top:678.5px" width="11" height="13" viewBox="0 0 11 13"><path d="M1.5,1.5 L9.5,6.5 L1.5,11.5Z" fill="none" stroke="#b8b8b8" stroke-width="1.5"/></svg>
<svg class="abs" style="left:2663px;top:673px" width="27" height="26" viewBox="0 0 27 26"><path d="M1,3 H10 L11.5,1 H26 V22 H1Z" fill="#dcc13a"/><rect x="3.5" y="5.5" width="20" height="2.2" fill="#2c2c2c"/><path d="M11,14 L19,19 L11,24Z" fill="#bdbdbd"/></svg>
<svg class="abs" style="left:2641px;top:718.5px" width="11" height="13" viewBox="0 0 11 13"><path d="M1.5,1.5 L9.5,6.5 L1.5,11.5Z" fill="none" stroke="#b8b8b8" stroke-width="1.5"/></svg>
<svg class="abs" style="left:2663px;top:713px" width="27" height="26" viewBox="0 0 27 26"><path d="M1,3 H10 L11.5,1 H26 V22 H1Z" fill="#dcc13a"/><rect x="3.5" y="5.5" width="20" height="2.2" fill="#2c2c2c"/><path d="M3,17 L11,8 L19,17Z" fill="#d8502a"/><rect x="6" y="17" width="10" height="8" fill="#333" stroke="#ccc" stroke-width="1.3"/><rect x="9.5" y="19" width="3.5" height="3.5" fill="#3ea0ea"/><path d="M5,25.5 H17" stroke="#5a9a5a" stroke-width="1.5"/></svg>
<svg class="abs" style="left:2665px;top:559px" width="12" height="12" viewBox="0 0 12 12"><path d="M11,1 V11 H1Z" fill="#b4b4b4"/></svg>
<svg class="abs" style="left:2692px;top:553px" width="31" height="30" viewBox="0 0 31 30"><path d="M1.5,5 V15 A10,3.8 0 0 0 21.5,15 V5" fill="#3a3a3a" stroke="#9a9a9a" stroke-width="1.6"/><ellipse cx="11.5" cy="5" rx="10" ry="3.8" fill="#444" stroke="#9a9a9a" stroke-width="1.6"/><path d="M10,18 L19,10 L28,18 V28 H10Z" fill="#f4f4f4" stroke="#333" stroke-width="1.3" stroke-linejoin="round"/><rect x="20" y="20" width="4" height="8" fill="#c8842e"/><rect x="13" y="20" width="4" height="4" fill="#5a8ac0"/></svg>
<div class="abs" style="left:2710px;top:584px;width:469px;height:39px;background:#5c5c5c;border:1px solid #7a7a7a"></div>
<svg class="abs" style="left:2716px;top:591px" width="29" height="26" viewBox="0 0 29 26"><rect x="1" y="1" width="27" height="24" rx="3" fill="#3a3a3a" stroke="#c8c8c8" stroke-width="2"/><rect x="7" y="6" width="15" height="14" fill="#777" stroke="#c8c8c8" stroke-width="1.4"/><path d="M8,19 L21,7" stroke="#c8c8c8" stroke-width="1.2"/></svg>
<div class="t" style="left:2630.0px;top:281.2px;font-size:26.5px;color:#f0f0f0;transform:scaleX(0.9853);transform-origin:0 0">Catalog</div>
<div class="t" style="left:2630.0px;top:328.7px;font-size:20px;color:#f0f0f0;font-weight:bold;transform:scaleX(1.0175);transform-origin:0 0">Project</div>
<div class="t" style="left:2716.5px;top:328.7px;font-size:20px;color:#ebebeb;transform:scaleX(1.0239);transform-origin:0 0">Portal</div>
<div class="t" style="left:2787.6px;top:328.7px;font-size:20px;color:#ebebeb;transform:scaleX(1.0819);transform-origin:0 0">Computer</div>
<div class="t" style="left:2900.0px;top:328.7px;font-size:20px;color:#ebebeb;transform:scaleX(1.0188);transform-origin:0 0">Favorites</div>
<div class="t" style="left:2746.0px;top:384.6px;font-size:19.5px;color:#c4c4c4;font-style:italic;transform:scaleX(0.9695);transform-origin:0 0">Search Project</div>
<div class="t" style="left:2704.0px;top:435.7px;font-size:20px;color:#ebebeb;transform:scaleX(0.9610);transform-origin:0 0">Maps</div>
<div class="t" style="left:2704.0px;top:475.1px;font-size:20px;color:#ebebeb;transform:scaleX(0.9827);transform-origin:0 0">Toolboxes</div>
<div class="t" style="left:2704.0px;top:514.9px;font-size:20px;color:#ebebeb;transform:scaleX(0.9307);transform-origin:0 0">Databases</div>
<div class="t" style="left:2704.0px;top:635.4px;font-size:20px;color:#ebebeb;transform:scaleX(0.9088);transform-origin:0 0">Styles</div>
<div class="t" style="left:2704.0px;top:675.4px;font-size:20px;color:#ebebeb;transform:scaleX(0.9385);transform-origin:0 0">Folders</div>
<div class="t" style="left:2704.0px;top:715.4px;font-size:20px;color:#ebebeb;transform:scaleX(0.9385);transform-origin:0 0">Locators</div>
<div class="t" style="left:2730.0px;top:555.4px;font-size:20px;color:#ebebeb;transform:scaleX(0.9594);transform-origin:0 0">The_Four_Color_Theorem.gdb</div>
<div class="t" style="left:2757.0px;top:594.4px;font-size:20px;color:#f0f0f0;transform:scaleX(1.0088);transform-origin:0 0">MunicipalUnit2021</div>
<div class="abs" style="left:614px;top:1749px;width:166px;height:36px;background:#1f1f1f;border:2px solid #6a6a6a"></div>
<svg class="abs" style="left:762px;top:1762px" width="12" height="8" viewBox="0 0 12 8"><path d="M1,1 H11 L6,7Z" fill="#d0d0d0"/></svg>
<div class="abs" style="left:787px;top:1756px;width:2px;height:23px;background:#bcbcbc"></div>
<div class="abs" style="left:997px;top:1756px;width:2px;height:23px;background:#bcbcbc"></div>
<div class="abs" style="left:2224px;top:1756px;width:2px;height:23px;background:#bcbcbc"></div>
<div class="abs" style="left:2461px;top:1756px;width:2px;height:23px;background:#bcbcbc"></div>
<div class="abs" style="left:2511px;top:1756px;width:2px;height:23px;background:#bcbcbc"></div>
<div class="abs" style="left:2560px;top:1756px;width:2px;height:23px;background:#bcbcbc"></div>
<svg class="abs" style="left:797px;top:1752px" width="29" height="31" viewBox="0 0 29 31"><path d="M1,1 H21 V21 H1Z M11,1 V21 M1,11 H21" fill="none" stroke="#a0a0a0" stroke-width="1.6"/><path d="M19,14 V30 M11,22 H28" stroke="#3e90d8" stroke-width="3.5"/></svg>
<svg class="abs" style="left:833px;top:1753px" width="23" height="23" viewBox="0 0 23 23"><path d="M1,1 H22 V22 H1Z M6,1 V22 M11.5,1 V22 M17,1 V22 M1,6 H22 M1,11.5 H22 M1,17 H22" fill="none" stroke="#a0a0a0" stroke-width="1.5"/></svg>
<svg class="abs" style="left:864px;top:1753px" width="29" height="29" viewBox="0 0 29 29"><rect x="2" y="3" width="7" height="4" fill="none" stroke="#c8c8c8" stroke-width="1.5"/><path d="M22,2 V10 M18,6 H26" stroke="#c8c8c8" stroke-width="1.5"/><path d="M6,24 L22,10" stroke="#3ea0ea" stroke-width="2" stroke-dasharray="3,2"/><rect x="19" y="16" width="8" height="5" fill="none" stroke="#c8c8c8" stroke-width="1.5"/><rect x="1" y="23" width="5" height="5" fill="none" stroke="#3aa040" stroke-width="1.5"/><path d="M6,26 H28" stroke="#3ea0ea" stroke-width="2"/></svg>
<svg class="abs" style="left:897px;top:1752px" width="30" height="31" viewBox="0 0 30 31"><rect x="1" y="1" width="12" height="11" fill="#2a6a2a"/><path d="M14,1 V30 M1,15 H29" stroke="#a0a0a0" stroke-width="1.5" stroke-dasharray="2,2"/><rect x="11" y="12" width="6" height="6" fill="none" stroke="#c8c8c8" stroke-width="1.5"/></svg>
<svg class="abs" style="left:929px;top:1752px" width="31" height="31" viewBox="0 0 31 31"><text x="0" y="23" font-family="Liberation Sans" font-weight="bold" font-size="19" fill="#3ea0ea">N</text><path d="M14,30 L26,16 M14,4 V30" stroke="#a0a0a0" stroke-width="1.5"/><path d="M20,3 C24,5 24,9 22,12 M19,9 L22,13 L25,9" fill="none" stroke="#3ea0ea" stroke-width="2"/></svg>
<svg class="abs" style="left:969.0px;top:1764.5px" width="14" height="8" viewBox="0 0 14 8"><path d="M1,1.5 L7.0,6 L13,1.5" fill="none" stroke="#e0e0e0" stroke-width="2.2"/></svg>
<svg class="abs" style="left:1741.5px;top:1764.5px" width="14" height="8" viewBox="0 0 14 8"><path d="M1,1.5 L7.0,6 L13,1.5" fill="none" stroke="#d0d0d0" stroke-width="2.2"/></svg>
<div class="abs" style="left:2232px;top:1752px;width:220px;height:32px;background:#3a3a3a"></div>
<svg class="abs" style="left:2237px;top:1753px" width="28" height="28" viewBox="0 0 28 28"><rect x="11" y="1" width="16" height="16" fill="#5a6a7a" stroke="#3e90d8" stroke-width="1.5"/><circle cx="9" cy="18" r="7" fill="#333" stroke="#8a8a8a" stroke-width="2"/><path d="M5,18 H13 M9,14 V22 M14,23 L19,27" stroke="#8a8a8a" stroke-width="2"/></svg>
<svg class="abs" style="left:2476px;top:1756px" width="22" height="22" viewBox="0 0 22 22"><rect x="1" y="1" width="20" height="20" fill="#4a4a4a" stroke="#5f5f5f" stroke-width="1.5"/><path d="M8,1 C8,8 12,10 13,21 M10,9 C13,7 16,6 21,6" stroke="#3f3f3f" stroke-width="1.5" fill="none"/></svg>
<div class="abs" style="left:2527px;top:1754px;width:6px;height:27px;background:#d8d8d8"></div>
<div class="abs" style="left:2538px;top:1754px;width:6px;height:27px;background:#d8d8d8"></div>
<svg class="abs" style="left:2570px;top:1752px" width="29" height="29" viewBox="0 0 29 29"><path d="M3,12 A11,11 0 0 1 23,8 M26,16 A11,11 0 0 1 6,21" fill="none" stroke="#3ea0ea" stroke-width="3.5"/><path d="M18,9 H27 V1Z M11,20 H2 V28Z" fill="#3ea0ea"/></svg>
<div class="t" style="left:624.6px;top:1758.6px;font-size:19.5px;color:#ebebeb;transform:scaleX(0.9416);transform-origin:0 0">1:1,000,000</div>
<div class="t" style="left:1465.0px;top:1759.6px;font-size:19.5px;color:#ebebeb;transform:scaleX(0.9785);transform-origin:0 0">320,411.06E 4,178,837.52N m</div>
<div class="t" style="left:2271.0px;top:1758.6px;font-size:19.5px;color:#a8a8a8;transform:scaleX(0.9837);transform-origin:0 0">Selected Features: 0</div>
</body></html>
